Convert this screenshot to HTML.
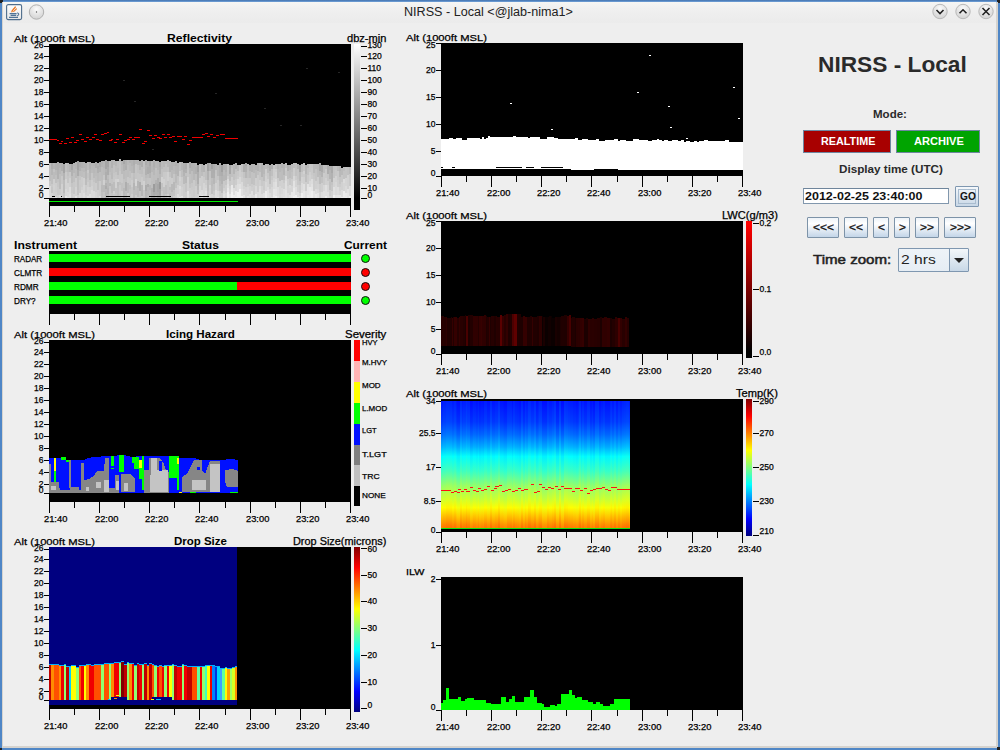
<!DOCTYPE html><html><head><meta charset="utf-8"><style>
html,body{margin:0;padding:0;width:1000px;height:750px;overflow:hidden;background:#eeeeee;}
.t{position:absolute;font-family:"Liberation Sans",sans-serif;white-space:nowrap;line-height:1;transform-origin:0 0;}
.r{position:absolute;}
svg{position:absolute;}
</style></head><body><div style="left:0px;top:0px;width:1000px;height:750px;background:#4f86c6;" class="r"></div>
<div style="left:2px;top:2px;width:996px;height:746px;background:#d5d3cf;" class="r"></div>
<div style="left:3px;top:2px;width:993px;height:744px;background:#eeeeee;" class="r"></div>
<div class="r" style="left:3px;top:0px;width:994px;height:3px;background:linear-gradient(#3f70ad,#6f9fd6 60%,#d8e6f4)"></div>
<div class="r" style="left:3px;top:2px;width:993px;height:21px;background:linear-gradient(#f6f6f4,#f0f0f0 30%,#ebebeb)"></div>
<div style="left:0px;top:0px;width:3px;height:2px;background:#222;" class="r"></div>
<div style="left:0px;top:0px;width:2px;height:3px;background:#222;" class="r"></div>
<div style="left:997px;top:0px;width:3px;height:2px;background:#222;" class="r"></div>
<div style="left:998px;top:0px;width:2px;height:3px;background:#222;" class="r"></div>
<div style="left:0px;top:748px;width:2px;height:2px;background:#222;" class="r"></div>
<div style="left:997px;top:747px;width:3px;height:3px;background:#222;" class="r"></div>
<div class="t" style="top:5.84px;font-size:12px;font-weight:normal;color:#222;left:403.50px;transform:scaleX(1.050);">NIRSS - Local &lt;@jlab-nima1&gt;</div>
<svg style="left:6px;top:4px" width="17" height="17" viewBox="0 0 17 17">
<defs><linearGradient id="ji" x1="0" y1="0" x2="0" y2="1"><stop offset="0" stop-color="#ffffff"/><stop offset="1" stop-color="#e6e6e6"/></linearGradient></defs>
<rect x="0.6" y="0.6" width="15" height="15" rx="1.6" fill="url(#ji)" stroke="#4e6d8c" stroke-width="1.1"/>
<path d="M6 8.3 C5.2 6.8 7.6 5.6 9.6 2.6" stroke="#e8741e" stroke-width="1.3" fill="none"/>
<path d="M7.6 8 C7.4 6.8 9.8 6.2 10.6 4.6" stroke="#e8741e" stroke-width="1.1" fill="none"/>
<path d="M3.6 9.6 H10.6 M4.6 11.4 H10.2 M3 13.4 H12" stroke="#4f7396" stroke-width="1.1"/>
<path d="M11.2 8.8 Q14.4 10.3 11.2 12" stroke="#4f7396" stroke-width="1.1" fill="none"/>
</svg>
<svg style="left:28px;top:4px" width="17" height="17" viewBox="0 0 17 17">
<defs><radialGradient id="gb" cx="50%" cy="30%" r="70%"><stop offset="0" stop-color="#fbfbfb"/><stop offset="1" stop-color="#d2d2d2"/></radialGradient></defs>
<circle cx="8.5" cy="8.0" r="7.2" fill="url(#gb)" stroke="#b0b0b0" stroke-width="1"/>
<circle cx="8.5" cy="8.0" r="0.7" fill="#555"/>
</svg>
<svg style="left:930.5px;top:2px" width="18" height="19" viewBox="-9 -9.5 18 19">
<circle cx="0" cy="0" r="7.2" fill="url(#gb)" stroke="#b9b9b9" stroke-width="1"/>
<path d="M-3.5 -1.5 L0 2 L3.5 -1.5" stroke="#222" stroke-width="1.6" fill="none"/></svg>
<svg style="left:953.5px;top:2px" width="18" height="19" viewBox="-9 -9.5 18 19">
<circle cx="0" cy="0" r="7.2" fill="url(#gb)" stroke="#b9b9b9" stroke-width="1"/>
<path d="M-3.5 1.8 L0 -1.7 L3.5 1.8" stroke="#222" stroke-width="1.6" fill="none"/></svg>
<svg style="left:976.5px;top:2px" width="18" height="19" viewBox="-9 -9.5 18 19">
<circle cx="0" cy="0" r="7.2" fill="url(#gb)" stroke="#b9b9b9" stroke-width="1"/>
<path d="M-3.5 -3.5 L3.5 3.5 M3.5 -3.5 L-3.5 3.5" stroke="#222" stroke-width="1.6" fill="none"/></svg>
<div class="t" style="top:33.96px;font-size:9.5px;font-weight:normal;color:#000;left:13.55px;transform:scaleX(1.179);-webkit-text-stroke:0.25px #000;">Alt (1000ft MSL)</div>
<div class="t" style="top:33.53px;font-size:10px;font-weight:bold;color:#000;left:167.01px;transform:scaleX(1.218);">Reflectivity</div>
<div class="t" style="top:33.53px;font-size:10px;font-weight:normal;color:#000;left:347.06px;transform:scaleX(1.107);-webkit-text-stroke:0.25px #000;">dbz-min</div>
<div style="left:49px;top:44px;width:302px;height:162px;background:#000;" class="r"></div>
<div style="left:44px;top:46px;width:5px;height:1px;background:#000;" class="r"></div>
<div class="t" style="top:41.30px;font-size:8.5px;font-weight:normal;color:#000;right:956.46px;-webkit-text-stroke:0.25px #000;">26</div>
<div style="left:44px;top:56px;width:5px;height:1px;background:#000;" class="r"></div>
<div class="t" style="top:51.80px;font-size:8.5px;font-weight:normal;color:#000;right:956.46px;-webkit-text-stroke:0.25px #000;">24</div>
<div style="left:44px;top:68px;width:5px;height:1px;background:#000;" class="r"></div>
<div class="t" style="top:63.80px;font-size:8.5px;font-weight:normal;color:#000;right:956.46px;-webkit-text-stroke:0.25px #000;">22</div>
<div style="left:44px;top:80px;width:5px;height:1px;background:#000;" class="r"></div>
<div class="t" style="top:75.80px;font-size:8.5px;font-weight:normal;color:#000;right:956.46px;-webkit-text-stroke:0.25px #000;">20</div>
<div style="left:44px;top:92px;width:5px;height:1px;background:#000;" class="r"></div>
<div class="t" style="top:87.80px;font-size:8.5px;font-weight:normal;color:#000;right:956.46px;-webkit-text-stroke:0.25px #000;">18</div>
<div style="left:44px;top:104px;width:5px;height:1px;background:#000;" class="r"></div>
<div class="t" style="top:99.80px;font-size:8.5px;font-weight:normal;color:#000;right:956.46px;-webkit-text-stroke:0.25px #000;">16</div>
<div style="left:44px;top:116px;width:5px;height:1px;background:#000;" class="r"></div>
<div class="t" style="top:111.80px;font-size:8.5px;font-weight:normal;color:#000;right:956.46px;-webkit-text-stroke:0.25px #000;">14</div>
<div style="left:44px;top:128px;width:5px;height:1px;background:#000;" class="r"></div>
<div class="t" style="top:123.80px;font-size:8.5px;font-weight:normal;color:#000;right:956.46px;-webkit-text-stroke:0.25px #000;">12</div>
<div style="left:44px;top:140px;width:5px;height:1px;background:#000;" class="r"></div>
<div class="t" style="top:135.80px;font-size:8.5px;font-weight:normal;color:#000;right:956.46px;-webkit-text-stroke:0.25px #000;">10</div>
<div style="left:44px;top:152px;width:5px;height:1px;background:#000;" class="r"></div>
<div class="t" style="top:147.80px;font-size:8.5px;font-weight:normal;color:#000;right:956.46px;-webkit-text-stroke:0.25px #000;">8</div>
<div style="left:44px;top:164px;width:5px;height:1px;background:#000;" class="r"></div>
<div class="t" style="top:159.80px;font-size:8.5px;font-weight:normal;color:#000;right:956.46px;-webkit-text-stroke:0.25px #000;">6</div>
<div style="left:44px;top:176px;width:5px;height:1px;background:#000;" class="r"></div>
<div class="t" style="top:171.80px;font-size:8.5px;font-weight:normal;color:#000;right:956.46px;-webkit-text-stroke:0.25px #000;">4</div>
<div style="left:44px;top:188px;width:5px;height:1px;background:#000;" class="r"></div>
<div class="t" style="top:183.80px;font-size:8.5px;font-weight:normal;color:#000;right:956.46px;-webkit-text-stroke:0.25px #000;">2</div>
<div style="left:44px;top:198px;width:5px;height:1px;background:#000;" class="r"></div>
<div class="t" style="top:190.80px;font-size:8.5px;font-weight:normal;color:#000;right:956.46px;-webkit-text-stroke:0.25px #000;">0</div>
<svg style="left:49px;top:44px" width="302" height="162" shape-rendering="crispEdges"><rect x="0" y="119" width="2" height="9" fill="rgb(190,190,190)"/><rect x="0" y="128" width="2" height="9" fill="rgb(189,189,189)"/><rect x="0" y="137" width="2" height="5" fill="rgb(200,200,200)"/><rect x="0" y="142" width="2" height="6" fill="rgb(217,217,217)"/><rect x="0" y="148" width="2" height="6" fill="rgb(219,219,219)"/><rect x="2" y="119" width="2" height="3" fill="rgb(173,173,173)"/><rect x="2" y="122" width="2" height="3" fill="rgb(175,175,175)"/><rect x="2" y="125" width="2" height="6" fill="rgb(182,182,182)"/><rect x="2" y="131" width="2" height="9" fill="rgb(192,192,192)"/><rect x="2" y="140" width="2" height="3" fill="rgb(202,202,202)"/><rect x="2" y="143" width="2" height="6" fill="rgb(198,198,198)"/><rect x="2" y="149" width="2" height="5" fill="rgb(214,214,214)"/><rect x="4" y="119" width="2" height="3" fill="rgb(183,183,183)"/><rect x="4" y="122" width="2" height="3" fill="rgb(181,181,181)"/><rect x="4" y="125" width="2" height="3" fill="rgb(195,195,195)"/><rect x="4" y="128" width="2" height="7" fill="rgb(188,188,188)"/><rect x="4" y="135" width="2" height="6" fill="rgb(207,207,207)"/><rect x="4" y="141" width="2" height="4" fill="rgb(210,210,210)"/><rect x="4" y="145" width="2" height="8" fill="rgb(209,209,209)"/><rect x="4" y="153" width="2" height="1" fill="rgb(221,221,221)"/><rect x="6" y="119" width="2" height="7" fill="rgb(178,178,178)"/><rect x="6" y="126" width="2" height="5" fill="rgb(186,186,186)"/><rect x="6" y="131" width="2" height="8" fill="rgb(192,192,192)"/><rect x="6" y="139" width="2" height="9" fill="rgb(206,206,206)"/><rect x="6" y="148" width="2" height="5" fill="rgb(209,209,209)"/><rect x="6" y="153" width="2" height="1" fill="rgb(223,223,223)"/><rect x="8" y="118" width="2" height="8" fill="rgb(176,176,176)"/><rect x="8" y="126" width="2" height="9" fill="rgb(178,178,178)"/><rect x="8" y="135" width="2" height="3" fill="rgb(195,195,195)"/><rect x="8" y="138" width="2" height="5" fill="rgb(199,199,199)"/><rect x="8" y="143" width="2" height="8" fill="rgb(202,202,202)"/><rect x="8" y="151" width="2" height="3" fill="rgb(211,211,211)"/><rect x="10" y="119" width="2" height="5" fill="rgb(178,178,178)"/><rect x="10" y="124" width="2" height="6" fill="rgb(183,183,183)"/><rect x="10" y="130" width="2" height="6" fill="rgb(191,191,191)"/><rect x="10" y="136" width="2" height="9" fill="rgb(189,189,189)"/><rect x="10" y="145" width="2" height="6" fill="rgb(203,203,203)"/><rect x="10" y="151" width="2" height="3" fill="rgb(219,219,219)"/><rect x="12" y="119" width="2" height="8" fill="rgb(175,175,175)"/><rect x="12" y="127" width="2" height="5" fill="rgb(190,190,190)"/><rect x="12" y="132" width="2" height="8" fill="rgb(200,200,200)"/><rect x="12" y="140" width="2" height="8" fill="rgb(209,209,209)"/><rect x="12" y="148" width="2" height="5" fill="rgb(208,208,208)"/><rect x="12" y="153" width="2" height="1" fill="rgb(223,223,223)"/><rect x="14" y="120" width="2" height="9" fill="rgb(165,165,165)"/><rect x="14" y="129" width="2" height="7" fill="rgb(180,180,180)"/><rect x="14" y="136" width="2" height="5" fill="rgb(189,189,189)"/><rect x="14" y="141" width="2" height="8" fill="rgb(188,188,188)"/><rect x="14" y="149" width="2" height="5" fill="rgb(198,198,198)"/><rect x="16" y="119" width="2" height="9" fill="rgb(191,191,191)"/><rect x="16" y="128" width="2" height="7" fill="rgb(201,201,201)"/><rect x="16" y="135" width="2" height="6" fill="rgb(211,211,211)"/><rect x="16" y="141" width="2" height="4" fill="rgb(210,210,210)"/><rect x="16" y="145" width="2" height="7" fill="rgb(216,216,216)"/><rect x="16" y="152" width="2" height="2" fill="rgb(233,233,233)"/><rect x="18" y="119" width="2" height="9" fill="rgb(185,185,185)"/><rect x="18" y="128" width="2" height="4" fill="rgb(193,193,193)"/><rect x="18" y="132" width="2" height="7" fill="rgb(197,197,197)"/><rect x="18" y="139" width="2" height="9" fill="rgb(210,210,210)"/><rect x="18" y="148" width="2" height="5" fill="rgb(218,218,218)"/><rect x="18" y="153" width="2" height="1" fill="rgb(227,227,227)"/><rect x="20" y="120" width="2" height="8" fill="rgb(179,179,179)"/><rect x="20" y="128" width="2" height="6" fill="rgb(200,200,200)"/><rect x="20" y="134" width="2" height="9" fill="rgb(207,207,207)"/><rect x="20" y="143" width="2" height="7" fill="rgb(219,219,219)"/><rect x="20" y="150" width="2" height="4" fill="rgb(224,224,224)"/><rect x="22" y="120" width="2" height="6" fill="rgb(166,166,166)"/><rect x="22" y="126" width="2" height="6" fill="rgb(178,178,178)"/><rect x="22" y="132" width="2" height="7" fill="rgb(188,188,188)"/><rect x="22" y="139" width="2" height="4" fill="rgb(197,197,197)"/><rect x="22" y="143" width="2" height="6" fill="rgb(201,201,201)"/><rect x="22" y="149" width="2" height="5" fill="rgb(206,206,206)"/><rect x="24" y="119" width="2" height="3" fill="rgb(179,179,179)"/><rect x="24" y="122" width="2" height="7" fill="rgb(183,183,183)"/><rect x="24" y="129" width="2" height="9" fill="rgb(192,192,192)"/><rect x="24" y="138" width="2" height="5" fill="rgb(200,200,200)"/><rect x="24" y="143" width="2" height="7" fill="rgb(199,199,199)"/><rect x="24" y="150" width="2" height="4" fill="rgb(211,211,211)"/><rect x="26" y="118" width="2" height="7" fill="rgb(179,179,179)"/><rect x="26" y="125" width="2" height="9" fill="rgb(186,186,186)"/><rect x="26" y="134" width="2" height="9" fill="rgb(203,203,203)"/><rect x="26" y="143" width="2" height="9" fill="rgb(210,210,210)"/><rect x="26" y="152" width="2" height="2" fill="rgb(226,226,226)"/><rect x="28" y="117" width="2" height="9" fill="rgb(162,162,162)"/><rect x="28" y="126" width="2" height="6" fill="rgb(172,172,172)"/><rect x="28" y="132" width="2" height="9" fill="rgb(191,191,191)"/><rect x="28" y="141" width="2" height="5" fill="rgb(192,192,192)"/><rect x="28" y="146" width="2" height="5" fill="rgb(195,195,195)"/><rect x="28" y="151" width="2" height="3" fill="rgb(209,209,209)"/><rect x="30" y="118" width="2" height="5" fill="rgb(172,172,172)"/><rect x="30" y="123" width="2" height="4" fill="rgb(178,178,178)"/><rect x="30" y="127" width="2" height="5" fill="rgb(189,189,189)"/><rect x="30" y="132" width="2" height="4" fill="rgb(197,197,197)"/><rect x="30" y="136" width="2" height="5" fill="rgb(202,202,202)"/><rect x="30" y="141" width="2" height="8" fill="rgb(201,201,201)"/><rect x="30" y="149" width="2" height="5" fill="rgb(218,218,218)"/><rect x="32" y="118" width="2" height="6" fill="rgb(176,176,176)"/><rect x="32" y="124" width="2" height="3" fill="rgb(186,186,186)"/><rect x="32" y="127" width="2" height="6" fill="rgb(190,190,190)"/><rect x="32" y="133" width="2" height="6" fill="rgb(204,204,204)"/><rect x="32" y="139" width="2" height="4" fill="rgb(203,203,203)"/><rect x="32" y="143" width="2" height="3" fill="rgb(208,208,208)"/><rect x="32" y="146" width="2" height="8" fill="rgb(215,215,215)"/><rect x="34" y="118" width="2" height="6" fill="rgb(179,179,179)"/><rect x="34" y="124" width="2" height="4" fill="rgb(186,186,186)"/><rect x="34" y="128" width="2" height="6" fill="rgb(192,192,192)"/><rect x="34" y="134" width="2" height="3" fill="rgb(208,208,208)"/><rect x="34" y="137" width="2" height="4" fill="rgb(208,208,208)"/><rect x="34" y="141" width="2" height="8" fill="rgb(213,213,213)"/><rect x="34" y="149" width="2" height="5" fill="rgb(221,221,221)"/><rect x="36" y="119" width="2" height="8" fill="rgb(179,179,179)"/><rect x="36" y="127" width="2" height="8" fill="rgb(184,184,184)"/><rect x="36" y="135" width="2" height="6" fill="rgb(189,189,189)"/><rect x="36" y="141" width="2" height="7" fill="rgb(203,203,203)"/><rect x="36" y="148" width="2" height="3" fill="rgb(207,207,207)"/><rect x="36" y="151" width="2" height="3" fill="rgb(214,214,214)"/><rect x="38" y="118" width="2" height="8" fill="rgb(187,187,187)"/><rect x="38" y="126" width="2" height="3" fill="rgb(201,201,201)"/><rect x="38" y="129" width="2" height="5" fill="rgb(195,195,195)"/><rect x="38" y="134" width="2" height="4" fill="rgb(199,199,199)"/><rect x="38" y="138" width="2" height="5" fill="rgb(205,205,205)"/><rect x="38" y="143" width="2" height="9" fill="rgb(211,211,211)"/><rect x="38" y="152" width="2" height="2" fill="rgb(224,224,224)"/><rect x="40" y="118" width="2" height="7" fill="rgb(177,177,177)"/><rect x="40" y="125" width="2" height="4" fill="rgb(181,181,181)"/><rect x="40" y="129" width="2" height="7" fill="rgb(185,185,185)"/><rect x="40" y="136" width="2" height="7" fill="rgb(197,197,197)"/><rect x="40" y="143" width="2" height="7" fill="rgb(209,209,209)"/><rect x="40" y="150" width="2" height="4" fill="rgb(222,222,222)"/><rect x="42" y="119" width="2" height="3" fill="rgb(182,182,182)"/><rect x="42" y="122" width="2" height="4" fill="rgb(184,184,184)"/><rect x="42" y="126" width="2" height="3" fill="rgb(187,187,187)"/><rect x="42" y="129" width="2" height="7" fill="rgb(198,198,198)"/><rect x="42" y="136" width="2" height="6" fill="rgb(205,205,205)"/><rect x="42" y="142" width="2" height="4" fill="rgb(210,210,210)"/><rect x="42" y="146" width="2" height="3" fill="rgb(218,218,218)"/><rect x="42" y="149" width="2" height="5" fill="rgb(216,216,216)"/><rect x="44" y="119" width="2" height="3" fill="rgb(180,180,180)"/><rect x="44" y="122" width="2" height="7" fill="rgb(184,184,184)"/><rect x="44" y="129" width="2" height="5" fill="rgb(187,187,187)"/><rect x="44" y="134" width="2" height="4" fill="rgb(196,196,196)"/><rect x="44" y="138" width="2" height="9" fill="rgb(202,202,202)"/><rect x="44" y="147" width="2" height="7" fill="rgb(217,217,217)"/><rect x="46" y="118" width="2" height="6" fill="rgb(173,173,173)"/><rect x="46" y="124" width="2" height="5" fill="rgb(187,187,187)"/><rect x="46" y="129" width="2" height="3" fill="rgb(188,188,188)"/><rect x="46" y="132" width="2" height="7" fill="rgb(191,191,191)"/><rect x="46" y="139" width="2" height="9" fill="rgb(204,204,204)"/><rect x="46" y="148" width="2" height="6" fill="rgb(212,212,212)"/><rect x="48" y="119" width="2" height="3" fill="rgb(178,178,178)"/><rect x="48" y="122" width="2" height="3" fill="rgb(171,171,171)"/><rect x="48" y="125" width="2" height="4" fill="rgb(176,176,176)"/><rect x="48" y="129" width="2" height="4" fill="rgb(187,187,187)"/><rect x="48" y="133" width="2" height="4" fill="rgb(187,187,187)"/><rect x="48" y="137" width="2" height="9" fill="rgb(193,193,193)"/><rect x="48" y="146" width="2" height="7" fill="rgb(207,207,207)"/><rect x="48" y="153" width="2" height="1" fill="rgb(211,211,211)"/><rect x="50" y="118" width="2" height="5" fill="rgb(171,171,171)"/><rect x="50" y="123" width="2" height="5" fill="rgb(178,178,178)"/><rect x="50" y="128" width="2" height="9" fill="rgb(190,190,190)"/><rect x="50" y="137" width="2" height="9" fill="rgb(203,203,203)"/><rect x="50" y="146" width="2" height="6" fill="rgb(204,204,204)"/><rect x="50" y="152" width="2" height="2" fill="rgb(217,217,217)"/><rect x="52" y="117" width="2" height="3" fill="rgb(176,176,176)"/><rect x="52" y="120" width="2" height="3" fill="rgb(179,179,179)"/><rect x="52" y="123" width="2" height="9" fill="rgb(188,188,188)"/><rect x="52" y="132" width="2" height="4" fill="rgb(189,189,189)"/><rect x="52" y="136" width="2" height="5" fill="rgb(192,192,192)"/><rect x="52" y="141" width="2" height="7" fill="rgb(186,186,186)"/><rect x="52" y="148" width="2" height="6" fill="rgb(191,191,191)"/><rect x="54" y="117" width="2" height="7" fill="rgb(181,181,181)"/><rect x="54" y="124" width="2" height="7" fill="rgb(186,186,186)"/><rect x="54" y="131" width="2" height="5" fill="rgb(198,198,198)"/><rect x="54" y="136" width="2" height="5" fill="rgb(208,208,208)"/><rect x="54" y="141" width="2" height="7" fill="rgb(186,186,186)"/><rect x="54" y="148" width="2" height="6" fill="rgb(197,197,197)"/><rect x="56" y="116" width="2" height="9" fill="rgb(165,165,165)"/><rect x="56" y="125" width="2" height="3" fill="rgb(179,179,179)"/><rect x="56" y="128" width="2" height="8" fill="rgb(174,174,174)"/><rect x="56" y="136" width="2" height="3" fill="rgb(189,189,189)"/><rect x="56" y="139" width="2" height="3" fill="rgb(178,178,178)"/><rect x="56" y="142" width="2" height="3" fill="rgb(172,172,172)"/><rect x="56" y="145" width="2" height="4" fill="rgb(185,185,185)"/><rect x="56" y="149" width="2" height="5" fill="rgb(183,183,183)"/><rect x="58" y="117" width="2" height="6" fill="rgb(165,165,165)"/><rect x="58" y="123" width="2" height="8" fill="rgb(172,172,172)"/><rect x="58" y="131" width="2" height="4" fill="rgb(189,189,189)"/><rect x="58" y="135" width="2" height="9" fill="rgb(184,184,184)"/><rect x="58" y="144" width="2" height="6" fill="rgb(179,179,179)"/><rect x="58" y="150" width="2" height="4" fill="rgb(188,188,188)"/><rect x="60" y="117" width="2" height="5" fill="rgb(188,188,188)"/><rect x="60" y="122" width="2" height="6" fill="rgb(187,187,187)"/><rect x="60" y="128" width="2" height="3" fill="rgb(192,192,192)"/><rect x="60" y="131" width="2" height="8" fill="rgb(197,197,197)"/><rect x="60" y="139" width="2" height="3" fill="rgb(181,181,181)"/><rect x="60" y="142" width="2" height="3" fill="rgb(197,197,197)"/><rect x="60" y="145" width="2" height="5" fill="rgb(199,199,199)"/><rect x="60" y="150" width="2" height="4" fill="rgb(199,199,199)"/><rect x="62" y="116" width="2" height="5" fill="rgb(178,178,178)"/><rect x="62" y="121" width="2" height="3" fill="rgb(178,178,178)"/><rect x="62" y="124" width="2" height="5" fill="rgb(189,189,189)"/><rect x="62" y="129" width="2" height="6" fill="rgb(187,187,187)"/><rect x="62" y="135" width="2" height="5" fill="rgb(196,196,196)"/><rect x="62" y="140" width="2" height="9" fill="rgb(187,187,187)"/><rect x="62" y="149" width="2" height="5" fill="rgb(196,196,196)"/><rect x="64" y="116" width="2" height="5" fill="rgb(185,185,185)"/><rect x="64" y="121" width="2" height="4" fill="rgb(194,194,194)"/><rect x="64" y="125" width="2" height="4" fill="rgb(194,194,194)"/><rect x="64" y="129" width="2" height="4" fill="rgb(198,198,198)"/><rect x="64" y="133" width="2" height="5" fill="rgb(200,200,200)"/><rect x="64" y="138" width="2" height="9" fill="rgb(189,189,189)"/><rect x="64" y="147" width="2" height="3" fill="rgb(207,207,207)"/><rect x="64" y="150" width="2" height="4" fill="rgb(199,199,199)"/><rect x="66" y="117" width="2" height="5" fill="rgb(183,183,183)"/><rect x="66" y="122" width="2" height="6" fill="rgb(189,189,189)"/><rect x="66" y="128" width="2" height="3" fill="rgb(197,197,197)"/><rect x="66" y="131" width="2" height="4" fill="rgb(200,200,200)"/><rect x="66" y="135" width="2" height="9" fill="rgb(209,209,209)"/><rect x="66" y="144" width="2" height="5" fill="rgb(193,193,193)"/><rect x="66" y="149" width="2" height="5" fill="rgb(197,197,197)"/><rect x="68" y="117" width="2" height="7" fill="rgb(191,191,191)"/><rect x="68" y="124" width="2" height="7" fill="rgb(187,187,187)"/><rect x="68" y="131" width="2" height="4" fill="rgb(197,197,197)"/><rect x="68" y="135" width="2" height="3" fill="rgb(211,211,211)"/><rect x="68" y="138" width="2" height="4" fill="rgb(188,188,188)"/><rect x="68" y="142" width="2" height="3" fill="rgb(191,191,191)"/><rect x="68" y="145" width="2" height="7" fill="rgb(191,191,191)"/><rect x="68" y="152" width="2" height="2" fill="rgb(199,199,199)"/><rect x="70" y="115" width="2" height="3" fill="rgb(184,184,184)"/><rect x="70" y="118" width="2" height="9" fill="rgb(195,195,195)"/><rect x="70" y="127" width="2" height="5" fill="rgb(199,199,199)"/><rect x="70" y="132" width="2" height="6" fill="rgb(200,200,200)"/><rect x="70" y="138" width="2" height="3" fill="rgb(192,192,192)"/><rect x="70" y="141" width="2" height="9" fill="rgb(200,200,200)"/><rect x="70" y="150" width="2" height="4" fill="rgb(198,198,198)"/><rect x="72" y="117" width="2" height="4" fill="rgb(183,183,183)"/><rect x="72" y="121" width="2" height="9" fill="rgb(187,187,187)"/><rect x="72" y="130" width="2" height="4" fill="rgb(200,200,200)"/><rect x="72" y="134" width="2" height="5" fill="rgb(201,201,201)"/><rect x="72" y="139" width="2" height="8" fill="rgb(193,193,193)"/><rect x="72" y="147" width="2" height="7" fill="rgb(204,204,204)"/><rect x="74" y="116" width="2" height="4" fill="rgb(166,166,166)"/><rect x="74" y="120" width="2" height="7" fill="rgb(179,179,179)"/><rect x="74" y="127" width="2" height="3" fill="rgb(188,188,188)"/><rect x="74" y="130" width="2" height="5" fill="rgb(188,188,188)"/><rect x="74" y="135" width="2" height="9" fill="rgb(195,195,195)"/><rect x="74" y="144" width="2" height="7" fill="rgb(185,185,185)"/><rect x="74" y="151" width="2" height="3" fill="rgb(185,185,185)"/><rect x="76" y="116" width="2" height="6" fill="rgb(177,177,177)"/><rect x="76" y="122" width="2" height="4" fill="rgb(175,175,175)"/><rect x="76" y="126" width="2" height="8" fill="rgb(190,190,190)"/><rect x="76" y="134" width="2" height="4" fill="rgb(192,192,192)"/><rect x="76" y="138" width="2" height="9" fill="rgb(174,174,174)"/><rect x="76" y="147" width="2" height="7" fill="rgb(190,190,190)"/><rect x="78" y="116" width="2" height="5" fill="rgb(185,185,185)"/><rect x="78" y="121" width="2" height="6" fill="rgb(190,190,190)"/><rect x="78" y="127" width="2" height="6" fill="rgb(189,189,189)"/><rect x="78" y="133" width="2" height="6" fill="rgb(200,200,200)"/><rect x="78" y="139" width="2" height="4" fill="rgb(186,186,186)"/><rect x="78" y="143" width="2" height="6" fill="rgb(186,186,186)"/><rect x="78" y="149" width="2" height="5" fill="rgb(203,203,203)"/><rect x="80" y="116" width="2" height="3" fill="rgb(178,178,178)"/><rect x="80" y="119" width="2" height="8" fill="rgb(186,186,186)"/><rect x="80" y="127" width="2" height="7" fill="rgb(192,192,192)"/><rect x="80" y="134" width="2" height="7" fill="rgb(199,199,199)"/><rect x="80" y="141" width="2" height="4" fill="rgb(189,189,189)"/><rect x="80" y="145" width="2" height="9" fill="rgb(194,194,194)"/><rect x="82" y="116" width="2" height="6" fill="rgb(180,180,180)"/><rect x="82" y="122" width="2" height="7" fill="rgb(185,185,185)"/><rect x="82" y="129" width="2" height="4" fill="rgb(199,199,199)"/><rect x="82" y="133" width="2" height="3" fill="rgb(198,198,198)"/><rect x="82" y="136" width="2" height="7" fill="rgb(205,205,205)"/><rect x="82" y="143" width="2" height="7" fill="rgb(197,197,197)"/><rect x="82" y="150" width="2" height="4" fill="rgb(205,205,205)"/><rect x="84" y="116" width="2" height="5" fill="rgb(174,174,174)"/><rect x="84" y="121" width="2" height="8" fill="rgb(179,179,179)"/><rect x="84" y="129" width="2" height="4" fill="rgb(192,192,192)"/><rect x="84" y="133" width="2" height="6" fill="rgb(190,190,190)"/><rect x="84" y="139" width="2" height="7" fill="rgb(181,181,181)"/><rect x="84" y="146" width="2" height="8" fill="rgb(190,190,190)"/><rect x="86" y="116" width="2" height="4" fill="rgb(180,180,180)"/><rect x="86" y="120" width="2" height="3" fill="rgb(196,196,196)"/><rect x="86" y="123" width="2" height="7" fill="rgb(197,197,197)"/><rect x="86" y="130" width="2" height="5" fill="rgb(197,197,197)"/><rect x="86" y="135" width="2" height="7" fill="rgb(213,213,213)"/><rect x="86" y="142" width="2" height="9" fill="rgb(191,191,191)"/><rect x="86" y="151" width="2" height="3" fill="rgb(202,202,202)"/><rect x="88" y="116" width="2" height="5" fill="rgb(179,179,179)"/><rect x="88" y="121" width="2" height="8" fill="rgb(193,193,193)"/><rect x="88" y="129" width="2" height="8" fill="rgb(198,198,198)"/><rect x="88" y="137" width="2" height="7" fill="rgb(181,181,181)"/><rect x="88" y="144" width="2" height="9" fill="rgb(188,188,188)"/><rect x="88" y="153" width="2" height="1" fill="rgb(205,205,205)"/><rect x="90" y="117" width="2" height="4" fill="rgb(174,174,174)"/><rect x="90" y="121" width="2" height="5" fill="rgb(182,182,182)"/><rect x="90" y="126" width="2" height="4" fill="rgb(191,191,191)"/><rect x="90" y="130" width="2" height="8" fill="rgb(198,198,198)"/><rect x="90" y="138" width="2" height="9" fill="rgb(175,175,175)"/><rect x="90" y="147" width="2" height="6" fill="rgb(196,196,196)"/><rect x="90" y="153" width="2" height="1" fill="rgb(203,203,203)"/><rect x="92" y="116" width="2" height="7" fill="rgb(174,174,174)"/><rect x="92" y="123" width="2" height="7" fill="rgb(190,190,190)"/><rect x="92" y="130" width="2" height="3" fill="rgb(195,195,195)"/><rect x="92" y="133" width="2" height="3" fill="rgb(202,202,202)"/><rect x="92" y="136" width="2" height="5" fill="rgb(204,204,204)"/><rect x="92" y="141" width="2" height="3" fill="rgb(183,183,183)"/><rect x="92" y="144" width="2" height="8" fill="rgb(183,183,183)"/><rect x="92" y="152" width="2" height="2" fill="rgb(203,203,203)"/><rect x="94" y="117" width="2" height="8" fill="rgb(192,192,192)"/><rect x="94" y="125" width="2" height="3" fill="rgb(197,197,197)"/><rect x="94" y="128" width="2" height="9" fill="rgb(196,196,196)"/><rect x="94" y="137" width="2" height="9" fill="rgb(209,209,209)"/><rect x="94" y="146" width="2" height="8" fill="rgb(199,199,199)"/><rect x="96" y="116" width="2" height="5" fill="rgb(172,172,172)"/><rect x="96" y="121" width="2" height="4" fill="rgb(179,179,179)"/><rect x="96" y="125" width="2" height="6" fill="rgb(177,177,177)"/><rect x="96" y="131" width="2" height="3" fill="rgb(187,187,187)"/><rect x="96" y="134" width="2" height="7" fill="rgb(192,192,192)"/><rect x="96" y="141" width="2" height="6" fill="rgb(173,173,173)"/><rect x="96" y="147" width="2" height="7" fill="rgb(183,183,183)"/><rect x="98" y="117" width="2" height="6" fill="rgb(178,178,178)"/><rect x="98" y="123" width="2" height="7" fill="rgb(173,173,173)"/><rect x="98" y="130" width="2" height="4" fill="rgb(189,189,189)"/><rect x="98" y="134" width="2" height="6" fill="rgb(195,195,195)"/><rect x="98" y="140" width="2" height="3" fill="rgb(173,173,173)"/><rect x="98" y="143" width="2" height="8" fill="rgb(185,185,185)"/><rect x="98" y="151" width="2" height="3" fill="rgb(189,189,189)"/><rect x="100" y="117" width="2" height="5" fill="rgb(167,167,167)"/><rect x="100" y="122" width="2" height="7" fill="rgb(173,173,173)"/><rect x="100" y="129" width="2" height="5" fill="rgb(182,182,182)"/><rect x="100" y="134" width="2" height="7" fill="rgb(196,196,196)"/><rect x="100" y="141" width="2" height="5" fill="rgb(182,182,182)"/><rect x="100" y="146" width="2" height="6" fill="rgb(189,189,189)"/><rect x="100" y="152" width="2" height="2" fill="rgb(196,196,196)"/><rect x="102" y="117" width="2" height="5" fill="rgb(184,184,184)"/><rect x="102" y="122" width="2" height="6" fill="rgb(183,183,183)"/><rect x="102" y="128" width="2" height="9" fill="rgb(192,192,192)"/><rect x="102" y="137" width="2" height="7" fill="rgb(190,190,190)"/><rect x="102" y="144" width="2" height="4" fill="rgb(176,176,176)"/><rect x="102" y="148" width="2" height="6" fill="rgb(178,178,178)"/><rect x="104" y="116" width="2" height="7" fill="rgb(174,174,174)"/><rect x="104" y="123" width="2" height="3" fill="rgb(178,178,178)"/><rect x="104" y="126" width="2" height="5" fill="rgb(184,184,184)"/><rect x="104" y="131" width="2" height="9" fill="rgb(190,190,190)"/><rect x="104" y="140" width="2" height="8" fill="rgb(156,156,156)"/><rect x="104" y="148" width="2" height="3" fill="rgb(171,171,171)"/><rect x="104" y="151" width="2" height="3" fill="rgb(175,175,175)"/><rect x="106" y="117" width="2" height="7" fill="rgb(183,183,183)"/><rect x="106" y="124" width="2" height="5" fill="rgb(192,192,192)"/><rect x="106" y="129" width="2" height="7" fill="rgb(191,191,191)"/><rect x="106" y="136" width="2" height="3" fill="rgb(180,180,180)"/><rect x="106" y="139" width="2" height="6" fill="rgb(173,173,173)"/><rect x="106" y="145" width="2" height="6" fill="rgb(174,174,174)"/><rect x="106" y="151" width="2" height="3" fill="rgb(184,184,184)"/><rect x="108" y="117" width="2" height="9" fill="rgb(181,181,181)"/><rect x="108" y="126" width="2" height="8" fill="rgb(189,189,189)"/><rect x="108" y="134" width="2" height="6" fill="rgb(175,175,175)"/><rect x="108" y="140" width="2" height="8" fill="rgb(167,167,167)"/><rect x="108" y="148" width="2" height="6" fill="rgb(173,173,173)"/><rect x="110" y="118" width="2" height="5" fill="rgb(170,170,170)"/><rect x="110" y="123" width="2" height="7" fill="rgb(176,176,176)"/><rect x="110" y="130" width="2" height="8" fill="rgb(185,185,185)"/><rect x="110" y="138" width="2" height="7" fill="rgb(151,151,151)"/><rect x="110" y="145" width="2" height="6" fill="rgb(165,165,165)"/><rect x="110" y="151" width="2" height="3" fill="rgb(171,171,171)"/><rect x="112" y="117" width="2" height="8" fill="rgb(187,187,187)"/><rect x="112" y="125" width="2" height="8" fill="rgb(194,194,194)"/><rect x="112" y="133" width="2" height="6" fill="rgb(210,210,210)"/><rect x="112" y="139" width="2" height="8" fill="rgb(195,195,195)"/><rect x="112" y="147" width="2" height="4" fill="rgb(202,202,202)"/><rect x="112" y="151" width="2" height="3" fill="rgb(201,201,201)"/><rect x="114" y="117" width="2" height="6" fill="rgb(184,184,184)"/><rect x="114" y="123" width="2" height="5" fill="rgb(193,193,193)"/><rect x="114" y="128" width="2" height="7" fill="rgb(201,201,201)"/><rect x="114" y="135" width="2" height="8" fill="rgb(209,209,209)"/><rect x="114" y="143" width="2" height="3" fill="rgb(194,194,194)"/><rect x="114" y="146" width="2" height="8" fill="rgb(193,193,193)"/><rect x="116" y="117" width="2" height="3" fill="rgb(186,186,186)"/><rect x="116" y="120" width="2" height="8" fill="rgb(193,193,193)"/><rect x="116" y="128" width="2" height="4" fill="rgb(202,202,202)"/><rect x="116" y="132" width="2" height="9" fill="rgb(203,203,203)"/><rect x="116" y="141" width="2" height="9" fill="rgb(191,191,191)"/><rect x="116" y="150" width="2" height="4" fill="rgb(199,199,199)"/><rect x="118" y="116" width="2" height="7" fill="rgb(184,184,184)"/><rect x="118" y="123" width="2" height="5" fill="rgb(195,195,195)"/><rect x="118" y="128" width="2" height="9" fill="rgb(208,208,208)"/><rect x="118" y="137" width="2" height="6" fill="rgb(197,197,197)"/><rect x="118" y="143" width="2" height="7" fill="rgb(197,197,197)"/><rect x="118" y="150" width="2" height="4" fill="rgb(208,208,208)"/><rect x="120" y="117" width="2" height="4" fill="rgb(182,182,182)"/><rect x="120" y="121" width="2" height="7" fill="rgb(179,179,179)"/><rect x="120" y="128" width="2" height="5" fill="rgb(195,195,195)"/><rect x="120" y="133" width="2" height="3" fill="rgb(204,204,204)"/><rect x="120" y="136" width="2" height="7" fill="rgb(202,202,202)"/><rect x="120" y="143" width="2" height="3" fill="rgb(189,189,189)"/><rect x="120" y="146" width="2" height="3" fill="rgb(197,197,197)"/><rect x="120" y="149" width="2" height="5" fill="rgb(191,191,191)"/><rect x="122" y="118" width="2" height="8" fill="rgb(178,178,178)"/><rect x="122" y="126" width="2" height="8" fill="rgb(186,186,186)"/><rect x="122" y="134" width="2" height="6" fill="rgb(204,204,204)"/><rect x="122" y="140" width="2" height="8" fill="rgb(185,185,185)"/><rect x="122" y="148" width="2" height="6" fill="rgb(195,195,195)"/><rect x="124" y="118" width="2" height="4" fill="rgb(179,179,179)"/><rect x="124" y="122" width="2" height="5" fill="rgb(184,184,184)"/><rect x="124" y="127" width="2" height="3" fill="rgb(187,187,187)"/><rect x="124" y="130" width="2" height="8" fill="rgb(198,198,198)"/><rect x="124" y="138" width="2" height="8" fill="rgb(184,184,184)"/><rect x="124" y="146" width="2" height="6" fill="rgb(196,196,196)"/><rect x="124" y="152" width="2" height="2" fill="rgb(206,206,206)"/><rect x="126" y="117" width="2" height="5" fill="rgb(175,175,175)"/><rect x="126" y="122" width="2" height="8" fill="rgb(181,181,181)"/><rect x="126" y="130" width="2" height="9" fill="rgb(187,187,187)"/><rect x="126" y="139" width="2" height="5" fill="rgb(194,194,194)"/><rect x="126" y="144" width="2" height="7" fill="rgb(206,206,206)"/><rect x="126" y="151" width="2" height="3" fill="rgb(209,209,209)"/><rect x="128" y="119" width="2" height="4" fill="rgb(179,179,179)"/><rect x="128" y="123" width="2" height="9" fill="rgb(180,180,180)"/><rect x="128" y="132" width="2" height="9" fill="rgb(196,196,196)"/><rect x="128" y="141" width="2" height="5" fill="rgb(209,209,209)"/><rect x="128" y="146" width="2" height="4" fill="rgb(208,208,208)"/><rect x="128" y="150" width="2" height="4" fill="rgb(220,220,220)"/><rect x="130" y="118" width="2" height="3" fill="rgb(190,190,190)"/><rect x="130" y="121" width="2" height="6" fill="rgb(189,189,189)"/><rect x="130" y="127" width="2" height="6" fill="rgb(203,203,203)"/><rect x="130" y="133" width="2" height="4" fill="rgb(210,210,210)"/><rect x="130" y="137" width="2" height="5" fill="rgb(206,206,206)"/><rect x="130" y="142" width="2" height="3" fill="rgb(219,219,219)"/><rect x="130" y="145" width="2" height="8" fill="rgb(214,214,214)"/><rect x="130" y="153" width="2" height="1" fill="rgb(230,230,230)"/><rect x="132" y="118" width="2" height="8" fill="rgb(180,180,180)"/><rect x="132" y="126" width="2" height="7" fill="rgb(191,191,191)"/><rect x="132" y="133" width="2" height="6" fill="rgb(203,203,203)"/><rect x="132" y="139" width="2" height="4" fill="rgb(204,204,204)"/><rect x="132" y="143" width="2" height="9" fill="rgb(209,209,209)"/><rect x="132" y="152" width="2" height="2" fill="rgb(224,224,224)"/><rect x="134" y="119" width="2" height="9" fill="rgb(175,175,175)"/><rect x="134" y="128" width="2" height="4" fill="rgb(180,180,180)"/><rect x="134" y="132" width="2" height="8" fill="rgb(187,187,187)"/><rect x="134" y="140" width="2" height="8" fill="rgb(204,204,204)"/><rect x="134" y="148" width="2" height="5" fill="rgb(204,204,204)"/><rect x="134" y="153" width="2" height="1" fill="rgb(212,212,212)"/><rect x="136" y="119" width="2" height="6" fill="rgb(171,171,171)"/><rect x="136" y="125" width="2" height="4" fill="rgb(177,177,177)"/><rect x="136" y="129" width="2" height="3" fill="rgb(194,194,194)"/><rect x="136" y="132" width="2" height="7" fill="rgb(185,185,185)"/><rect x="136" y="139" width="2" height="9" fill="rgb(197,197,197)"/><rect x="136" y="148" width="2" height="6" fill="rgb(204,204,204)"/><rect x="138" y="119" width="2" height="7" fill="rgb(193,193,193)"/><rect x="138" y="126" width="2" height="7" fill="rgb(197,197,197)"/><rect x="138" y="133" width="2" height="5" fill="rgb(208,208,208)"/><rect x="138" y="138" width="2" height="9" fill="rgb(208,208,208)"/><rect x="138" y="147" width="2" height="3" fill="rgb(224,224,224)"/><rect x="138" y="150" width="2" height="4" fill="rgb(221,221,221)"/><rect x="140" y="118" width="2" height="6" fill="rgb(170,170,170)"/><rect x="140" y="124" width="2" height="6" fill="rgb(181,181,181)"/><rect x="140" y="130" width="2" height="6" fill="rgb(193,193,193)"/><rect x="140" y="136" width="2" height="4" fill="rgb(191,191,191)"/><rect x="140" y="140" width="2" height="4" fill="rgb(196,196,196)"/><rect x="140" y="144" width="2" height="6" fill="rgb(205,205,205)"/><rect x="140" y="150" width="2" height="4" fill="rgb(210,210,210)"/><rect x="142" y="119" width="2" height="8" fill="rgb(178,178,178)"/><rect x="142" y="127" width="2" height="5" fill="rgb(190,190,190)"/><rect x="142" y="132" width="2" height="7" fill="rgb(190,190,190)"/><rect x="142" y="139" width="2" height="4" fill="rgb(199,199,199)"/><rect x="142" y="143" width="2" height="3" fill="rgb(202,202,202)"/><rect x="142" y="146" width="2" height="8" fill="rgb(206,206,206)"/><rect x="144" y="119" width="2" height="6" fill="rgb(179,179,179)"/><rect x="144" y="125" width="2" height="5" fill="rgb(180,180,180)"/><rect x="144" y="130" width="2" height="6" fill="rgb(185,185,185)"/><rect x="144" y="136" width="2" height="9" fill="rgb(202,202,202)"/><rect x="144" y="145" width="2" height="8" fill="rgb(203,203,203)"/><rect x="144" y="153" width="2" height="1" fill="rgb(210,210,210)"/><rect x="146" y="119" width="2" height="4" fill="rgb(182,182,182)"/><rect x="146" y="123" width="2" height="7" fill="rgb(176,176,176)"/><rect x="146" y="130" width="2" height="7" fill="rgb(191,191,191)"/><rect x="146" y="137" width="2" height="5" fill="rgb(195,195,195)"/><rect x="146" y="142" width="2" height="3" fill="rgb(206,206,206)"/><rect x="146" y="145" width="2" height="8" fill="rgb(207,207,207)"/><rect x="146" y="153" width="2" height="1" fill="rgb(212,212,212)"/><rect x="148" y="121" width="2" height="7" fill="rgb(163,163,163)"/><rect x="148" y="128" width="2" height="3" fill="rgb(173,173,173)"/><rect x="148" y="131" width="2" height="9" fill="rgb(174,174,174)"/><rect x="148" y="140" width="2" height="6" fill="rgb(186,186,186)"/><rect x="148" y="146" width="2" height="4" fill="rgb(192,192,192)"/><rect x="148" y="150" width="2" height="4" fill="rgb(207,207,207)"/><rect x="150" y="120" width="2" height="5" fill="rgb(193,193,193)"/><rect x="150" y="125" width="2" height="9" fill="rgb(192,192,192)"/><rect x="150" y="134" width="2" height="8" fill="rgb(207,207,207)"/><rect x="150" y="142" width="2" height="6" fill="rgb(215,215,215)"/><rect x="150" y="148" width="2" height="6" fill="rgb(221,221,221)"/><rect x="152" y="120" width="2" height="8" fill="rgb(183,183,183)"/><rect x="152" y="128" width="2" height="4" fill="rgb(189,189,189)"/><rect x="152" y="132" width="2" height="7" fill="rgb(206,206,206)"/><rect x="152" y="139" width="2" height="7" fill="rgb(205,205,205)"/><rect x="152" y="146" width="2" height="5" fill="rgb(218,218,218)"/><rect x="152" y="151" width="2" height="3" fill="rgb(229,229,229)"/><rect x="154" y="121" width="2" height="7" fill="rgb(180,180,180)"/><rect x="154" y="128" width="2" height="5" fill="rgb(196,196,196)"/><rect x="154" y="133" width="2" height="6" fill="rgb(203,203,203)"/><rect x="154" y="139" width="2" height="4" fill="rgb(213,213,213)"/><rect x="154" y="143" width="2" height="7" fill="rgb(214,214,214)"/><rect x="154" y="150" width="2" height="4" fill="rgb(217,217,217)"/><rect x="156" y="120" width="2" height="7" fill="rgb(194,194,194)"/><rect x="156" y="127" width="2" height="9" fill="rgb(192,192,192)"/><rect x="156" y="136" width="2" height="5" fill="rgb(204,204,204)"/><rect x="156" y="141" width="2" height="3" fill="rgb(210,210,210)"/><rect x="156" y="144" width="2" height="3" fill="rgb(215,215,215)"/><rect x="156" y="147" width="2" height="7" fill="rgb(222,222,222)"/><rect x="158" y="119" width="2" height="8" fill="rgb(162,162,162)"/><rect x="158" y="127" width="2" height="9" fill="rgb(178,178,178)"/><rect x="158" y="136" width="2" height="6" fill="rgb(189,189,189)"/><rect x="158" y="142" width="2" height="5" fill="rgb(189,189,189)"/><rect x="158" y="147" width="2" height="5" fill="rgb(194,194,194)"/><rect x="158" y="152" width="2" height="2" fill="rgb(208,208,208)"/><rect x="160" y="119" width="2" height="8" fill="rgb(176,176,176)"/><rect x="160" y="127" width="2" height="6" fill="rgb(195,195,195)"/><rect x="160" y="133" width="2" height="8" fill="rgb(197,197,197)"/><rect x="160" y="141" width="2" height="3" fill="rgb(211,211,211)"/><rect x="160" y="144" width="2" height="7" fill="rgb(208,208,208)"/><rect x="160" y="151" width="2" height="3" fill="rgb(216,216,216)"/><rect x="162" y="120" width="2" height="5" fill="rgb(162,162,162)"/><rect x="162" y="125" width="2" height="9" fill="rgb(174,174,174)"/><rect x="162" y="134" width="2" height="3" fill="rgb(190,190,190)"/><rect x="162" y="137" width="2" height="5" fill="rgb(188,188,188)"/><rect x="162" y="142" width="2" height="8" fill="rgb(191,191,191)"/><rect x="162" y="150" width="2" height="4" fill="rgb(211,211,211)"/><rect x="164" y="120" width="2" height="9" fill="rgb(173,173,173)"/><rect x="164" y="129" width="2" height="5" fill="rgb(175,175,175)"/><rect x="164" y="134" width="2" height="6" fill="rgb(183,183,183)"/><rect x="164" y="140" width="2" height="7" fill="rgb(195,195,195)"/><rect x="164" y="147" width="2" height="4" fill="rgb(201,201,201)"/><rect x="164" y="151" width="2" height="3" fill="rgb(209,209,209)"/><rect x="166" y="120" width="2" height="6" fill="rgb(179,179,179)"/><rect x="166" y="126" width="2" height="4" fill="rgb(195,195,195)"/><rect x="166" y="130" width="2" height="9" fill="rgb(197,197,197)"/><rect x="166" y="139" width="2" height="7" fill="rgb(209,209,209)"/><rect x="166" y="146" width="2" height="8" fill="rgb(219,219,219)"/><rect x="168" y="121" width="2" height="3" fill="rgb(181,181,181)"/><rect x="168" y="124" width="2" height="8" fill="rgb(182,182,182)"/><rect x="168" y="132" width="2" height="4" fill="rgb(196,196,196)"/><rect x="168" y="136" width="2" height="6" fill="rgb(204,204,204)"/><rect x="168" y="142" width="2" height="5" fill="rgb(204,204,204)"/><rect x="168" y="147" width="2" height="6" fill="rgb(215,215,215)"/><rect x="168" y="153" width="2" height="1" fill="rgb(226,226,226)"/><rect x="170" y="119" width="2" height="5" fill="rgb(173,173,173)"/><rect x="170" y="124" width="2" height="8" fill="rgb(175,175,175)"/><rect x="170" y="132" width="2" height="5" fill="rgb(182,182,182)"/><rect x="170" y="137" width="2" height="5" fill="rgb(187,187,187)"/><rect x="170" y="142" width="2" height="5" fill="rgb(192,192,192)"/><rect x="170" y="147" width="2" height="5" fill="rgb(205,205,205)"/><rect x="170" y="152" width="2" height="2" fill="rgb(208,208,208)"/><rect x="172" y="121" width="2" height="7" fill="rgb(161,161,161)"/><rect x="172" y="128" width="2" height="4" fill="rgb(173,173,173)"/><rect x="172" y="132" width="2" height="8" fill="rgb(179,179,179)"/><rect x="172" y="140" width="2" height="9" fill="rgb(189,189,189)"/><rect x="172" y="149" width="2" height="5" fill="rgb(206,206,206)"/><rect x="174" y="120" width="2" height="6" fill="rgb(175,175,175)"/><rect x="174" y="126" width="2" height="5" fill="rgb(186,186,186)"/><rect x="174" y="131" width="2" height="6" fill="rgb(182,182,182)"/><rect x="174" y="137" width="2" height="7" fill="rgb(201,201,201)"/><rect x="174" y="144" width="2" height="3" fill="rgb(209,209,209)"/><rect x="174" y="147" width="2" height="3" fill="rgb(219,219,219)"/><rect x="174" y="150" width="2" height="4" fill="rgb(224,224,224)"/><rect x="176" y="120" width="2" height="8" fill="rgb(176,176,176)"/><rect x="176" y="128" width="2" height="8" fill="rgb(181,181,181)"/><rect x="176" y="136" width="2" height="5" fill="rgb(198,198,198)"/><rect x="176" y="141" width="2" height="8" fill="rgb(207,207,207)"/><rect x="176" y="149" width="2" height="5" fill="rgb(216,216,216)"/><rect x="178" y="120" width="2" height="5" fill="rgb(193,193,193)"/><rect x="178" y="125" width="2" height="7" fill="rgb(194,194,194)"/><rect x="178" y="132" width="2" height="3" fill="rgb(204,204,204)"/><rect x="178" y="135" width="2" height="5" fill="rgb(217,217,217)"/><rect x="178" y="140" width="2" height="4" fill="rgb(223,223,223)"/><rect x="178" y="144" width="2" height="4" fill="rgb(231,231,231)"/><rect x="178" y="148" width="2" height="4" fill="rgb(240,240,240)"/><rect x="178" y="152" width="2" height="2" fill="rgb(240,240,240)"/><rect x="180" y="121" width="2" height="9" fill="rgb(168,168,168)"/><rect x="180" y="130" width="2" height="7" fill="rgb(190,190,190)"/><rect x="180" y="137" width="2" height="5" fill="rgb(202,202,202)"/><rect x="180" y="142" width="2" height="3" fill="rgb(211,211,211)"/><rect x="180" y="145" width="2" height="5" fill="rgb(214,214,214)"/><rect x="180" y="150" width="2" height="4" fill="rgb(229,229,229)"/><rect x="182" y="121" width="2" height="3" fill="rgb(187,187,187)"/><rect x="182" y="124" width="2" height="9" fill="rgb(193,193,193)"/><rect x="182" y="133" width="2" height="8" fill="rgb(206,206,206)"/><rect x="182" y="141" width="2" height="7" fill="rgb(232,232,232)"/><rect x="182" y="148" width="2" height="3" fill="rgb(240,240,240)"/><rect x="182" y="151" width="2" height="3" fill="rgb(240,240,240)"/><rect x="184" y="120" width="2" height="4" fill="rgb(182,182,182)"/><rect x="184" y="124" width="2" height="6" fill="rgb(181,181,181)"/><rect x="184" y="130" width="2" height="6" fill="rgb(194,194,194)"/><rect x="184" y="136" width="2" height="8" fill="rgb(201,201,201)"/><rect x="184" y="144" width="2" height="7" fill="rgb(221,221,221)"/><rect x="184" y="151" width="2" height="3" fill="rgb(235,235,235)"/><rect x="186" y="119" width="2" height="6" fill="rgb(177,177,177)"/><rect x="186" y="125" width="2" height="3" fill="rgb(193,193,193)"/><rect x="186" y="128" width="2" height="7" fill="rgb(198,198,198)"/><rect x="186" y="135" width="2" height="6" fill="rgb(204,204,204)"/><rect x="186" y="141" width="2" height="6" fill="rgb(216,216,216)"/><rect x="186" y="147" width="2" height="6" fill="rgb(233,233,233)"/><rect x="186" y="153" width="2" height="1" fill="rgb(240,240,240)"/><rect x="188" y="121" width="2" height="6" fill="rgb(184,184,184)"/><rect x="188" y="127" width="2" height="5" fill="rgb(200,200,200)"/><rect x="188" y="132" width="2" height="3" fill="rgb(203,203,203)"/><rect x="188" y="135" width="2" height="5" fill="rgb(216,216,216)"/><rect x="188" y="140" width="2" height="8" fill="rgb(222,222,222)"/><rect x="188" y="148" width="2" height="3" fill="rgb(240,240,240)"/><rect x="188" y="151" width="2" height="3" fill="rgb(240,240,240)"/><rect x="190" y="121" width="2" height="5" fill="rgb(201,201,201)"/><rect x="190" y="126" width="2" height="7" fill="rgb(206,206,206)"/><rect x="190" y="133" width="2" height="7" fill="rgb(215,215,215)"/><rect x="190" y="140" width="2" height="5" fill="rgb(225,225,225)"/><rect x="190" y="145" width="2" height="6" fill="rgb(240,240,240)"/><rect x="190" y="151" width="2" height="3" fill="rgb(240,240,240)"/><rect x="192" y="120" width="2" height="8" fill="rgb(194,194,194)"/><rect x="192" y="128" width="2" height="5" fill="rgb(203,203,203)"/><rect x="192" y="133" width="2" height="5" fill="rgb(206,206,206)"/><rect x="192" y="138" width="2" height="7" fill="rgb(218,218,218)"/><rect x="192" y="145" width="2" height="7" fill="rgb(223,223,223)"/><rect x="192" y="152" width="2" height="2" fill="rgb(240,240,240)"/><rect x="194" y="120" width="2" height="8" fill="rgb(174,174,174)"/><rect x="194" y="128" width="2" height="6" fill="rgb(196,196,196)"/><rect x="194" y="134" width="2" height="8" fill="rgb(203,203,203)"/><rect x="194" y="142" width="2" height="3" fill="rgb(211,211,211)"/><rect x="194" y="145" width="2" height="6" fill="rgb(216,216,216)"/><rect x="194" y="151" width="2" height="3" fill="rgb(229,229,229)"/><rect x="196" y="119" width="2" height="3" fill="rgb(168,168,168)"/><rect x="196" y="122" width="2" height="6" fill="rgb(176,176,176)"/><rect x="196" y="128" width="2" height="6" fill="rgb(184,184,184)"/><rect x="196" y="134" width="2" height="9" fill="rgb(201,201,201)"/><rect x="196" y="143" width="2" height="5" fill="rgb(212,212,212)"/><rect x="196" y="148" width="2" height="6" fill="rgb(216,216,216)"/><rect x="198" y="120" width="2" height="6" fill="rgb(190,190,190)"/><rect x="198" y="126" width="2" height="3" fill="rgb(193,193,193)"/><rect x="198" y="129" width="2" height="5" fill="rgb(193,193,193)"/><rect x="198" y="134" width="2" height="6" fill="rgb(200,200,200)"/><rect x="198" y="140" width="2" height="3" fill="rgb(209,209,209)"/><rect x="198" y="143" width="2" height="9" fill="rgb(215,215,215)"/><rect x="198" y="152" width="2" height="2" fill="rgb(227,227,227)"/><rect x="200" y="121" width="2" height="6" fill="rgb(179,179,179)"/><rect x="200" y="127" width="2" height="7" fill="rgb(188,188,188)"/><rect x="200" y="134" width="2" height="8" fill="rgb(200,200,200)"/><rect x="200" y="142" width="2" height="8" fill="rgb(210,210,210)"/><rect x="200" y="150" width="2" height="4" fill="rgb(223,223,223)"/><rect x="202" y="120" width="2" height="8" fill="rgb(179,179,179)"/><rect x="202" y="128" width="2" height="6" fill="rgb(194,194,194)"/><rect x="202" y="134" width="2" height="6" fill="rgb(193,193,193)"/><rect x="202" y="140" width="2" height="3" fill="rgb(203,203,203)"/><rect x="202" y="143" width="2" height="4" fill="rgb(207,207,207)"/><rect x="202" y="147" width="2" height="4" fill="rgb(222,222,222)"/><rect x="202" y="151" width="2" height="3" fill="rgb(218,218,218)"/><rect x="204" y="120" width="2" height="6" fill="rgb(182,182,182)"/><rect x="204" y="126" width="2" height="3" fill="rgb(184,184,184)"/><rect x="204" y="129" width="2" height="8" fill="rgb(194,194,194)"/><rect x="204" y="137" width="2" height="4" fill="rgb(195,195,195)"/><rect x="204" y="141" width="2" height="3" fill="rgb(206,206,206)"/><rect x="204" y="144" width="2" height="7" fill="rgb(205,205,205)"/><rect x="204" y="151" width="2" height="3" fill="rgb(218,218,218)"/><rect x="206" y="121" width="2" height="5" fill="rgb(179,179,179)"/><rect x="206" y="126" width="2" height="8" fill="rgb(187,187,187)"/><rect x="206" y="134" width="2" height="8" fill="rgb(206,206,206)"/><rect x="206" y="142" width="2" height="8" fill="rgb(216,216,216)"/><rect x="206" y="150" width="2" height="4" fill="rgb(232,232,232)"/><rect x="208" y="119" width="2" height="8" fill="rgb(178,178,178)"/><rect x="208" y="127" width="2" height="4" fill="rgb(192,192,192)"/><rect x="208" y="131" width="2" height="9" fill="rgb(203,203,203)"/><rect x="208" y="140" width="2" height="8" fill="rgb(204,204,204)"/><rect x="208" y="148" width="2" height="6" fill="rgb(218,218,218)"/><rect x="210" y="119" width="2" height="3" fill="rgb(188,188,188)"/><rect x="210" y="122" width="2" height="6" fill="rgb(186,186,186)"/><rect x="210" y="128" width="2" height="8" fill="rgb(198,198,198)"/><rect x="210" y="136" width="2" height="6" fill="rgb(208,208,208)"/><rect x="210" y="142" width="2" height="3" fill="rgb(219,219,219)"/><rect x="210" y="145" width="2" height="9" fill="rgb(222,222,222)"/><rect x="212" y="119" width="2" height="6" fill="rgb(179,179,179)"/><rect x="212" y="125" width="2" height="8" fill="rgb(181,181,181)"/><rect x="212" y="133" width="2" height="4" fill="rgb(198,198,198)"/><rect x="212" y="137" width="2" height="5" fill="rgb(201,201,201)"/><rect x="212" y="142" width="2" height="8" fill="rgb(210,210,210)"/><rect x="212" y="150" width="2" height="4" fill="rgb(221,221,221)"/><rect x="214" y="121" width="2" height="9" fill="rgb(184,184,184)"/><rect x="214" y="130" width="2" height="7" fill="rgb(190,190,190)"/><rect x="214" y="137" width="2" height="9" fill="rgb(203,203,203)"/><rect x="214" y="146" width="2" height="3" fill="rgb(209,209,209)"/><rect x="214" y="149" width="2" height="5" fill="rgb(225,225,225)"/><rect x="216" y="120" width="2" height="5" fill="rgb(188,188,188)"/><rect x="216" y="125" width="2" height="7" fill="rgb(205,205,205)"/><rect x="216" y="132" width="2" height="6" fill="rgb(209,209,209)"/><rect x="216" y="138" width="2" height="9" fill="rgb(215,215,215)"/><rect x="216" y="147" width="2" height="4" fill="rgb(235,235,235)"/><rect x="216" y="151" width="2" height="3" fill="rgb(237,237,237)"/><rect x="218" y="120" width="2" height="4" fill="rgb(181,181,181)"/><rect x="218" y="124" width="2" height="5" fill="rgb(187,187,187)"/><rect x="218" y="129" width="2" height="6" fill="rgb(200,200,200)"/><rect x="218" y="135" width="2" height="8" fill="rgb(210,210,210)"/><rect x="218" y="143" width="2" height="3" fill="rgb(220,220,220)"/><rect x="218" y="146" width="2" height="8" fill="rgb(226,226,226)"/><rect x="220" y="121" width="2" height="6" fill="rgb(174,174,174)"/><rect x="220" y="127" width="2" height="5" fill="rgb(186,186,186)"/><rect x="220" y="132" width="2" height="8" fill="rgb(190,190,190)"/><rect x="220" y="140" width="2" height="5" fill="rgb(205,205,205)"/><rect x="220" y="145" width="2" height="4" fill="rgb(213,213,213)"/><rect x="220" y="149" width="2" height="5" fill="rgb(221,221,221)"/><rect x="222" y="120" width="2" height="5" fill="rgb(175,175,175)"/><rect x="222" y="125" width="2" height="7" fill="rgb(192,192,192)"/><rect x="222" y="132" width="2" height="4" fill="rgb(201,201,201)"/><rect x="222" y="136" width="2" height="7" fill="rgb(207,207,207)"/><rect x="222" y="143" width="2" height="6" fill="rgb(214,214,214)"/><rect x="222" y="149" width="2" height="4" fill="rgb(215,215,215)"/><rect x="222" y="153" width="2" height="1" fill="rgb(226,226,226)"/><rect x="224" y="121" width="2" height="4" fill="rgb(198,198,198)"/><rect x="224" y="125" width="2" height="9" fill="rgb(206,206,206)"/><rect x="224" y="134" width="2" height="4" fill="rgb(212,212,212)"/><rect x="224" y="138" width="2" height="7" fill="rgb(220,220,220)"/><rect x="224" y="145" width="2" height="6" fill="rgb(229,229,229)"/><rect x="224" y="151" width="2" height="3" fill="rgb(235,235,235)"/><rect x="226" y="120" width="2" height="5" fill="rgb(191,191,191)"/><rect x="226" y="125" width="2" height="3" fill="rgb(205,205,205)"/><rect x="226" y="128" width="2" height="7" fill="rgb(210,210,210)"/><rect x="226" y="135" width="2" height="3" fill="rgb(219,219,219)"/><rect x="226" y="138" width="2" height="4" fill="rgb(224,224,224)"/><rect x="226" y="142" width="2" height="3" fill="rgb(223,223,223)"/><rect x="226" y="145" width="2" height="7" fill="rgb(227,227,227)"/><rect x="226" y="152" width="2" height="2" fill="rgb(240,240,240)"/><rect x="228" y="120" width="2" height="5" fill="rgb(179,179,179)"/><rect x="228" y="125" width="2" height="9" fill="rgb(186,186,186)"/><rect x="228" y="134" width="2" height="9" fill="rgb(203,203,203)"/><rect x="228" y="143" width="2" height="9" fill="rgb(221,221,221)"/><rect x="228" y="152" width="2" height="2" fill="rgb(227,227,227)"/><rect x="230" y="120" width="2" height="8" fill="rgb(184,184,184)"/><rect x="230" y="128" width="2" height="9" fill="rgb(190,190,190)"/><rect x="230" y="137" width="2" height="5" fill="rgb(208,208,208)"/><rect x="230" y="142" width="2" height="8" fill="rgb(214,214,214)"/><rect x="230" y="150" width="2" height="4" fill="rgb(218,218,218)"/><rect x="232" y="119" width="2" height="5" fill="rgb(178,178,178)"/><rect x="232" y="124" width="2" height="3" fill="rgb(187,187,187)"/><rect x="232" y="127" width="2" height="9" fill="rgb(189,189,189)"/><rect x="232" y="136" width="2" height="8" fill="rgb(209,209,209)"/><rect x="232" y="144" width="2" height="3" fill="rgb(216,216,216)"/><rect x="232" y="147" width="2" height="3" fill="rgb(217,217,217)"/><rect x="232" y="150" width="2" height="4" fill="rgb(221,221,221)"/><rect x="234" y="120" width="2" height="4" fill="rgb(180,180,180)"/><rect x="234" y="124" width="2" height="7" fill="rgb(181,181,181)"/><rect x="234" y="131" width="2" height="5" fill="rgb(192,192,192)"/><rect x="234" y="136" width="2" height="3" fill="rgb(201,201,201)"/><rect x="234" y="139" width="2" height="6" fill="rgb(208,208,208)"/><rect x="234" y="145" width="2" height="8" fill="rgb(222,222,222)"/><rect x="234" y="153" width="2" height="1" fill="rgb(227,227,227)"/><rect x="236" y="119" width="2" height="5" fill="rgb(191,191,191)"/><rect x="236" y="124" width="2" height="3" fill="rgb(202,202,202)"/><rect x="236" y="127" width="2" height="5" fill="rgb(199,199,199)"/><rect x="236" y="132" width="2" height="5" fill="rgb(217,217,217)"/><rect x="236" y="137" width="2" height="9" fill="rgb(222,222,222)"/><rect x="236" y="146" width="2" height="8" fill="rgb(227,227,227)"/><rect x="238" y="121" width="2" height="6" fill="rgb(175,175,175)"/><rect x="238" y="127" width="2" height="8" fill="rgb(192,192,192)"/><rect x="238" y="135" width="2" height="7" fill="rgb(206,206,206)"/><rect x="238" y="142" width="2" height="7" fill="rgb(212,212,212)"/><rect x="238" y="149" width="2" height="5" fill="rgb(222,222,222)"/><rect x="240" y="121" width="2" height="5" fill="rgb(181,181,181)"/><rect x="240" y="126" width="2" height="8" fill="rgb(189,189,189)"/><rect x="240" y="134" width="2" height="7" fill="rgb(199,199,199)"/><rect x="240" y="141" width="2" height="3" fill="rgb(217,217,217)"/><rect x="240" y="144" width="2" height="7" fill="rgb(213,213,213)"/><rect x="240" y="151" width="2" height="3" fill="rgb(226,226,226)"/><rect x="242" y="120" width="2" height="5" fill="rgb(187,187,187)"/><rect x="242" y="125" width="2" height="3" fill="rgb(190,190,190)"/><rect x="242" y="128" width="2" height="7" fill="rgb(194,194,194)"/><rect x="242" y="135" width="2" height="7" fill="rgb(205,205,205)"/><rect x="242" y="142" width="2" height="6" fill="rgb(213,213,213)"/><rect x="242" y="148" width="2" height="6" fill="rgb(231,231,231)"/><rect x="244" y="119" width="2" height="5" fill="rgb(190,190,190)"/><rect x="244" y="124" width="2" height="8" fill="rgb(204,204,204)"/><rect x="244" y="132" width="2" height="5" fill="rgb(215,215,215)"/><rect x="244" y="137" width="2" height="7" fill="rgb(226,226,226)"/><rect x="244" y="144" width="2" height="8" fill="rgb(232,232,232)"/><rect x="244" y="152" width="2" height="2" fill="rgb(240,240,240)"/><rect x="246" y="119" width="2" height="5" fill="rgb(192,192,192)"/><rect x="246" y="124" width="2" height="8" fill="rgb(194,194,194)"/><rect x="246" y="132" width="2" height="4" fill="rgb(204,204,204)"/><rect x="246" y="136" width="2" height="7" fill="rgb(211,211,211)"/><rect x="246" y="143" width="2" height="8" fill="rgb(222,222,222)"/><rect x="246" y="151" width="2" height="3" fill="rgb(240,240,240)"/><rect x="248" y="120" width="2" height="5" fill="rgb(179,179,179)"/><rect x="248" y="125" width="2" height="4" fill="rgb(196,196,196)"/><rect x="248" y="129" width="2" height="6" fill="rgb(197,197,197)"/><rect x="248" y="135" width="2" height="6" fill="rgb(200,200,200)"/><rect x="248" y="141" width="2" height="7" fill="rgb(209,209,209)"/><rect x="248" y="148" width="2" height="5" fill="rgb(222,222,222)"/><rect x="248" y="153" width="2" height="1" fill="rgb(235,235,235)"/><rect x="250" y="121" width="2" height="7" fill="rgb(166,166,166)"/><rect x="250" y="128" width="2" height="9" fill="rgb(186,186,186)"/><rect x="250" y="137" width="2" height="4" fill="rgb(196,196,196)"/><rect x="250" y="141" width="2" height="8" fill="rgb(204,204,204)"/><rect x="250" y="149" width="2" height="3" fill="rgb(215,215,215)"/><rect x="250" y="152" width="2" height="2" fill="rgb(224,224,224)"/><rect x="252" y="120" width="2" height="8" fill="rgb(191,191,191)"/><rect x="252" y="128" width="2" height="5" fill="rgb(201,201,201)"/><rect x="252" y="133" width="2" height="6" fill="rgb(210,210,210)"/><rect x="252" y="139" width="2" height="7" fill="rgb(219,219,219)"/><rect x="252" y="146" width="2" height="3" fill="rgb(224,224,224)"/><rect x="252" y="149" width="2" height="5" fill="rgb(239,239,239)"/><rect x="254" y="119" width="2" height="8" fill="rgb(197,197,197)"/><rect x="254" y="127" width="2" height="3" fill="rgb(209,209,209)"/><rect x="254" y="130" width="2" height="3" fill="rgb(202,202,202)"/><rect x="254" y="133" width="2" height="7" fill="rgb(208,208,208)"/><rect x="254" y="140" width="2" height="7" fill="rgb(224,224,224)"/><rect x="254" y="147" width="2" height="7" fill="rgb(231,231,231)"/><rect x="256" y="121" width="2" height="9" fill="rgb(183,183,183)"/><rect x="256" y="130" width="2" height="8" fill="rgb(192,192,192)"/><rect x="256" y="138" width="2" height="9" fill="rgb(206,206,206)"/><rect x="256" y="147" width="2" height="7" fill="rgb(224,224,224)"/><rect x="258" y="120" width="2" height="4" fill="rgb(186,186,186)"/><rect x="258" y="124" width="2" height="7" fill="rgb(195,195,195)"/><rect x="258" y="131" width="2" height="9" fill="rgb(203,203,203)"/><rect x="258" y="140" width="2" height="3" fill="rgb(226,226,226)"/><rect x="258" y="143" width="2" height="3" fill="rgb(229,229,229)"/><rect x="258" y="146" width="2" height="5" fill="rgb(229,229,229)"/><rect x="258" y="151" width="2" height="3" fill="rgb(235,235,235)"/><rect x="260" y="120" width="2" height="8" fill="rgb(199,199,199)"/><rect x="260" y="128" width="2" height="3" fill="rgb(207,207,207)"/><rect x="260" y="131" width="2" height="6" fill="rgb(209,209,209)"/><rect x="260" y="137" width="2" height="6" fill="rgb(217,217,217)"/><rect x="260" y="143" width="2" height="5" fill="rgb(232,232,232)"/><rect x="260" y="148" width="2" height="6" fill="rgb(233,233,233)"/><rect x="262" y="120" width="2" height="4" fill="rgb(198,198,198)"/><rect x="262" y="124" width="2" height="7" fill="rgb(201,201,201)"/><rect x="262" y="131" width="2" height="4" fill="rgb(204,204,204)"/><rect x="262" y="135" width="2" height="5" fill="rgb(220,220,220)"/><rect x="262" y="140" width="2" height="3" fill="rgb(225,225,225)"/><rect x="262" y="143" width="2" height="4" fill="rgb(229,229,229)"/><rect x="262" y="147" width="2" height="7" fill="rgb(237,237,237)"/><rect x="264" y="120" width="2" height="9" fill="rgb(187,187,187)"/><rect x="264" y="129" width="2" height="3" fill="rgb(198,198,198)"/><rect x="264" y="132" width="2" height="3" fill="rgb(200,200,200)"/><rect x="264" y="135" width="2" height="4" fill="rgb(204,204,204)"/><rect x="264" y="139" width="2" height="8" fill="rgb(205,205,205)"/><rect x="264" y="147" width="2" height="6" fill="rgb(226,226,226)"/><rect x="264" y="153" width="2" height="1" fill="rgb(225,225,225)"/><rect x="266" y="120" width="2" height="5" fill="rgb(186,186,186)"/><rect x="266" y="125" width="2" height="4" fill="rgb(195,195,195)"/><rect x="266" y="129" width="2" height="8" fill="rgb(196,196,196)"/><rect x="266" y="137" width="2" height="8" fill="rgb(208,208,208)"/><rect x="266" y="145" width="2" height="5" fill="rgb(219,219,219)"/><rect x="266" y="150" width="2" height="4" fill="rgb(232,232,232)"/><rect x="268" y="120" width="2" height="6" fill="rgb(185,185,185)"/><rect x="268" y="126" width="2" height="7" fill="rgb(188,188,188)"/><rect x="268" y="133" width="2" height="7" fill="rgb(205,205,205)"/><rect x="268" y="140" width="2" height="5" fill="rgb(210,210,210)"/><rect x="268" y="145" width="2" height="4" fill="rgb(215,215,215)"/><rect x="268" y="149" width="2" height="5" fill="rgb(227,227,227)"/><rect x="270" y="119" width="2" height="8" fill="rgb(167,167,167)"/><rect x="270" y="127" width="2" height="4" fill="rgb(184,184,184)"/><rect x="270" y="131" width="2" height="9" fill="rgb(189,189,189)"/><rect x="270" y="140" width="2" height="8" fill="rgb(204,204,204)"/><rect x="270" y="148" width="2" height="6" fill="rgb(211,211,211)"/><rect x="272" y="121" width="2" height="7" fill="rgb(171,171,171)"/><rect x="272" y="128" width="2" height="5" fill="rgb(180,180,180)"/><rect x="272" y="133" width="2" height="6" fill="rgb(194,194,194)"/><rect x="272" y="139" width="2" height="9" fill="rgb(207,207,207)"/><rect x="272" y="148" width="2" height="6" fill="rgb(221,221,221)"/><rect x="274" y="121" width="2" height="8" fill="rgb(189,189,189)"/><rect x="274" y="129" width="2" height="3" fill="rgb(203,203,203)"/><rect x="274" y="132" width="2" height="9" fill="rgb(202,202,202)"/><rect x="274" y="141" width="2" height="6" fill="rgb(215,215,215)"/><rect x="274" y="147" width="2" height="7" fill="rgb(224,224,224)"/><rect x="276" y="121" width="2" height="4" fill="rgb(188,188,188)"/><rect x="276" y="125" width="2" height="9" fill="rgb(201,201,201)"/><rect x="276" y="134" width="2" height="7" fill="rgb(208,208,208)"/><rect x="276" y="141" width="2" height="4" fill="rgb(223,223,223)"/><rect x="276" y="145" width="2" height="7" fill="rgb(223,223,223)"/><rect x="276" y="152" width="2" height="2" fill="rgb(236,236,236)"/><rect x="278" y="121" width="2" height="9" fill="rgb(173,173,173)"/><rect x="278" y="130" width="2" height="7" fill="rgb(197,197,197)"/><rect x="278" y="137" width="2" height="4" fill="rgb(208,208,208)"/><rect x="278" y="141" width="2" height="7" fill="rgb(214,214,214)"/><rect x="278" y="148" width="2" height="6" fill="rgb(223,223,223)"/><rect x="280" y="122" width="2" height="4" fill="rgb(174,174,174)"/><rect x="280" y="126" width="2" height="9" fill="rgb(181,181,181)"/><rect x="280" y="135" width="2" height="3" fill="rgb(197,197,197)"/><rect x="280" y="138" width="2" height="8" fill="rgb(193,193,193)"/><rect x="280" y="146" width="2" height="6" fill="rgb(206,206,206)"/><rect x="280" y="152" width="2" height="2" fill="rgb(215,215,215)"/><rect x="282" y="122" width="2" height="7" fill="rgb(170,170,170)"/><rect x="282" y="129" width="2" height="9" fill="rgb(177,177,177)"/><rect x="282" y="138" width="2" height="3" fill="rgb(196,196,196)"/><rect x="282" y="141" width="2" height="6" fill="rgb(200,200,200)"/><rect x="282" y="147" width="2" height="7" fill="rgb(212,212,212)"/><rect x="284" y="122" width="2" height="4" fill="rgb(193,193,193)"/><rect x="284" y="126" width="2" height="8" fill="rgb(196,196,196)"/><rect x="284" y="134" width="2" height="9" fill="rgb(211,211,211)"/><rect x="284" y="143" width="2" height="8" fill="rgb(224,224,224)"/><rect x="284" y="151" width="2" height="3" fill="rgb(240,240,240)"/><rect x="286" y="122" width="2" height="4" fill="rgb(194,194,194)"/><rect x="286" y="126" width="2" height="6" fill="rgb(200,200,200)"/><rect x="286" y="132" width="2" height="6" fill="rgb(210,210,210)"/><rect x="286" y="138" width="2" height="4" fill="rgb(215,215,215)"/><rect x="286" y="142" width="2" height="9" fill="rgb(218,218,218)"/><rect x="286" y="151" width="2" height="3" fill="rgb(230,230,230)"/><rect x="288" y="122" width="2" height="5" fill="rgb(186,186,186)"/><rect x="288" y="127" width="2" height="9" fill="rgb(202,202,202)"/><rect x="288" y="136" width="2" height="7" fill="rgb(206,206,206)"/><rect x="288" y="143" width="2" height="8" fill="rgb(221,221,221)"/><rect x="288" y="151" width="2" height="3" fill="rgb(231,231,231)"/><rect x="290" y="122" width="2" height="5" fill="rgb(179,179,179)"/><rect x="290" y="127" width="2" height="6" fill="rgb(185,185,185)"/><rect x="290" y="133" width="2" height="7" fill="rgb(198,198,198)"/><rect x="290" y="140" width="2" height="3" fill="rgb(204,204,204)"/><rect x="290" y="143" width="2" height="4" fill="rgb(210,210,210)"/><rect x="290" y="147" width="2" height="4" fill="rgb(216,216,216)"/><rect x="290" y="151" width="2" height="3" fill="rgb(231,231,231)"/><rect x="292" y="124" width="2" height="7" fill="rgb(186,186,186)"/><rect x="292" y="131" width="2" height="7" fill="rgb(200,200,200)"/><rect x="292" y="138" width="2" height="8" fill="rgb(209,209,209)"/><rect x="292" y="146" width="2" height="7" fill="rgb(221,221,221)"/><rect x="292" y="153" width="2" height="1" fill="rgb(238,238,238)"/><rect x="294" y="123" width="2" height="4" fill="rgb(189,189,189)"/><rect x="294" y="127" width="2" height="8" fill="rgb(195,195,195)"/><rect x="294" y="135" width="2" height="4" fill="rgb(219,219,219)"/><rect x="294" y="139" width="2" height="8" fill="rgb(213,213,213)"/><rect x="294" y="147" width="2" height="3" fill="rgb(237,237,237)"/><rect x="294" y="150" width="2" height="4" fill="rgb(237,237,237)"/><rect x="296" y="123" width="2" height="4" fill="rgb(196,196,196)"/><rect x="296" y="127" width="2" height="7" fill="rgb(195,195,195)"/><rect x="296" y="134" width="2" height="8" fill="rgb(212,212,212)"/><rect x="296" y="142" width="2" height="7" fill="rgb(218,218,218)"/><rect x="296" y="149" width="2" height="4" fill="rgb(234,234,234)"/><rect x="296" y="153" width="2" height="1" fill="rgb(239,239,239)"/><rect x="298" y="123" width="2" height="8" fill="rgb(193,193,193)"/><rect x="298" y="131" width="2" height="5" fill="rgb(210,210,210)"/><rect x="298" y="136" width="2" height="9" fill="rgb(209,209,209)"/><rect x="298" y="145" width="2" height="4" fill="rgb(226,226,226)"/><rect x="298" y="149" width="2" height="5" fill="rgb(230,230,230)"/><rect x="300" y="123" width="2" height="7" fill="rgb(185,185,185)"/><rect x="300" y="130" width="2" height="3" fill="rgb(200,200,200)"/><rect x="300" y="133" width="2" height="9" fill="rgb(201,201,201)"/><rect x="300" y="142" width="2" height="4" fill="rgb(222,222,222)"/><rect x="300" y="146" width="2" height="6" fill="rgb(218,218,218)"/><rect x="300" y="152" width="2" height="2" fill="rgb(239,239,239)"/><rect x="3" y="152" width="3" height="1" fill="#000"/><rect x="12" y="152" width="1" height="1" fill="#000"/><rect x="57" y="152" width="24" height="1" fill="#000"/><rect x="100" y="152" width="22" height="1" fill="#000"/><rect x="150" y="152" width="10" height="1" fill="#000"/><rect x="0" y="95" width="8" height="1" fill="#f00000"/><rect x="8" y="96" width="2" height="1" fill="#f00000"/><rect x="10" y="99" width="3" height="1" fill="#f00000"/><rect x="12" y="97" width="2" height="1" fill="#f00000"/><rect x="15" y="99" width="3" height="1" fill="#f00000"/><rect x="17" y="94" width="3" height="1" fill="#f00000"/><rect x="20" y="98" width="3" height="1" fill="#f00000"/><rect x="22" y="93" width="3" height="1" fill="#f00000"/><rect x="25" y="98" width="3" height="1" fill="#f00000"/><rect x="27" y="96" width="3" height="1" fill="#f00000"/><rect x="30" y="90" width="3" height="1" fill="#f00000"/><rect x="32" y="95" width="3" height="1" fill="#f00000"/><rect x="35" y="97" width="3" height="1" fill="#f00000"/><rect x="37" y="93" width="3" height="1" fill="#f00000"/><rect x="40" y="95" width="3" height="1" fill="#f00000"/><rect x="43" y="93" width="3" height="1" fill="#f00000"/><rect x="45" y="90" width="3" height="1" fill="#f00000"/><rect x="47" y="95" width="3" height="1" fill="#f00000"/><rect x="50" y="96" width="3" height="1" fill="#f00000"/><rect x="52" y="90" width="3" height="1" fill="#f00000"/><rect x="55" y="89" width="3" height="1" fill="#f00000"/><rect x="58" y="88" width="2" height="1" fill="#f00000"/><rect x="60" y="96" width="3" height="1" fill="#f00000"/><rect x="62" y="95" width="2" height="1" fill="#f00000"/><rect x="65" y="98" width="3" height="1" fill="#f00000"/><rect x="67" y="95" width="3" height="1" fill="#f00000"/><rect x="70" y="90" width="3" height="1" fill="#f00000"/><rect x="73" y="98" width="3" height="1" fill="#f00000"/><rect x="75" y="96" width="3" height="1" fill="#f00000"/><rect x="78" y="95" width="3" height="1" fill="#f00000"/><rect x="80" y="93" width="3" height="1" fill="#f00000"/><rect x="83" y="95" width="3" height="1" fill="#f00000"/><rect x="85" y="93" width="6" height="1" fill="#f00000"/><rect x="90" y="85" width="3" height="1" fill="#f00000"/><rect x="93" y="99" width="3" height="1" fill="#f00000"/><rect x="95" y="97" width="3" height="1" fill="#f00000"/><rect x="98" y="86" width="3" height="1" fill="#f00000"/><rect x="100" y="91" width="3" height="1" fill="#f00000"/><rect x="103" y="94" width="3" height="1" fill="#f00000"/><rect x="105" y="91" width="3" height="1" fill="#f00000"/><rect x="108" y="93" width="3" height="1" fill="#f00000"/><rect x="110" y="94" width="3" height="1" fill="#f00000"/><rect x="113" y="90" width="3" height="1" fill="#f00000"/><rect x="115" y="93" width="3" height="1" fill="#f00000"/><rect x="118" y="90" width="3" height="1" fill="#f00000"/><rect x="120" y="93" width="3" height="1" fill="#f00000"/><rect x="123" y="92" width="3" height="1" fill="#f00000"/><rect x="125" y="97" width="3" height="1" fill="#f00000"/><rect x="128" y="92" width="5" height="1" fill="#f00000"/><rect x="133" y="95" width="3" height="1" fill="#f00000"/><rect x="135" y="92" width="3" height="1" fill="#f00000"/><rect x="138" y="100" width="3" height="1" fill="#f00000"/><rect x="140" y="96" width="3" height="1" fill="#f00000"/><rect x="143" y="93" width="7" height="1" fill="#f00000"/><rect x="150" y="93" width="4" height="1" fill="#f00000"/><rect x="153" y="90" width="3" height="1" fill="#f00000"/><rect x="156" y="89" width="3" height="1" fill="#f00000"/><rect x="158" y="92" width="3" height="1" fill="#f00000"/><rect x="161" y="90" width="3" height="1" fill="#f00000"/><rect x="164" y="93" width="3" height="1" fill="#f00000"/><rect x="167" y="91" width="3" height="1" fill="#f00000"/><rect x="171" y="90" width="5" height="1" fill="#f00000"/><rect x="176" y="94" width="13" height="1" fill="#f00000"/><rect x="0" y="157" width="189" height="1" fill="#00f000"/><rect x="74" y="36" width="2" height="1" fill="#262626"/><rect x="257" y="24" width="2" height="1" fill="#262626"/><rect x="289" y="28" width="2" height="1" fill="#262626"/><rect x="215" y="64" width="2" height="1" fill="#262626"/><rect x="166" y="49" width="2" height="1" fill="#262626"/><rect x="85" y="57" width="2" height="1" fill="#262626"/><rect x="103" y="105" width="2" height="1" fill="#262626"/><rect x="251" y="81" width="2" height="1" fill="#262626"/><rect x="231" y="81" width="2" height="1" fill="#262626"/></svg>
<div class="r" style="left:354px;top:44px;width:6px;height:166px;background:linear-gradient(#ffffff 0%,#000000 93%,#000 100%)"></div>
<div style="left:361px;top:46px;width:6px;height:1px;background:#000;" class="r"></div>
<div class="t" style="top:41.30px;font-size:8.5px;font-weight:normal;color:#000;left:367.50px;-webkit-text-stroke:0.25px #000;">130</div>
<div style="left:361px;top:56px;width:6px;height:1px;background:#000;" class="r"></div>
<div class="t" style="top:51.80px;font-size:8.5px;font-weight:normal;color:#000;left:367.50px;-webkit-text-stroke:0.25px #000;">120</div>
<div style="left:361px;top:68px;width:6px;height:1px;background:#000;" class="r"></div>
<div class="t" style="top:63.80px;font-size:8.5px;font-weight:normal;color:#000;left:367.50px;-webkit-text-stroke:0.25px #000;">110</div>
<div style="left:361px;top:80px;width:6px;height:1px;background:#000;" class="r"></div>
<div class="t" style="top:75.80px;font-size:8.5px;font-weight:normal;color:#000;left:367.50px;-webkit-text-stroke:0.25px #000;">100</div>
<div style="left:361px;top:92px;width:6px;height:1px;background:#000;" class="r"></div>
<div class="t" style="top:87.80px;font-size:8.5px;font-weight:normal;color:#000;left:367.50px;-webkit-text-stroke:0.25px #000;">90</div>
<div style="left:361px;top:104px;width:6px;height:1px;background:#000;" class="r"></div>
<div class="t" style="top:99.80px;font-size:8.5px;font-weight:normal;color:#000;left:367.50px;-webkit-text-stroke:0.25px #000;">80</div>
<div style="left:361px;top:116px;width:6px;height:1px;background:#000;" class="r"></div>
<div class="t" style="top:111.80px;font-size:8.5px;font-weight:normal;color:#000;left:367.50px;-webkit-text-stroke:0.25px #000;">70</div>
<div style="left:361px;top:128px;width:6px;height:1px;background:#000;" class="r"></div>
<div class="t" style="top:123.80px;font-size:8.5px;font-weight:normal;color:#000;left:367.50px;-webkit-text-stroke:0.25px #000;">60</div>
<div style="left:361px;top:140px;width:6px;height:1px;background:#000;" class="r"></div>
<div class="t" style="top:135.80px;font-size:8.5px;font-weight:normal;color:#000;left:367.50px;-webkit-text-stroke:0.25px #000;">50</div>
<div style="left:361px;top:152px;width:6px;height:1px;background:#000;" class="r"></div>
<div class="t" style="top:147.80px;font-size:8.5px;font-weight:normal;color:#000;left:367.50px;-webkit-text-stroke:0.25px #000;">40</div>
<div style="left:361px;top:164px;width:6px;height:1px;background:#000;" class="r"></div>
<div class="t" style="top:159.80px;font-size:8.5px;font-weight:normal;color:#000;left:367.50px;-webkit-text-stroke:0.25px #000;">30</div>
<div style="left:361px;top:176px;width:6px;height:1px;background:#000;" class="r"></div>
<div class="t" style="top:171.80px;font-size:8.5px;font-weight:normal;color:#000;left:367.50px;-webkit-text-stroke:0.25px #000;">20</div>
<div style="left:361px;top:188px;width:6px;height:1px;background:#000;" class="r"></div>
<div class="t" style="top:183.80px;font-size:8.5px;font-weight:normal;color:#000;left:367.50px;-webkit-text-stroke:0.25px #000;">10</div>
<div style="left:361px;top:198px;width:6px;height:1px;background:#000;" class="r"></div>
<div class="t" style="top:190.80px;font-size:8.5px;font-weight:normal;color:#000;left:367.50px;-webkit-text-stroke:0.25px #000;">0</div>
<div style="left:49px;top:206px;width:1px;height:11px;background:#000;" class="r"></div>
<div style="left:74px;top:206px;width:1px;height:6px;background:#000;" class="r"></div>
<div style="left:99px;top:206px;width:1px;height:11px;background:#000;" class="r"></div>
<div style="left:124px;top:206px;width:1px;height:6px;background:#000;" class="r"></div>
<div style="left:149px;top:206px;width:1px;height:11px;background:#000;" class="r"></div>
<div style="left:174px;top:206px;width:1px;height:6px;background:#000;" class="r"></div>
<div style="left:199px;top:206px;width:1px;height:11px;background:#000;" class="r"></div>
<div style="left:225px;top:206px;width:1px;height:6px;background:#000;" class="r"></div>
<div style="left:250px;top:206px;width:1px;height:11px;background:#000;" class="r"></div>
<div style="left:275px;top:206px;width:1px;height:6px;background:#000;" class="r"></div>
<div style="left:300px;top:206px;width:1px;height:11px;background:#000;" class="r"></div>
<div style="left:325px;top:206px;width:1px;height:6px;background:#000;" class="r"></div>
<div style="left:350px;top:206px;width:1px;height:11px;background:#000;" class="r"></div>
<div class="t" style="top:219.30px;font-size:8.5px;font-weight:normal;color:#000;left:44.33px;transform:scaleX(1.097);-webkit-text-stroke:0.25px #000;">21:40</div>
<div class="t" style="top:219.30px;font-size:8.5px;font-weight:normal;color:#000;left:94.63px;transform:scaleX(1.097);-webkit-text-stroke:0.25px #000;">22:00</div>
<div class="t" style="top:219.30px;font-size:8.5px;font-weight:normal;color:#000;left:144.93px;transform:scaleX(1.097);-webkit-text-stroke:0.25px #000;">22:20</div>
<div class="t" style="top:219.30px;font-size:8.5px;font-weight:normal;color:#000;left:195.23px;transform:scaleX(1.097);-webkit-text-stroke:0.25px #000;">22:40</div>
<div class="t" style="top:219.30px;font-size:8.5px;font-weight:normal;color:#000;left:245.53px;transform:scaleX(1.097);-webkit-text-stroke:0.25px #000;">23:00</div>
<div class="t" style="top:219.30px;font-size:8.5px;font-weight:normal;color:#000;left:295.83px;transform:scaleX(1.097);-webkit-text-stroke:0.25px #000;">23:20</div>
<div class="t" style="top:219.30px;font-size:8.5px;font-weight:normal;color:#000;left:346.13px;transform:scaleX(1.097);-webkit-text-stroke:0.25px #000;">23:40</div>
<div class="t" style="top:241.33px;font-size:10px;font-weight:bold;color:#000;left:13.91px;transform:scaleX(1.219);">Instrument</div>
<div class="t" style="top:241.33px;font-size:10px;font-weight:bold;color:#000;left:181.52px;transform:scaleX(1.210);">Status</div>
<div class="t" style="top:241.33px;font-size:10px;font-weight:bold;color:#000;left:343.52px;transform:scaleX(1.189);">Current</div>
<div style="left:49px;top:251px;width:302px;height:63px;background:#000;" class="r"></div>
<div style="left:49px;top:254px;width:302px;height:8px;background:#00ff00;" class="r"></div>
<div class="t" style="top:254.80px;font-size:8.5px;font-weight:normal;color:#000;left:14.18px;transform:scaleX(0.945);-webkit-text-stroke:0.25px #000;">RADAR</div>
<div class="r" style="left:361px;top:254px;width:7px;height:7px;border-radius:50%;background:#00ff00;border:1px solid #111;"></div>
<div style="left:49px;top:268px;width:302px;height:8px;background:#ff0000;" class="r"></div>
<div class="t" style="top:268.80px;font-size:8.5px;font-weight:normal;color:#000;left:14.17px;transform:scaleX(0.961);-webkit-text-stroke:0.25px #000;">CLMTR</div>
<div class="r" style="left:361px;top:268px;width:7px;height:7px;border-radius:50%;background:#ff0000;border:1px solid #111;"></div>
<div style="left:49px;top:282px;width:188px;height:8px;background:#00ff00;" class="r"></div>
<div style="left:237px;top:282px;width:114px;height:8px;background:#ff0000;" class="r"></div>
<div class="t" style="top:282.80px;font-size:8.5px;font-weight:normal;color:#000;left:14.17px;transform:scaleX(0.967);-webkit-text-stroke:0.25px #000;">RDMR</div>
<div class="r" style="left:361px;top:282px;width:7px;height:7px;border-radius:50%;background:#ff0000;border:1px solid #111;"></div>
<div style="left:49px;top:296px;width:302px;height:8px;background:#00ff00;" class="r"></div>
<div class="t" style="top:296.80px;font-size:8.5px;font-weight:normal;color:#000;left:14.17px;transform:scaleX(0.961);-webkit-text-stroke:0.25px #000;">DRY?</div>
<div class="r" style="left:361px;top:296px;width:7px;height:7px;border-radius:50%;background:#00ff00;border:1px solid #111;"></div>
<div style="left:49px;top:314px;width:1px;height:11px;background:#000;" class="r"></div>
<div style="left:74px;top:314px;width:1px;height:6px;background:#000;" class="r"></div>
<div style="left:99px;top:314px;width:1px;height:11px;background:#000;" class="r"></div>
<div style="left:124px;top:314px;width:1px;height:6px;background:#000;" class="r"></div>
<div style="left:149px;top:314px;width:1px;height:11px;background:#000;" class="r"></div>
<div style="left:174px;top:314px;width:1px;height:6px;background:#000;" class="r"></div>
<div style="left:199px;top:314px;width:1px;height:11px;background:#000;" class="r"></div>
<div style="left:225px;top:314px;width:1px;height:6px;background:#000;" class="r"></div>
<div style="left:250px;top:314px;width:1px;height:11px;background:#000;" class="r"></div>
<div style="left:275px;top:314px;width:1px;height:6px;background:#000;" class="r"></div>
<div style="left:300px;top:314px;width:1px;height:11px;background:#000;" class="r"></div>
<div style="left:325px;top:314px;width:1px;height:6px;background:#000;" class="r"></div>
<div style="left:350px;top:314px;width:1px;height:11px;background:#000;" class="r"></div>
<div class="t" style="top:329.96px;font-size:9.5px;font-weight:normal;color:#000;left:13.55px;transform:scaleX(1.179);-webkit-text-stroke:0.25px #000;">Alt (1000ft MSL)</div>
<div class="t" style="top:329.53px;font-size:10px;font-weight:bold;color:#000;left:165.54px;transform:scaleX(1.159);">Icing Hazard</div>
<div class="t" style="top:329.53px;font-size:10px;font-weight:normal;color:#000;left:345.14px;transform:scaleX(1.144);-webkit-text-stroke:0.25px #000;">Severity</div>
<div style="left:49px;top:340px;width:302px;height:162px;background:#000;" class="r"></div>
<div style="left:44px;top:342px;width:5px;height:1px;background:#000;" class="r"></div>
<div class="t" style="top:337.30px;font-size:8.5px;font-weight:normal;color:#000;right:956.46px;-webkit-text-stroke:0.25px #000;">26</div>
<div style="left:44px;top:352px;width:5px;height:1px;background:#000;" class="r"></div>
<div class="t" style="top:347.80px;font-size:8.5px;font-weight:normal;color:#000;right:956.46px;-webkit-text-stroke:0.25px #000;">24</div>
<div style="left:44px;top:364px;width:5px;height:1px;background:#000;" class="r"></div>
<div class="t" style="top:359.80px;font-size:8.5px;font-weight:normal;color:#000;right:956.46px;-webkit-text-stroke:0.25px #000;">22</div>
<div style="left:44px;top:376px;width:5px;height:1px;background:#000;" class="r"></div>
<div class="t" style="top:371.80px;font-size:8.5px;font-weight:normal;color:#000;right:956.46px;-webkit-text-stroke:0.25px #000;">20</div>
<div style="left:44px;top:388px;width:5px;height:1px;background:#000;" class="r"></div>
<div class="t" style="top:383.80px;font-size:8.5px;font-weight:normal;color:#000;right:956.46px;-webkit-text-stroke:0.25px #000;">18</div>
<div style="left:44px;top:400px;width:5px;height:1px;background:#000;" class="r"></div>
<div class="t" style="top:395.80px;font-size:8.5px;font-weight:normal;color:#000;right:956.46px;-webkit-text-stroke:0.25px #000;">16</div>
<div style="left:44px;top:412px;width:5px;height:1px;background:#000;" class="r"></div>
<div class="t" style="top:407.80px;font-size:8.5px;font-weight:normal;color:#000;right:956.46px;-webkit-text-stroke:0.25px #000;">14</div>
<div style="left:44px;top:424px;width:5px;height:1px;background:#000;" class="r"></div>
<div class="t" style="top:419.80px;font-size:8.5px;font-weight:normal;color:#000;right:956.46px;-webkit-text-stroke:0.25px #000;">12</div>
<div style="left:44px;top:436px;width:5px;height:1px;background:#000;" class="r"></div>
<div class="t" style="top:431.80px;font-size:8.5px;font-weight:normal;color:#000;right:956.46px;-webkit-text-stroke:0.25px #000;">10</div>
<div style="left:44px;top:448px;width:5px;height:1px;background:#000;" class="r"></div>
<div class="t" style="top:443.80px;font-size:8.5px;font-weight:normal;color:#000;right:956.46px;-webkit-text-stroke:0.25px #000;">8</div>
<div style="left:44px;top:460px;width:5px;height:1px;background:#000;" class="r"></div>
<div class="t" style="top:455.80px;font-size:8.5px;font-weight:normal;color:#000;right:956.46px;-webkit-text-stroke:0.25px #000;">6</div>
<div style="left:44px;top:472px;width:5px;height:1px;background:#000;" class="r"></div>
<div class="t" style="top:467.80px;font-size:8.5px;font-weight:normal;color:#000;right:956.46px;-webkit-text-stroke:0.25px #000;">4</div>
<div style="left:44px;top:484px;width:5px;height:1px;background:#000;" class="r"></div>
<div class="t" style="top:479.80px;font-size:8.5px;font-weight:normal;color:#000;right:956.46px;-webkit-text-stroke:0.25px #000;">2</div>
<div style="left:44px;top:493px;width:5px;height:1px;background:#000;" class="r"></div>
<div class="t" style="top:485.80px;font-size:8.5px;font-weight:normal;color:#000;right:956.46px;-webkit-text-stroke:0.25px #000;">0</div>
<svg style="left:49px;top:340px" width="302" height="161" shape-rendering="crispEdges"><polygon points="0,118 11,118 12,117 17,117 17,120 22,120 35,120 39,118 44,117 60,116 66,116 70,115 75,115 83,117 91,116 100,116 120,116 130,118 145,118 151,120 171,120 183,119 189,120 189,153 0,153" fill="#0010ff"/><rect x="12" y="117" width="5" height="3" fill="#00ff00"/><rect x="17" y="120" width="4" height="2" fill="#00ff00"/><rect x="5" y="118" width="2" height="13" fill="#ffff00"/><rect x="5" y="131" width="2" height="14" fill="#00ff00"/><rect x="62" y="116" width="3" height="10" fill="#00ff00"/><rect x="62" y="128" width="3" height="1" fill="#00ff00"/><rect x="70" y="115" width="5" height="17" fill="#00ff00"/><rect x="83" y="117" width="7" height="6" fill="#00ff00"/><rect x="85" y="123" width="5" height="6" fill="#00ff00"/><rect x="90" y="120" width="3" height="8" fill="#ffff00"/><rect x="90" y="128" width="3" height="11" fill="#00ff00"/><rect x="93" y="116" width="2" height="34" fill="#00ff00"/><rect x="120" y="116" width="10" height="22" fill="#00ff00"/><rect x="128" y="138" width="2" height="12" fill="#00ff00"/><rect x="128" y="118" width="2" height="6" fill="#ffff00"/><rect x="0" y="124" width="2" height="29" fill="#868686"/><rect x="0" y="150" width="35" height="3" fill="#868686"/><rect x="7" y="150" width="4" height="3" fill="#c4c4c4"/><rect x="25" y="150" width="5" height="2" fill="#c4c4c4"/><polygon points="0,142 10,142 11,153 0,153" fill="#868686"/><rect x="2" y="146" width="5" height="4" fill="#c4c4c4"/><rect x="20" y="120" width="2" height="28" fill="#868686"/><rect x="21" y="147" width="9" height="6" fill="#868686"/><rect x="32" y="123" width="3" height="30" fill="#868686"/><polygon points="35,140 40,139 45,136 47,132 49,131 55,131 56,118 60,118 60,153 35,153" fill="#868686"/><rect x="37" y="147" width="3" height="4" fill="#c4c4c4"/><rect x="47" y="142" width="5" height="6" fill="#c4c4c4"/><rect x="55" y="140" width="5" height="12" fill="#c4c4c4"/><rect x="60" y="148" width="6" height="5" fill="#868686"/><rect x="66" y="135" width="4" height="18" fill="#868686"/><rect x="67" y="141" width="3" height="9" fill="#c4c4c4"/><polygon points="72,134 81,134 86,138 86,152 72,152" fill="#868686"/><rect x="75" y="143" width="4" height="8" fill="#c4c4c4"/><polygon points="95,130 100,130 100,153 95,153" fill="#868686"/><polygon points="100,118 110,118 113,121 115,124 117,130 120,132 120,153 100,153" fill="#868686"/><polygon points="102,118 108,118 108,130 119,130 119,152 101,152" fill="#c4c4c4"/><rect x="110" y="121" width="3" height="10" fill="#0010ff"/><polygon points="133,137 136,135 139,132 141,128 145,120 153,120 153,130 156,134 161,121 171,121 171,152 133,152" fill="#868686"/><rect x="148" y="127" width="3" height="3" fill="#0010ff"/><polygon points="143,140 157,140 157,150 143,150" fill="#c4c4c4"/><polygon points="161,124 171,124 171,152 161,152" fill="#c4c4c4"/><polygon points="176,130 183,129 189,131 189,147 178,147 176,142" fill="#868686"/><rect x="130" y="152" width="3" height="1" fill="#ffff00"/><rect x="141" y="152" width="6" height="1" fill="#00ff00"/><rect x="181" y="152" width="8" height="1" fill="#00ff00"/></svg>
<div style="left:354px;top:340px;width:6px;height:21px;background:#ff0000;" class="r"></div>
<div class="t" style="top:339.23px;font-size:8px;font-weight:normal;color:#000;left:361.70px;transform:scaleX(0.949);-webkit-text-stroke:0.25px #000;">HVY</div>
<div style="left:354px;top:361px;width:6px;height:21px;background:#ffb4b4;" class="r"></div>
<div class="t" style="top:359.23px;font-size:8px;font-weight:normal;color:#000;left:361.68px;transform:scaleX(0.992);-webkit-text-stroke:0.25px #000;">M.HVY</div>
<div style="left:354px;top:382px;width:6px;height:21px;background:#ffff00;" class="r"></div>
<div class="t" style="top:382.23px;font-size:8px;font-weight:normal;color:#000;left:361.68px;transform:scaleX(0.998);-webkit-text-stroke:0.25px #000;">MOD</div>
<div style="left:354px;top:403px;width:6px;height:21px;background:#00ff00;" class="r"></div>
<div class="t" style="top:405.23px;font-size:8px;font-weight:normal;color:#000;left:361.68px;transform:scaleX(0.992);-webkit-text-stroke:0.25px #000;">L.MOD</div>
<div style="left:354px;top:424px;width:6px;height:21px;background:#0010ff;" class="r"></div>
<div class="t" style="top:427.23px;font-size:8px;font-weight:normal;color:#000;left:361.70px;transform:scaleX(0.938);-webkit-text-stroke:0.25px #000;">LGT</div>
<div style="left:354px;top:445px;width:6px;height:20px;background:#808080;" class="r"></div>
<div class="t" style="top:451.23px;font-size:8px;font-weight:normal;color:#000;left:361.64px;transform:scaleX(1.135);-webkit-text-stroke:0.25px #000;">T.LGT</div>
<div style="left:354px;top:465px;width:6px;height:21px;background:#c0c0c0;" class="r"></div>
<div class="t" style="top:473.23px;font-size:8px;font-weight:normal;color:#000;left:361.66px;transform:scaleX(1.075);-webkit-text-stroke:0.25px #000;">TRC</div>
<div style="left:354px;top:486px;width:6px;height:20px;background:#000000;" class="r"></div>
<div class="t" style="top:492.23px;font-size:8px;font-weight:normal;color:#000;left:361.67px;transform:scaleX(1.023);-webkit-text-stroke:0.25px #000;">NONE</div>
<div style="left:49px;top:502px;width:1px;height:11px;background:#000;" class="r"></div>
<div style="left:74px;top:502px;width:1px;height:6px;background:#000;" class="r"></div>
<div style="left:99px;top:502px;width:1px;height:11px;background:#000;" class="r"></div>
<div style="left:124px;top:502px;width:1px;height:6px;background:#000;" class="r"></div>
<div style="left:149px;top:502px;width:1px;height:11px;background:#000;" class="r"></div>
<div style="left:174px;top:502px;width:1px;height:6px;background:#000;" class="r"></div>
<div style="left:199px;top:502px;width:1px;height:11px;background:#000;" class="r"></div>
<div style="left:225px;top:502px;width:1px;height:6px;background:#000;" class="r"></div>
<div style="left:250px;top:502px;width:1px;height:11px;background:#000;" class="r"></div>
<div style="left:275px;top:502px;width:1px;height:6px;background:#000;" class="r"></div>
<div style="left:300px;top:502px;width:1px;height:11px;background:#000;" class="r"></div>
<div style="left:325px;top:502px;width:1px;height:6px;background:#000;" class="r"></div>
<div style="left:350px;top:502px;width:1px;height:11px;background:#000;" class="r"></div>
<div class="t" style="top:515.30px;font-size:8.5px;font-weight:normal;color:#000;left:44.33px;transform:scaleX(1.097);-webkit-text-stroke:0.25px #000;">21:40</div>
<div class="t" style="top:515.30px;font-size:8.5px;font-weight:normal;color:#000;left:94.63px;transform:scaleX(1.097);-webkit-text-stroke:0.25px #000;">22:00</div>
<div class="t" style="top:515.30px;font-size:8.5px;font-weight:normal;color:#000;left:144.93px;transform:scaleX(1.097);-webkit-text-stroke:0.25px #000;">22:20</div>
<div class="t" style="top:515.30px;font-size:8.5px;font-weight:normal;color:#000;left:195.23px;transform:scaleX(1.097);-webkit-text-stroke:0.25px #000;">22:40</div>
<div class="t" style="top:515.30px;font-size:8.5px;font-weight:normal;color:#000;left:245.53px;transform:scaleX(1.097);-webkit-text-stroke:0.25px #000;">23:00</div>
<div class="t" style="top:515.30px;font-size:8.5px;font-weight:normal;color:#000;left:295.83px;transform:scaleX(1.097);-webkit-text-stroke:0.25px #000;">23:20</div>
<div class="t" style="top:515.30px;font-size:8.5px;font-weight:normal;color:#000;left:346.13px;transform:scaleX(1.097);-webkit-text-stroke:0.25px #000;">23:40</div>
<div class="t" style="top:536.96px;font-size:9.5px;font-weight:normal;color:#000;left:13.55px;transform:scaleX(1.179);-webkit-text-stroke:0.25px #000;">Alt (1000ft MSL)</div>
<div class="t" style="top:536.53px;font-size:10px;font-weight:bold;color:#000;left:173.54px;transform:scaleX(1.147);">Drop Size</div>
<div class="t" style="top:536.53px;font-size:10px;font-weight:normal;color:#000;left:293.16px;transform:scaleX(1.090);-webkit-text-stroke:0.25px #000;">Drop Size(microns)</div>
<div style="left:49px;top:547px;width:302px;height:162px;background:#000;" class="r"></div>
<div style="left:44px;top:549px;width:5px;height:1px;background:#000;" class="r"></div>
<div class="t" style="top:544.30px;font-size:8.5px;font-weight:normal;color:#000;right:956.46px;-webkit-text-stroke:0.25px #000;">26</div>
<div style="left:44px;top:559px;width:5px;height:1px;background:#000;" class="r"></div>
<div class="t" style="top:554.80px;font-size:8.5px;font-weight:normal;color:#000;right:956.46px;-webkit-text-stroke:0.25px #000;">24</div>
<div style="left:44px;top:571px;width:5px;height:1px;background:#000;" class="r"></div>
<div class="t" style="top:566.80px;font-size:8.5px;font-weight:normal;color:#000;right:956.46px;-webkit-text-stroke:0.25px #000;">22</div>
<div style="left:44px;top:583px;width:5px;height:1px;background:#000;" class="r"></div>
<div class="t" style="top:578.80px;font-size:8.5px;font-weight:normal;color:#000;right:956.46px;-webkit-text-stroke:0.25px #000;">20</div>
<div style="left:44px;top:595px;width:5px;height:1px;background:#000;" class="r"></div>
<div class="t" style="top:590.80px;font-size:8.5px;font-weight:normal;color:#000;right:956.46px;-webkit-text-stroke:0.25px #000;">18</div>
<div style="left:44px;top:607px;width:5px;height:1px;background:#000;" class="r"></div>
<div class="t" style="top:602.80px;font-size:8.5px;font-weight:normal;color:#000;right:956.46px;-webkit-text-stroke:0.25px #000;">16</div>
<div style="left:44px;top:619px;width:5px;height:1px;background:#000;" class="r"></div>
<div class="t" style="top:614.80px;font-size:8.5px;font-weight:normal;color:#000;right:956.46px;-webkit-text-stroke:0.25px #000;">14</div>
<div style="left:44px;top:631px;width:5px;height:1px;background:#000;" class="r"></div>
<div class="t" style="top:626.80px;font-size:8.5px;font-weight:normal;color:#000;right:956.46px;-webkit-text-stroke:0.25px #000;">12</div>
<div style="left:44px;top:643px;width:5px;height:1px;background:#000;" class="r"></div>
<div class="t" style="top:638.80px;font-size:8.5px;font-weight:normal;color:#000;right:956.46px;-webkit-text-stroke:0.25px #000;">10</div>
<div style="left:44px;top:655px;width:5px;height:1px;background:#000;" class="r"></div>
<div class="t" style="top:650.80px;font-size:8.5px;font-weight:normal;color:#000;right:956.46px;-webkit-text-stroke:0.25px #000;">8</div>
<div style="left:44px;top:667px;width:5px;height:1px;background:#000;" class="r"></div>
<div class="t" style="top:662.80px;font-size:8.5px;font-weight:normal;color:#000;right:956.46px;-webkit-text-stroke:0.25px #000;">6</div>
<div style="left:44px;top:679px;width:5px;height:1px;background:#000;" class="r"></div>
<div class="t" style="top:674.80px;font-size:8.5px;font-weight:normal;color:#000;right:956.46px;-webkit-text-stroke:0.25px #000;">4</div>
<div style="left:44px;top:691px;width:5px;height:1px;background:#000;" class="r"></div>
<div class="t" style="top:686.80px;font-size:8.5px;font-weight:normal;color:#000;right:956.46px;-webkit-text-stroke:0.25px #000;">2</div>
<div style="left:44px;top:700px;width:5px;height:1px;background:#000;" class="r"></div>
<div class="t" style="top:692.80px;font-size:8.5px;font-weight:normal;color:#000;right:956.46px;-webkit-text-stroke:0.25px #000;">0</div>
<svg style="left:49px;top:547px" width="302" height="161" shape-rendering="crispEdges"><rect x="0" y="0" width="188" height="158" fill="#000080"/><rect x="0" y="118" width="2" height="35" fill="#c00000"/><rect x="0" y="117" width="2" height="1" fill="#00b0ff"/><rect x="2" y="118" width="3" height="35" fill="#ff8c00"/><rect x="2" y="117" width="3" height="1" fill="#00b0ff"/><rect x="5" y="118" width="5" height="35" fill="#ff5000"/><rect x="5" y="117" width="5" height="1" fill="#00b0ff"/><rect x="10" y="119" width="2" height="34" fill="#ff8c00"/><rect x="10" y="118" width="2" height="1" fill="#00b0ff"/><rect x="12" y="119" width="3" height="34" fill="#f00000"/><rect x="12" y="118" width="3" height="1" fill="#00b0ff"/><rect x="15" y="118" width="2" height="35" fill="#90ff70"/><rect x="15" y="117" width="2" height="1" fill="#00b0ff"/><rect x="17" y="120" width="3" height="33" fill="#c00000"/><rect x="17" y="119" width="3" height="1" fill="#00b0ff"/><rect x="20" y="120" width="2" height="33" fill="#00d0ff"/><rect x="20" y="119" width="2" height="1" fill="#00b0ff"/><rect x="22" y="119" width="5" height="34" fill="#ffff00"/><rect x="22" y="118" width="5" height="1" fill="#00b0ff"/><rect x="27" y="121" width="3" height="32" fill="#90ff70"/><rect x="27" y="120" width="3" height="1" fill="#00b0ff"/><rect x="30" y="119" width="2" height="34" fill="#ff5000"/><rect x="30" y="118" width="2" height="1" fill="#00b0ff"/><rect x="32" y="119" width="3" height="34" fill="#f00000"/><rect x="32" y="118" width="3" height="1" fill="#00b0ff"/><rect x="35" y="119" width="2" height="34" fill="#ffff00"/><rect x="35" y="118" width="2" height="1" fill="#00b0ff"/><rect x="37" y="118" width="3" height="35" fill="#ff8c00"/><rect x="37" y="117" width="3" height="1" fill="#00b0ff"/><rect x="40" y="118" width="2" height="35" fill="#f00000"/><rect x="40" y="117" width="2" height="1" fill="#00b0ff"/><rect x="42" y="119" width="3" height="34" fill="#f00000"/><rect x="42" y="118" width="3" height="1" fill="#00b0ff"/><rect x="45" y="118" width="7" height="35" fill="#ff5000"/><rect x="45" y="117" width="7" height="1" fill="#00b0ff"/><rect x="52" y="118" width="3" height="35" fill="#90ff70"/><rect x="52" y="117" width="3" height="1" fill="#00b0ff"/><rect x="55" y="117" width="5" height="36" fill="#ff5000"/><rect x="55" y="116" width="5" height="1" fill="#00b0ff"/><rect x="60" y="117" width="2" height="36" fill="#90ff70"/><rect x="60" y="116" width="2" height="1" fill="#00b0ff"/><rect x="62" y="117" width="3" height="33" fill="#ff8c00"/><rect x="62" y="116" width="3" height="1" fill="#00b0ff"/><rect x="65" y="116" width="5" height="34" fill="#f00000"/><rect x="65" y="115" width="5" height="1" fill="#00b0ff"/><rect x="70" y="116" width="2" height="34" fill="#90ff70"/><rect x="70" y="115" width="2" height="1" fill="#00b0ff"/><rect x="72" y="115" width="3" height="35" fill="#800000"/><rect x="72" y="114" width="3" height="1" fill="#00b0ff"/><rect x="75" y="118" width="3" height="32" fill="#c00000"/><rect x="75" y="117" width="3" height="1" fill="#00b0ff"/><rect x="78" y="116" width="2" height="37" fill="#90ff70"/><rect x="78" y="115" width="2" height="1" fill="#00b0ff"/><rect x="80" y="117" width="3" height="36" fill="#ff8c00"/><rect x="80" y="116" width="3" height="1" fill="#00b0ff"/><rect x="83" y="117" width="2" height="36" fill="#f00000"/><rect x="83" y="116" width="2" height="1" fill="#00b0ff"/><rect x="85" y="119" width="3" height="34" fill="#90ff70"/><rect x="85" y="118" width="3" height="1" fill="#00b0ff"/><rect x="88" y="117" width="2" height="36" fill="#c00000"/><rect x="88" y="116" width="2" height="1" fill="#00b0ff"/><rect x="90" y="118" width="3" height="35" fill="#f00000"/><rect x="90" y="117" width="3" height="1" fill="#00b0ff"/><rect x="93" y="118" width="2" height="35" fill="#90ff70"/><rect x="93" y="117" width="2" height="1" fill="#00b0ff"/><rect x="95" y="117" width="3" height="36" fill="#c00000"/><rect x="95" y="116" width="3" height="1" fill="#00b0ff"/><rect x="98" y="119" width="2" height="34" fill="#ff8c00"/><rect x="98" y="118" width="2" height="1" fill="#00b0ff"/><rect x="100" y="117" width="3" height="36" fill="#c00000"/><rect x="100" y="116" width="3" height="1" fill="#00b0ff"/><rect x="103" y="118" width="2" height="32" fill="#ff5000"/><rect x="103" y="117" width="2" height="1" fill="#00b0ff"/><rect x="105" y="119" width="3" height="31" fill="#90ff70"/><rect x="105" y="118" width="3" height="1" fill="#00b0ff"/><rect x="108" y="120" width="2" height="30" fill="#f00000"/><rect x="108" y="119" width="2" height="1" fill="#00b0ff"/><rect x="110" y="119" width="3" height="31" fill="#ff5000"/><rect x="110" y="118" width="3" height="1" fill="#00b0ff"/><rect x="113" y="120" width="2" height="30" fill="#f00000"/><rect x="113" y="119" width="2" height="1" fill="#00b0ff"/><rect x="115" y="119" width="3" height="31" fill="#90ff70"/><rect x="115" y="118" width="3" height="1" fill="#00b0ff"/><rect x="118" y="119" width="2" height="31" fill="#f00000"/><rect x="118" y="118" width="2" height="1" fill="#00b0ff"/><rect x="120" y="119" width="3" height="31" fill="#ffff00"/><rect x="120" y="118" width="3" height="1" fill="#00b0ff"/><rect x="123" y="118" width="2" height="35" fill="#90ff70"/><rect x="123" y="117" width="2" height="1" fill="#00b0ff"/><rect x="125" y="119" width="3" height="34" fill="#c00000"/><rect x="125" y="118" width="3" height="1" fill="#00b0ff"/><rect x="128" y="120" width="5" height="33" fill="#f00000"/><rect x="128" y="119" width="5" height="1" fill="#00b0ff"/><rect x="133" y="118" width="2" height="35" fill="#90ff70"/><rect x="133" y="117" width="2" height="1" fill="#00b0ff"/><rect x="135" y="119" width="3" height="34" fill="#f00000"/><rect x="135" y="118" width="3" height="1" fill="#00b0ff"/><rect x="138" y="120" width="5" height="33" fill="#c00000"/><rect x="138" y="119" width="5" height="1" fill="#00b0ff"/><rect x="143" y="120" width="5" height="33" fill="#ff5000"/><rect x="143" y="119" width="5" height="1" fill="#00b0ff"/><rect x="148" y="120" width="3" height="33" fill="#60ffa0"/><rect x="148" y="119" width="3" height="1" fill="#00b0ff"/><rect x="151" y="120" width="2" height="33" fill="#f00000"/><rect x="151" y="119" width="2" height="1" fill="#00b0ff"/><rect x="153" y="120" width="3" height="33" fill="#90ff70"/><rect x="153" y="119" width="3" height="1" fill="#00b0ff"/><rect x="156" y="119" width="2" height="34" fill="#40ffc0"/><rect x="156" y="118" width="2" height="1" fill="#00b0ff"/><rect x="158" y="119" width="3" height="34" fill="#ffff00"/><rect x="158" y="118" width="3" height="1" fill="#00b0ff"/><rect x="161" y="119" width="2" height="34" fill="#f00000"/><rect x="161" y="118" width="2" height="1" fill="#00b0ff"/><rect x="163" y="119" width="3" height="34" fill="#0080ff"/><rect x="163" y="118" width="3" height="1" fill="#00b0ff"/><rect x="166" y="120" width="2" height="33" fill="#0030e0"/><rect x="166" y="119" width="2" height="1" fill="#00b0ff"/><rect x="168" y="120" width="3" height="33" fill="#00d0ff"/><rect x="168" y="119" width="3" height="1" fill="#00b0ff"/><rect x="171" y="122" width="2" height="31" fill="#40a0ff"/><rect x="171" y="121" width="2" height="1" fill="#00b0ff"/><rect x="173" y="122" width="3" height="31" fill="#60ffa0"/><rect x="173" y="121" width="3" height="1" fill="#00b0ff"/><rect x="176" y="121" width="2" height="32" fill="#ffff00"/><rect x="176" y="120" width="2" height="1" fill="#00b0ff"/><rect x="178" y="122" width="3" height="31" fill="#ffa000"/><rect x="178" y="121" width="3" height="1" fill="#00b0ff"/><rect x="181" y="122" width="2" height="31" fill="#a0ff60"/><rect x="181" y="121" width="2" height="1" fill="#00b0ff"/><rect x="183" y="121" width="3" height="32" fill="#d8ff20"/><rect x="183" y="120" width="3" height="1" fill="#00b0ff"/><rect x="186" y="120" width="2" height="33" fill="#ff8c00"/><rect x="186" y="119" width="2" height="1" fill="#00b0ff"/><rect x="67" y="148" width="3" height="1" fill="#ffff00"/><rect x="65" y="151" width="3" height="1" fill="#ff8000"/><rect x="107" y="152" width="5" height="1" fill="#00c0ff"/><rect x="102" y="152" width="3" height="1" fill="#ffff00"/><rect x="59" y="152" width="2" height="1" fill="#00c0ff"/></svg>
<div class="r" style="left:354px;top:547px;width:6px;height:165px;background:linear-gradient(#800000 0%,#ff0000 12.5%,#ffff00 37.5%,#00ffff 62.5%,#0000ff 87.5%,#000080 100%)"></div>
<div style="left:361px;top:548px;width:6px;height:1px;background:#000;" class="r"></div>
<div class="t" style="top:544.80px;font-size:8.5px;font-weight:normal;color:#000;left:367.50px;-webkit-text-stroke:0.25px #000;">60</div>
<div style="left:361px;top:575px;width:6px;height:1px;background:#000;" class="r"></div>
<div class="t" style="top:570.80px;font-size:8.5px;font-weight:normal;color:#000;left:367.50px;-webkit-text-stroke:0.25px #000;">50</div>
<div style="left:361px;top:601px;width:6px;height:1px;background:#000;" class="r"></div>
<div class="t" style="top:596.80px;font-size:8.5px;font-weight:normal;color:#000;left:367.50px;-webkit-text-stroke:0.25px #000;">40</div>
<div style="left:361px;top:628px;width:6px;height:1px;background:#000;" class="r"></div>
<div class="t" style="top:623.80px;font-size:8.5px;font-weight:normal;color:#000;left:367.50px;-webkit-text-stroke:0.25px #000;">30</div>
<div style="left:361px;top:655px;width:6px;height:1px;background:#000;" class="r"></div>
<div class="t" style="top:650.80px;font-size:8.5px;font-weight:normal;color:#000;left:367.50px;-webkit-text-stroke:0.25px #000;">20</div>
<div style="left:361px;top:682px;width:6px;height:1px;background:#000;" class="r"></div>
<div class="t" style="top:677.80px;font-size:8.5px;font-weight:normal;color:#000;left:367.50px;-webkit-text-stroke:0.25px #000;">10</div>
<div style="left:361px;top:708px;width:6px;height:1px;background:#000;" class="r"></div>
<div class="t" style="top:700.80px;font-size:8.5px;font-weight:normal;color:#000;left:367.50px;-webkit-text-stroke:0.25px #000;">0</div>
<div style="left:49px;top:709px;width:1px;height:11px;background:#000;" class="r"></div>
<div style="left:74px;top:709px;width:1px;height:6px;background:#000;" class="r"></div>
<div style="left:99px;top:709px;width:1px;height:11px;background:#000;" class="r"></div>
<div style="left:124px;top:709px;width:1px;height:6px;background:#000;" class="r"></div>
<div style="left:149px;top:709px;width:1px;height:11px;background:#000;" class="r"></div>
<div style="left:174px;top:709px;width:1px;height:6px;background:#000;" class="r"></div>
<div style="left:199px;top:709px;width:1px;height:11px;background:#000;" class="r"></div>
<div style="left:225px;top:709px;width:1px;height:6px;background:#000;" class="r"></div>
<div style="left:250px;top:709px;width:1px;height:11px;background:#000;" class="r"></div>
<div style="left:275px;top:709px;width:1px;height:6px;background:#000;" class="r"></div>
<div style="left:300px;top:709px;width:1px;height:11px;background:#000;" class="r"></div>
<div style="left:325px;top:709px;width:1px;height:6px;background:#000;" class="r"></div>
<div style="left:350px;top:709px;width:1px;height:11px;background:#000;" class="r"></div>
<div class="t" style="top:722.30px;font-size:8.5px;font-weight:normal;color:#000;left:44.33px;transform:scaleX(1.097);-webkit-text-stroke:0.25px #000;">21:40</div>
<div class="t" style="top:722.30px;font-size:8.5px;font-weight:normal;color:#000;left:94.63px;transform:scaleX(1.097);-webkit-text-stroke:0.25px #000;">22:00</div>
<div class="t" style="top:722.30px;font-size:8.5px;font-weight:normal;color:#000;left:144.93px;transform:scaleX(1.097);-webkit-text-stroke:0.25px #000;">22:20</div>
<div class="t" style="top:722.30px;font-size:8.5px;font-weight:normal;color:#000;left:195.23px;transform:scaleX(1.097);-webkit-text-stroke:0.25px #000;">22:40</div>
<div class="t" style="top:722.30px;font-size:8.5px;font-weight:normal;color:#000;left:245.53px;transform:scaleX(1.097);-webkit-text-stroke:0.25px #000;">23:00</div>
<div class="t" style="top:722.30px;font-size:8.5px;font-weight:normal;color:#000;left:295.83px;transform:scaleX(1.097);-webkit-text-stroke:0.25px #000;">23:20</div>
<div class="t" style="top:722.30px;font-size:8.5px;font-weight:normal;color:#000;left:346.13px;transform:scaleX(1.097);-webkit-text-stroke:0.25px #000;">23:40</div>
<div class="t" style="top:32.96px;font-size:9.5px;font-weight:normal;color:#000;left:405.75px;transform:scaleX(1.179);-webkit-text-stroke:0.25px #000;">Alt (1000ft MSL)</div>
<div style="left:441px;top:43px;width:302px;height:133px;background:#000;" class="r"></div>
<div style="left:436px;top:43px;width:5px;height:1px;background:#000;" class="r"></div>
<div class="t" style="top:40.80px;font-size:8.5px;font-weight:normal;color:#000;right:564.46px;-webkit-text-stroke:0.25px #000;">25</div>
<div style="left:436px;top:70px;width:5px;height:1px;background:#000;" class="r"></div>
<div class="t" style="top:66.20px;font-size:8.5px;font-weight:normal;color:#000;right:564.46px;-webkit-text-stroke:0.25px #000;">20</div>
<div style="left:436px;top:97px;width:5px;height:1px;background:#000;" class="r"></div>
<div class="t" style="top:93.20px;font-size:8.5px;font-weight:normal;color:#000;right:564.46px;-webkit-text-stroke:0.25px #000;">15</div>
<div style="left:436px;top:124px;width:5px;height:1px;background:#000;" class="r"></div>
<div class="t" style="top:120.20px;font-size:8.5px;font-weight:normal;color:#000;right:564.46px;-webkit-text-stroke:0.25px #000;">10</div>
<div style="left:436px;top:151px;width:5px;height:1px;background:#000;" class="r"></div>
<div class="t" style="top:146.80px;font-size:8.5px;font-weight:normal;color:#000;right:564.46px;-webkit-text-stroke:0.25px #000;">5</div>
<div style="left:436px;top:176px;width:5px;height:1px;background:#000;" class="r"></div>
<div class="t" style="top:168.80px;font-size:8.5px;font-weight:normal;color:#000;right:564.46px;-webkit-text-stroke:0.25px #000;">0</div>
<svg style="left:441px;top:43px" width="302" height="133" shape-rendering="crispEdges"><rect x="0" y="96" width="4" height="30" fill="#fff"/><rect x="4" y="96" width="4" height="30" fill="#fff"/><rect x="8" y="95" width="4" height="31" fill="#fff"/><rect x="12" y="96" width="3" height="30" fill="#fff"/><rect x="15" y="95" width="4" height="31" fill="#fff"/><rect x="19" y="95" width="2" height="31" fill="#fff"/><rect x="21" y="97" width="3" height="29" fill="#fff"/><rect x="24" y="97" width="2" height="29" fill="#fff"/><rect x="26" y="95" width="4" height="31" fill="#fff"/><rect x="30" y="95" width="4" height="31" fill="#fff"/><rect x="34" y="95" width="2" height="31" fill="#fff"/><rect x="36" y="95" width="3" height="31" fill="#fff"/><rect x="39" y="96" width="2" height="30" fill="#fff"/><rect x="41" y="94" width="2" height="32" fill="#fff"/><rect x="43" y="96" width="2" height="30" fill="#fff"/><rect x="45" y="95" width="2" height="31" fill="#fff"/><rect x="47" y="93" width="2" height="33" fill="#fff"/><rect x="49" y="94" width="2" height="32" fill="#fff"/><rect x="51" y="94" width="2" height="32" fill="#fff"/><rect x="53" y="94" width="3" height="32" fill="#fff"/><rect x="56" y="94" width="2" height="32" fill="#fff"/><rect x="58" y="94" width="2" height="32" fill="#fff"/><rect x="60" y="94" width="3" height="32" fill="#fff"/><rect x="63" y="94" width="2" height="32" fill="#fff"/><rect x="65" y="94" width="3" height="32" fill="#fff"/><rect x="68" y="94" width="2" height="32" fill="#fff"/><rect x="70" y="94" width="2" height="32" fill="#fff"/><rect x="72" y="93" width="3" height="33" fill="#fff"/><rect x="75" y="94" width="4" height="32" fill="#fff"/><rect x="79" y="94" width="2" height="32" fill="#fff"/><rect x="81" y="94" width="3" height="32" fill="#fff"/><rect x="84" y="94" width="3" height="32" fill="#fff"/><rect x="87" y="95" width="2" height="31" fill="#fff"/><rect x="89" y="94" width="3" height="32" fill="#fff"/><rect x="92" y="94" width="2" height="32" fill="#fff"/><rect x="94" y="94" width="2" height="32" fill="#fff"/><rect x="96" y="94" width="3" height="32" fill="#fff"/><rect x="99" y="96" width="4" height="30" fill="#fff"/><rect x="103" y="96" width="3" height="30" fill="#fff"/><rect x="106" y="94" width="4" height="32" fill="#fff"/><rect x="110" y="94" width="3" height="32" fill="#fff"/><rect x="113" y="95" width="4" height="31" fill="#fff"/><rect x="117" y="96" width="4" height="30" fill="#fff"/><rect x="121" y="96" width="2" height="30" fill="#fff"/><rect x="123" y="96" width="3" height="30" fill="#fff"/><rect x="126" y="96" width="4" height="30" fill="#fff"/><rect x="130" y="96" width="4" height="31" fill="#fff"/><rect x="134" y="95" width="3" height="32" fill="#fff"/><rect x="137" y="97" width="4" height="30" fill="#fff"/><rect x="141" y="96" width="3" height="31" fill="#fff"/><rect x="144" y="96" width="3" height="31" fill="#fff"/><rect x="147" y="97" width="2" height="30" fill="#fff"/><rect x="149" y="97" width="4" height="30" fill="#fff"/><rect x="153" y="97" width="2" height="29" fill="#fff"/><rect x="155" y="96" width="3" height="30" fill="#fff"/><rect x="158" y="98" width="3" height="28" fill="#fff"/><rect x="161" y="98" width="3" height="28" fill="#fff"/><rect x="164" y="97" width="2" height="29" fill="#fff"/><rect x="166" y="97" width="4" height="29" fill="#fff"/><rect x="170" y="97" width="3" height="29" fill="#fff"/><rect x="173" y="96" width="4" height="30" fill="#fff"/><rect x="177" y="98" width="2" height="29" fill="#fff"/><rect x="179" y="97" width="2" height="30" fill="#fff"/><rect x="181" y="97" width="4" height="30" fill="#fff"/><rect x="185" y="98" width="3" height="29" fill="#fff"/><rect x="188" y="98" width="4" height="29" fill="#fff"/><rect x="192" y="96" width="2" height="31" fill="#fff"/><rect x="194" y="96" width="4" height="31" fill="#fff"/><rect x="198" y="97" width="3" height="30" fill="#fff"/><rect x="201" y="97" width="2" height="30" fill="#fff"/><rect x="203" y="97" width="4" height="30" fill="#fff"/><rect x="207" y="98" width="4" height="29" fill="#fff"/><rect x="211" y="97" width="2" height="30" fill="#fff"/><rect x="213" y="97" width="3" height="30" fill="#fff"/><rect x="216" y="96" width="2" height="31" fill="#fff"/><rect x="218" y="97" width="3" height="30" fill="#fff"/><rect x="221" y="98" width="2" height="29" fill="#fff"/><rect x="223" y="97" width="4" height="30" fill="#fff"/><rect x="227" y="98" width="4" height="29" fill="#fff"/><rect x="231" y="97" width="3" height="30" fill="#fff"/><rect x="234" y="97" width="3" height="30" fill="#fff"/><rect x="237" y="98" width="3" height="29" fill="#fff"/><rect x="240" y="97" width="3" height="30" fill="#fff"/><rect x="243" y="99" width="2" height="28" fill="#fff"/><rect x="245" y="98" width="4" height="29" fill="#fff"/><rect x="249" y="99" width="4" height="28" fill="#fff"/><rect x="253" y="98" width="3" height="29" fill="#fff"/><rect x="256" y="99" width="2" height="28" fill="#fff"/><rect x="258" y="98" width="3" height="29" fill="#fff"/><rect x="261" y="98" width="2" height="29" fill="#fff"/><rect x="263" y="97" width="4" height="30" fill="#fff"/><rect x="267" y="98" width="3" height="29" fill="#fff"/><rect x="270" y="98" width="4" height="29" fill="#fff"/><rect x="274" y="98" width="3" height="29" fill="#fff"/><rect x="277" y="98" width="4" height="29" fill="#fff"/><rect x="281" y="98" width="3" height="29" fill="#fff"/><rect x="284" y="97" width="4" height="30" fill="#fff"/><rect x="288" y="99" width="3" height="28" fill="#fff"/><rect x="291" y="99" width="3" height="28" fill="#fff"/><rect x="294" y="99" width="3" height="28" fill="#fff"/><rect x="297" y="99" width="4" height="28" fill="#fff"/><rect x="301" y="99" width="3" height="28" fill="#fff"/><rect x="0" y="124" width="2" height="1" fill="#000"/><rect x="11" y="124" width="3" height="1" fill="#000"/><rect x="55" y="124" width="26" height="1" fill="#000"/><rect x="85" y="124" width="8" height="1" fill="#000"/><rect x="100" y="124" width="22" height="1" fill="#000"/><rect x="110" y="86" width="2" height="1" fill="#fff"/><rect x="208" y="12" width="2" height="1" fill="#fff"/><rect x="196" y="49" width="2" height="1" fill="#fff"/><rect x="227" y="63" width="2" height="1" fill="#fff"/><rect x="229" y="84" width="2" height="1" fill="#fff"/><rect x="292" y="44" width="2" height="1" fill="#fff"/><rect x="297" y="75" width="2" height="1" fill="#fff"/><rect x="69" y="60" width="2" height="1" fill="#fff"/><rect x="245" y="95" width="2" height="1" fill="#fff"/></svg>
<div style="left:441px;top:176px;width:1px;height:11px;background:#000;" class="r"></div>
<div style="left:466px;top:176px;width:1px;height:6px;background:#000;" class="r"></div>
<div style="left:491px;top:176px;width:1px;height:11px;background:#000;" class="r"></div>
<div style="left:516px;top:176px;width:1px;height:6px;background:#000;" class="r"></div>
<div style="left:541px;top:176px;width:1px;height:11px;background:#000;" class="r"></div>
<div style="left:566px;top:176px;width:1px;height:6px;background:#000;" class="r"></div>
<div style="left:591px;top:176px;width:1px;height:11px;background:#000;" class="r"></div>
<div style="left:617px;top:176px;width:1px;height:6px;background:#000;" class="r"></div>
<div style="left:642px;top:176px;width:1px;height:11px;background:#000;" class="r"></div>
<div style="left:667px;top:176px;width:1px;height:6px;background:#000;" class="r"></div>
<div style="left:692px;top:176px;width:1px;height:11px;background:#000;" class="r"></div>
<div style="left:717px;top:176px;width:1px;height:6px;background:#000;" class="r"></div>
<div style="left:742px;top:176px;width:1px;height:11px;background:#000;" class="r"></div>
<div class="t" style="top:188.80px;font-size:8.5px;font-weight:normal;color:#000;left:436.33px;transform:scaleX(1.097);-webkit-text-stroke:0.25px #000;">21:40</div>
<div class="t" style="top:188.80px;font-size:8.5px;font-weight:normal;color:#000;left:486.63px;transform:scaleX(1.097);-webkit-text-stroke:0.25px #000;">22:00</div>
<div class="t" style="top:188.80px;font-size:8.5px;font-weight:normal;color:#000;left:536.93px;transform:scaleX(1.097);-webkit-text-stroke:0.25px #000;">22:20</div>
<div class="t" style="top:188.80px;font-size:8.5px;font-weight:normal;color:#000;left:587.23px;transform:scaleX(1.097);-webkit-text-stroke:0.25px #000;">22:40</div>
<div class="t" style="top:188.80px;font-size:8.5px;font-weight:normal;color:#000;left:637.53px;transform:scaleX(1.097);-webkit-text-stroke:0.25px #000;">23:00</div>
<div class="t" style="top:188.80px;font-size:8.5px;font-weight:normal;color:#000;left:687.83px;transform:scaleX(1.097);-webkit-text-stroke:0.25px #000;">23:20</div>
<div class="t" style="top:188.80px;font-size:8.5px;font-weight:normal;color:#000;left:738.13px;transform:scaleX(1.097);-webkit-text-stroke:0.25px #000;">23:40</div>
<div class="t" style="top:210.96px;font-size:9.5px;font-weight:normal;color:#000;left:405.75px;transform:scaleX(1.179);-webkit-text-stroke:0.25px #000;">Alt (1000ft MSL)</div>
<div class="t" style="top:210.53px;font-size:10px;font-weight:normal;color:#000;left:722.06px;transform:scaleX(1.109);-webkit-text-stroke:0.25px #000;">LWC(g/m3)</div>
<div style="left:441px;top:221px;width:302px;height:133px;background:#000;" class="r"></div>
<div style="left:436px;top:221px;width:5px;height:1px;background:#000;" class="r"></div>
<div class="t" style="top:219.20px;font-size:8.5px;font-weight:normal;color:#000;right:564.46px;-webkit-text-stroke:0.25px #000;">25</div>
<div style="left:436px;top:248px;width:5px;height:1px;background:#000;" class="r"></div>
<div class="t" style="top:244.20px;font-size:8.5px;font-weight:normal;color:#000;right:564.46px;-webkit-text-stroke:0.25px #000;">20</div>
<div style="left:436px;top:275px;width:5px;height:1px;background:#000;" class="r"></div>
<div class="t" style="top:270.80px;font-size:8.5px;font-weight:normal;color:#000;right:564.46px;-webkit-text-stroke:0.25px #000;">15</div>
<div style="left:436px;top:302px;width:5px;height:1px;background:#000;" class="r"></div>
<div class="t" style="top:298.20px;font-size:8.5px;font-weight:normal;color:#000;right:564.46px;-webkit-text-stroke:0.25px #000;">10</div>
<div style="left:436px;top:329px;width:5px;height:1px;background:#000;" class="r"></div>
<div class="t" style="top:325.20px;font-size:8.5px;font-weight:normal;color:#000;right:564.46px;-webkit-text-stroke:0.25px #000;">5</div>
<div style="left:436px;top:354px;width:5px;height:1px;background:#000;" class="r"></div>
<div class="t" style="top:346.80px;font-size:8.5px;font-weight:normal;color:#000;right:564.46px;-webkit-text-stroke:0.25px #000;">0</div>
<svg style="left:441px;top:221px" width="302" height="133" shape-rendering="crispEdges"><rect x="0" y="95" width="3" height="30" fill="rgb(39,0,0)"/><rect x="3" y="96" width="2" height="29" fill="rgb(38,0,0)"/><rect x="5" y="96" width="1" height="29" fill="rgb(45,0,0)"/><rect x="6" y="97" width="1" height="28" fill="rgb(33,0,0)"/><rect x="7" y="97" width="3" height="28" fill="rgb(33,0,0)"/><rect x="10" y="96" width="1" height="29" fill="rgb(32,0,0)"/><rect x="11" y="97" width="1" height="28" fill="rgb(53,0,0)"/><rect x="12" y="96" width="1" height="29" fill="rgb(34,0,0)"/><rect x="13" y="96" width="3" height="29" fill="rgb(52,0,0)"/><rect x="16" y="97" width="2" height="28" fill="rgb(36,0,0)"/><rect x="18" y="96" width="1" height="29" fill="rgb(50,0,0)"/><rect x="19" y="95" width="3" height="30" fill="rgb(40,0,0)"/><rect x="22" y="95" width="2" height="30" fill="rgb(35,0,0)"/><rect x="24" y="94" width="1" height="31" fill="rgb(28,0,0)"/><rect x="25" y="95" width="2" height="30" fill="rgb(72,0,0)"/><rect x="27" y="94" width="2" height="31" fill="rgb(28,0,0)"/><rect x="29" y="94" width="3" height="31" fill="rgb(34,0,0)"/><rect x="32" y="95" width="3" height="30" fill="rgb(48,0,0)"/><rect x="35" y="95" width="2" height="30" fill="rgb(47,0,0)"/><rect x="37" y="95" width="1" height="30" fill="rgb(36,0,0)"/><rect x="38" y="95" width="2" height="30" fill="rgb(51,0,0)"/><rect x="40" y="95" width="1" height="30" fill="rgb(55,0,0)"/><rect x="41" y="95" width="2" height="30" fill="rgb(47,0,0)"/><rect x="43" y="94" width="2" height="31" fill="rgb(46,0,0)"/><rect x="45" y="95" width="1" height="30" fill="rgb(31,0,0)"/><rect x="46" y="96" width="2" height="29" fill="rgb(34,0,0)"/><rect x="48" y="96" width="1" height="29" fill="rgb(53,0,0)"/><rect x="49" y="96" width="1" height="29" fill="rgb(31,0,0)"/><rect x="50" y="95" width="3" height="30" fill="rgb(38,0,0)"/><rect x="53" y="95" width="2" height="30" fill="rgb(31,0,0)"/><rect x="55" y="95" width="1" height="30" fill="rgb(40,0,0)"/><rect x="56" y="96" width="3" height="29" fill="rgb(39,0,0)"/><rect x="59" y="94" width="2" height="31" fill="rgb(90,0,0)"/><rect x="61" y="95" width="2" height="30" fill="rgb(52,0,0)"/><rect x="63" y="94" width="2" height="31" fill="rgb(39,0,0)"/><rect x="65" y="93" width="2" height="32" fill="rgb(50,0,0)"/><rect x="67" y="93" width="2" height="32" fill="rgb(29,0,0)"/><rect x="69" y="93" width="2" height="32" fill="rgb(33,0,0)"/><rect x="71" y="93" width="2" height="32" fill="rgb(76,0,0)"/><rect x="73" y="93" width="3" height="32" fill="rgb(95,0,0)"/><rect x="76" y="93" width="2" height="32" fill="rgb(32,0,0)"/><rect x="78" y="93" width="2" height="32" fill="rgb(30,0,0)"/><rect x="80" y="96" width="2" height="29" fill="rgb(30,0,0)"/><rect x="82" y="95" width="2" height="30" fill="rgb(52,0,0)"/><rect x="84" y="96" width="2" height="29" fill="rgb(52,0,0)"/><rect x="86" y="96" width="3" height="29" fill="rgb(31,0,0)"/><rect x="89" y="95" width="2" height="30" fill="rgb(32,0,0)"/><rect x="91" y="96" width="1" height="29" fill="rgb(52,0,0)"/><rect x="92" y="96" width="1" height="29" fill="rgb(33,0,0)"/><rect x="93" y="96" width="3" height="29" fill="rgb(33,0,0)"/><rect x="96" y="95" width="2" height="30" fill="rgb(30,0,0)"/><rect x="98" y="95" width="1" height="30" fill="rgb(46,0,0)"/><rect x="99" y="95" width="2" height="30" fill="rgb(44,0,0)"/><rect x="101" y="95" width="1" height="30" fill="rgb(12,0,0)"/><rect x="102" y="96" width="2" height="29" fill="rgb(25,0,0)"/><rect x="104" y="96" width="3" height="29" fill="rgb(11,0,0)"/><rect x="107" y="96" width="1" height="29" fill="rgb(17,0,0)"/><rect x="108" y="95" width="2" height="30" fill="rgb(17,0,0)"/><rect x="110" y="95" width="1" height="30" fill="rgb(11,0,0)"/><rect x="111" y="97" width="3" height="28" fill="rgb(11,0,0)"/><rect x="114" y="96" width="2" height="29" fill="rgb(25,0,0)"/><rect x="116" y="96" width="3" height="29" fill="rgb(20,0,0)"/><rect x="119" y="96" width="1" height="29" fill="rgb(28,0,0)"/><rect x="120" y="95" width="3" height="30" fill="rgb(32,0,0)"/><rect x="123" y="94" width="3" height="31" fill="rgb(31,0,0)"/><rect x="126" y="95" width="2" height="30" fill="rgb(52,0,0)"/><rect x="128" y="94" width="2" height="31" fill="rgb(72,0,0)"/><rect x="130" y="97" width="1" height="29" fill="rgb(31,0,0)"/><rect x="131" y="96" width="3" height="30" fill="rgb(34,0,0)"/><rect x="134" y="97" width="1" height="29" fill="rgb(28,0,0)"/><rect x="135" y="97" width="2" height="29" fill="rgb(42,0,0)"/><rect x="137" y="97" width="1" height="29" fill="rgb(44,0,0)"/><rect x="138" y="97" width="1" height="29" fill="rgb(43,0,0)"/><rect x="139" y="97" width="2" height="29" fill="rgb(49,0,0)"/><rect x="141" y="97" width="2" height="29" fill="rgb(53,0,0)"/><rect x="143" y="98" width="2" height="28" fill="rgb(28,0,0)"/><rect x="145" y="97" width="2" height="29" fill="rgb(28,0,0)"/><rect x="147" y="98" width="2" height="28" fill="rgb(47,0,0)"/><rect x="149" y="98" width="2" height="28" fill="rgb(41,0,0)"/><rect x="151" y="97" width="2" height="29" fill="rgb(42,0,0)"/><rect x="153" y="98" width="3" height="28" fill="rgb(40,0,0)"/><rect x="156" y="97" width="3" height="29" fill="rgb(38,0,0)"/><rect x="159" y="96" width="2" height="30" fill="rgb(28,0,0)"/><rect x="161" y="97" width="2" height="29" fill="rgb(48,0,0)"/><rect x="163" y="96" width="3" height="30" fill="rgb(47,0,0)"/><rect x="166" y="97" width="3" height="29" fill="rgb(50,0,0)"/><rect x="169" y="97" width="2" height="29" fill="rgb(28,0,0)"/><rect x="171" y="98" width="3" height="28" fill="rgb(35,0,0)"/><rect x="174" y="96" width="2" height="30" fill="rgb(44,0,0)"/><rect x="176" y="97" width="1" height="29" fill="rgb(45,0,0)"/><rect x="177" y="97" width="2" height="29" fill="rgb(74,0,0)"/><rect x="179" y="97" width="2" height="29" fill="rgb(50,0,0)"/><rect x="181" y="98" width="3" height="28" fill="rgb(40,0,0)"/><rect x="184" y="96" width="2" height="30" fill="rgb(50,0,0)"/><rect x="186" y="97" width="2" height="29" fill="rgb(38,0,0)"/></svg>
<div class="r" style="left:746px;top:221px;width:6px;height:137px;background:linear-gradient(#ff0000 2%,#000000 95%)"></div>
<div style="left:753px;top:223px;width:6px;height:1px;background:#000;" class="r"></div>
<div class="t" style="top:219.30px;font-size:8.5px;font-weight:normal;color:#000;left:759.50px;-webkit-text-stroke:0.25px #000;">0.2</div>
<div style="left:753px;top:289px;width:6px;height:1px;background:#000;" class="r"></div>
<div class="t" style="top:284.80px;font-size:8.5px;font-weight:normal;color:#000;left:759.50px;-webkit-text-stroke:0.25px #000;">0.1</div>
<div style="left:753px;top:356px;width:6px;height:1px;background:#000;" class="r"></div>
<div class="t" style="top:347.80px;font-size:8.5px;font-weight:normal;color:#000;left:759.50px;-webkit-text-stroke:0.25px #000;">0.0</div>
<div style="left:441px;top:354px;width:1px;height:11px;background:#000;" class="r"></div>
<div style="left:466px;top:354px;width:1px;height:6px;background:#000;" class="r"></div>
<div style="left:491px;top:354px;width:1px;height:11px;background:#000;" class="r"></div>
<div style="left:516px;top:354px;width:1px;height:6px;background:#000;" class="r"></div>
<div style="left:541px;top:354px;width:1px;height:11px;background:#000;" class="r"></div>
<div style="left:566px;top:354px;width:1px;height:6px;background:#000;" class="r"></div>
<div style="left:591px;top:354px;width:1px;height:11px;background:#000;" class="r"></div>
<div style="left:617px;top:354px;width:1px;height:6px;background:#000;" class="r"></div>
<div style="left:642px;top:354px;width:1px;height:11px;background:#000;" class="r"></div>
<div style="left:667px;top:354px;width:1px;height:6px;background:#000;" class="r"></div>
<div style="left:692px;top:354px;width:1px;height:11px;background:#000;" class="r"></div>
<div style="left:717px;top:354px;width:1px;height:6px;background:#000;" class="r"></div>
<div style="left:742px;top:354px;width:1px;height:11px;background:#000;" class="r"></div>
<div class="t" style="top:366.80px;font-size:8.5px;font-weight:normal;color:#000;left:436.33px;transform:scaleX(1.097);-webkit-text-stroke:0.25px #000;">21:40</div>
<div class="t" style="top:366.80px;font-size:8.5px;font-weight:normal;color:#000;left:486.63px;transform:scaleX(1.097);-webkit-text-stroke:0.25px #000;">22:00</div>
<div class="t" style="top:366.80px;font-size:8.5px;font-weight:normal;color:#000;left:536.93px;transform:scaleX(1.097);-webkit-text-stroke:0.25px #000;">22:20</div>
<div class="t" style="top:366.80px;font-size:8.5px;font-weight:normal;color:#000;left:587.23px;transform:scaleX(1.097);-webkit-text-stroke:0.25px #000;">22:40</div>
<div class="t" style="top:366.80px;font-size:8.5px;font-weight:normal;color:#000;left:637.53px;transform:scaleX(1.097);-webkit-text-stroke:0.25px #000;">23:00</div>
<div class="t" style="top:366.80px;font-size:8.5px;font-weight:normal;color:#000;left:687.83px;transform:scaleX(1.097);-webkit-text-stroke:0.25px #000;">23:20</div>
<div class="t" style="top:366.80px;font-size:8.5px;font-weight:normal;color:#000;left:738.13px;transform:scaleX(1.097);-webkit-text-stroke:0.25px #000;">23:40</div>
<div class="t" style="top:388.96px;font-size:9.5px;font-weight:normal;color:#000;left:405.75px;transform:scaleX(1.179);-webkit-text-stroke:0.25px #000;">Alt (1000ft MSL)</div>
<div class="t" style="top:388.53px;font-size:10px;font-weight:normal;color:#000;left:736.06px;transform:scaleX(1.108);-webkit-text-stroke:0.25px #000;">Temp(K)</div>
<div style="left:441px;top:399px;width:302px;height:133px;background:#000;" class="r"></div>
<div style="left:436px;top:401px;width:5px;height:1px;background:#000;" class="r"></div>
<div class="t" style="top:397.30px;font-size:8.5px;font-weight:normal;color:#000;right:564.46px;-webkit-text-stroke:0.25px #000;">34</div>
<div style="left:436px;top:433px;width:5px;height:1px;background:#000;" class="r"></div>
<div class="t" style="top:429.40px;font-size:8.5px;font-weight:normal;color:#000;right:564.46px;-webkit-text-stroke:0.25px #000;">25.5</div>
<div style="left:436px;top:467px;width:5px;height:1px;background:#000;" class="r"></div>
<div class="t" style="top:463.20px;font-size:8.5px;font-weight:normal;color:#000;right:564.46px;-webkit-text-stroke:0.25px #000;">17</div>
<div style="left:436px;top:501px;width:5px;height:1px;background:#000;" class="r"></div>
<div class="t" style="top:497.20px;font-size:8.5px;font-weight:normal;color:#000;right:564.46px;-webkit-text-stroke:0.25px #000;">8.5</div>
<div style="left:436px;top:532px;width:5px;height:1px;background:#000;" class="r"></div>
<div class="t" style="top:525.80px;font-size:8.5px;font-weight:normal;color:#000;right:564.46px;-webkit-text-stroke:0.25px #000;">0</div>
<div class="r" style="left:441px;top:401px;width:2px;height:127px;background:linear-gradient(rgb(0,23,255) 0.0%,rgb(0,57,255) 16.5%,rgb(0,107,255) 26.5%,rgb(0,177,255) 36.2%,rgb(0,252,255) 43.7%,rgb(57,255,197) 55.1%,rgb(147,255,107) 66.7%,rgb(207,255,47) 78.0%,rgb(252,255,2) 84.0%,rgb(255,192,0) 91.2%,rgb(255,132,0) 98.4%,rgb(255,127,0) 100.0%)"></div>
<div class="r" style="left:443px;top:401px;width:3px;height:127px;background:linear-gradient(rgb(0,29,255) 0.0%,rgb(0,64,255) 16.5%,rgb(0,114,255) 26.5%,rgb(0,183,255) 36.2%,rgb(3,255,251) 43.7%,rgb(64,255,190) 55.1%,rgb(153,255,101) 66.7%,rgb(213,255,41) 78.0%,rgb(255,251,0) 84.0%,rgb(255,185,0) 91.2%,rgb(255,126,0) 98.4%,rgb(255,121,0) 100.0%)"></div>
<div class="r" style="left:446px;top:401px;width:3px;height:127px;background:linear-gradient(rgb(0,35,255) 0.0%,rgb(0,69,255) 16.5%,rgb(0,119,255) 26.5%,rgb(0,189,255) 36.2%,rgb(9,255,245) 43.7%,rgb(69,255,185) 55.1%,rgb(159,255,95) 66.7%,rgb(219,255,35) 78.0%,rgb(255,245,0) 84.0%,rgb(255,179,0) 91.2%,rgb(255,120,0) 98.4%,rgb(255,115,0) 100.0%)"></div>
<div class="r" style="left:449px;top:401px;width:3px;height:127px;background:linear-gradient(rgb(0,34,255) 0.0%,rgb(0,68,255) 16.5%,rgb(0,118,255) 26.5%,rgb(0,188,255) 36.2%,rgb(8,255,246) 43.7%,rgb(68,255,186) 55.1%,rgb(158,255,96) 66.7%,rgb(218,255,36) 78.0%,rgb(255,246,0) 84.0%,rgb(255,180,0) 91.2%,rgb(255,121,0) 98.4%,rgb(255,116,0) 100.0%)"></div>
<div class="r" style="left:452px;top:401px;width:2px;height:127px;background:linear-gradient(rgb(0,25,255) 0.0%,rgb(0,60,255) 16.5%,rgb(0,110,255) 26.5%,rgb(0,179,255) 36.2%,rgb(0,255,254) 43.7%,rgb(60,255,194) 55.1%,rgb(150,255,104) 66.7%,rgb(210,255,44) 78.0%,rgb(255,254,0) 84.0%,rgb(255,189,0) 91.2%,rgb(255,130,0) 98.4%,rgb(255,125,0) 100.0%)"></div>
<div class="r" style="left:454px;top:401px;width:2px;height:127px;background:linear-gradient(rgb(0,33,255) 0.0%,rgb(0,68,255) 16.5%,rgb(0,118,255) 26.5%,rgb(0,187,255) 36.2%,rgb(8,255,246) 43.7%,rgb(68,255,186) 55.1%,rgb(158,255,96) 66.7%,rgb(218,255,36) 78.0%,rgb(255,246,0) 84.0%,rgb(255,181,0) 91.2%,rgb(255,122,0) 98.4%,rgb(255,117,0) 100.0%)"></div>
<div class="r" style="left:456px;top:401px;width:1px;height:127px;background:linear-gradient(rgb(0,21,255) 0.0%,rgb(0,56,255) 16.5%,rgb(0,106,255) 26.5%,rgb(0,175,255) 36.2%,rgb(0,251,255) 43.7%,rgb(56,255,198) 55.1%,rgb(146,255,108) 66.7%,rgb(206,255,48) 78.0%,rgb(251,255,3) 84.0%,rgb(255,193,0) 91.2%,rgb(255,134,0) 98.4%,rgb(255,129,0) 100.0%)"></div>
<div class="r" style="left:457px;top:401px;width:3px;height:127px;background:linear-gradient(rgb(0,13,255) 0.0%,rgb(0,47,255) 16.5%,rgb(0,97,255) 26.5%,rgb(0,167,255) 36.2%,rgb(0,242,255) 43.7%,rgb(47,255,207) 55.1%,rgb(137,255,117) 66.7%,rgb(197,255,57) 78.0%,rgb(242,255,12) 84.0%,rgb(255,202,0) 91.2%,rgb(255,142,0) 98.4%,rgb(255,137,0) 100.0%)"></div>
<div class="r" style="left:460px;top:401px;width:2px;height:127px;background:linear-gradient(rgb(0,37,255) 0.0%,rgb(0,72,255) 16.5%,rgb(0,122,255) 26.5%,rgb(0,191,255) 36.2%,rgb(12,255,242) 43.7%,rgb(72,255,182) 55.1%,rgb(161,255,93) 66.7%,rgb(222,255,32) 78.0%,rgb(255,242,0) 84.0%,rgb(255,177,0) 91.2%,rgb(255,118,0) 98.4%,rgb(255,113,0) 100.0%)"></div>
<div class="r" style="left:462px;top:401px;width:1px;height:127px;background:linear-gradient(rgb(0,23,255) 0.0%,rgb(0,58,255) 16.5%,rgb(0,108,255) 26.5%,rgb(0,177,255) 36.2%,rgb(0,253,255) 43.7%,rgb(58,255,196) 55.1%,rgb(148,255,106) 66.7%,rgb(208,255,46) 78.0%,rgb(253,255,1) 84.0%,rgb(255,191,0) 91.2%,rgb(255,132,0) 98.4%,rgb(255,127,0) 100.0%)"></div>
<div class="r" style="left:463px;top:401px;width:3px;height:127px;background:linear-gradient(rgb(0,28,255) 0.0%,rgb(0,63,255) 16.5%,rgb(0,113,255) 26.5%,rgb(0,182,255) 36.2%,rgb(3,255,251) 43.7%,rgb(63,255,191) 55.1%,rgb(153,255,101) 66.7%,rgb(213,255,41) 78.0%,rgb(255,251,0) 84.0%,rgb(255,186,0) 91.2%,rgb(255,127,0) 98.4%,rgb(255,122,0) 100.0%)"></div>
<div class="r" style="left:466px;top:401px;width:1px;height:127px;background:linear-gradient(rgb(0,38,255) 0.0%,rgb(0,73,255) 16.5%,rgb(0,123,255) 26.5%,rgb(0,192,255) 36.2%,rgb(13,255,241) 43.7%,rgb(73,255,181) 55.1%,rgb(162,255,92) 66.7%,rgb(223,255,31) 78.0%,rgb(255,241,0) 84.0%,rgb(255,176,0) 91.2%,rgb(255,117,0) 98.4%,rgb(255,112,0) 100.0%)"></div>
<div class="r" style="left:467px;top:401px;width:3px;height:127px;background:linear-gradient(rgb(0,31,255) 0.0%,rgb(0,65,255) 16.5%,rgb(0,115,255) 26.5%,rgb(0,185,255) 36.2%,rgb(5,255,249) 43.7%,rgb(65,255,189) 55.1%,rgb(155,255,99) 66.7%,rgb(215,255,39) 78.0%,rgb(255,249,0) 84.0%,rgb(255,184,0) 91.2%,rgb(255,125,0) 98.4%,rgb(255,119,0) 100.0%)"></div>
<div class="r" style="left:470px;top:401px;width:2px;height:127px;background:linear-gradient(rgb(0,11,255) 0.0%,rgb(0,46,255) 16.5%,rgb(0,96,255) 26.5%,rgb(0,165,255) 36.2%,rgb(0,241,255) 43.7%,rgb(46,255,208) 55.1%,rgb(136,255,118) 66.7%,rgb(196,255,58) 78.0%,rgb(241,255,13) 84.0%,rgb(255,203,0) 91.2%,rgb(255,144,0) 98.4%,rgb(255,139,0) 100.0%)"></div>
<div class="r" style="left:472px;top:401px;width:1px;height:127px;background:linear-gradient(rgb(0,14,255) 0.0%,rgb(0,49,255) 16.5%,rgb(0,99,255) 26.5%,rgb(0,168,255) 36.2%,rgb(0,244,255) 43.7%,rgb(49,255,205) 55.1%,rgb(139,255,115) 66.7%,rgb(199,255,55) 78.0%,rgb(244,255,10) 84.0%,rgb(255,200,0) 91.2%,rgb(255,141,0) 98.4%,rgb(255,136,0) 100.0%)"></div>
<div class="r" style="left:473px;top:401px;width:1px;height:127px;background:linear-gradient(rgb(0,24,255) 0.0%,rgb(0,58,255) 16.5%,rgb(0,108,255) 26.5%,rgb(0,178,255) 36.2%,rgb(0,253,255) 43.7%,rgb(58,255,196) 55.1%,rgb(148,255,106) 66.7%,rgb(208,255,46) 78.0%,rgb(253,255,1) 84.0%,rgb(255,191,0) 91.2%,rgb(255,131,0) 98.4%,rgb(255,126,0) 100.0%)"></div>
<div class="r" style="left:474px;top:401px;width:2px;height:127px;background:linear-gradient(rgb(0,22,255) 0.0%,rgb(0,57,255) 16.5%,rgb(0,107,255) 26.5%,rgb(0,176,255) 36.2%,rgb(0,252,255) 43.7%,rgb(57,255,197) 55.1%,rgb(147,255,107) 66.7%,rgb(207,255,47) 78.0%,rgb(252,255,2) 84.0%,rgb(255,192,0) 91.2%,rgb(255,133,0) 98.4%,rgb(255,128,0) 100.0%)"></div>
<div class="r" style="left:476px;top:401px;width:2px;height:127px;background:linear-gradient(rgb(0,16,255) 0.0%,rgb(0,51,255) 16.5%,rgb(0,101,255) 26.5%,rgb(0,170,255) 36.2%,rgb(0,246,255) 43.7%,rgb(51,255,203) 55.1%,rgb(140,255,114) 66.7%,rgb(201,255,53) 78.0%,rgb(246,255,8) 84.0%,rgb(255,198,0) 91.2%,rgb(255,139,0) 98.4%,rgb(255,134,0) 100.0%)"></div>
<div class="r" style="left:478px;top:401px;width:1px;height:127px;background:linear-gradient(rgb(0,24,255) 0.0%,rgb(0,59,255) 16.5%,rgb(0,109,255) 26.5%,rgb(0,178,255) 36.2%,rgb(0,254,255) 43.7%,rgb(59,255,195) 55.1%,rgb(149,255,105) 66.7%,rgb(209,255,45) 78.0%,rgb(254,255,0) 84.0%,rgb(255,190,0) 91.2%,rgb(255,131,0) 98.4%,rgb(255,126,0) 100.0%)"></div>
<div class="r" style="left:479px;top:401px;width:2px;height:127px;background:linear-gradient(rgb(0,13,255) 0.0%,rgb(0,48,255) 16.5%,rgb(0,98,255) 26.5%,rgb(0,167,255) 36.2%,rgb(0,242,255) 43.7%,rgb(48,255,206) 55.1%,rgb(137,255,117) 66.7%,rgb(197,255,57) 78.0%,rgb(242,255,12) 84.0%,rgb(255,201,0) 91.2%,rgb(255,142,0) 98.4%,rgb(255,137,0) 100.0%)"></div>
<div class="r" style="left:481px;top:401px;width:2px;height:127px;background:linear-gradient(rgb(0,17,255) 0.0%,rgb(0,51,255) 16.5%,rgb(0,101,255) 26.5%,rgb(0,171,255) 36.2%,rgb(0,246,255) 43.7%,rgb(51,255,203) 55.1%,rgb(141,255,113) 66.7%,rgb(201,255,53) 78.0%,rgb(246,255,8) 84.0%,rgb(255,198,0) 91.2%,rgb(255,138,0) 98.4%,rgb(255,133,0) 100.0%)"></div>
<div class="r" style="left:483px;top:401px;width:1px;height:127px;background:linear-gradient(rgb(0,14,255) 0.0%,rgb(0,49,255) 16.5%,rgb(0,99,255) 26.5%,rgb(0,168,255) 36.2%,rgb(0,244,255) 43.7%,rgb(49,255,205) 55.1%,rgb(139,255,115) 66.7%,rgb(199,255,55) 78.0%,rgb(244,255,10) 84.0%,rgb(255,200,0) 91.2%,rgb(255,141,0) 98.4%,rgb(255,136,0) 100.0%)"></div>
<div class="r" style="left:484px;top:401px;width:3px;height:127px;background:linear-gradient(rgb(0,27,255) 0.0%,rgb(0,61,255) 16.5%,rgb(0,111,255) 26.5%,rgb(0,181,255) 36.2%,rgb(1,255,253) 43.7%,rgb(61,255,193) 55.1%,rgb(151,255,103) 66.7%,rgb(211,255,43) 78.0%,rgb(255,253,0) 84.0%,rgb(255,188,0) 91.2%,rgb(255,128,0) 98.4%,rgb(255,123,0) 100.0%)"></div>
<div class="r" style="left:487px;top:401px;width:3px;height:127px;background:linear-gradient(rgb(0,16,255) 0.0%,rgb(0,51,255) 16.5%,rgb(0,101,255) 26.5%,rgb(0,170,255) 36.2%,rgb(0,246,255) 43.7%,rgb(51,255,203) 55.1%,rgb(141,255,113) 66.7%,rgb(201,255,53) 78.0%,rgb(246,255,8) 84.0%,rgb(255,198,0) 91.2%,rgb(255,139,0) 98.4%,rgb(255,133,0) 100.0%)"></div>
<div class="r" style="left:490px;top:401px;width:2px;height:127px;background:linear-gradient(rgb(0,36,255) 0.0%,rgb(0,71,255) 16.5%,rgb(0,121,255) 26.5%,rgb(0,190,255) 36.2%,rgb(11,255,243) 43.7%,rgb(71,255,183) 55.1%,rgb(161,255,93) 66.7%,rgb(221,255,33) 78.0%,rgb(255,243,0) 84.0%,rgb(255,178,0) 91.2%,rgb(255,119,0) 98.4%,rgb(255,114,0) 100.0%)"></div>
<div class="r" style="left:492px;top:401px;width:3px;height:127px;background:linear-gradient(rgb(0,19,255) 0.0%,rgb(0,54,255) 16.5%,rgb(0,104,255) 26.5%,rgb(0,173,255) 36.2%,rgb(0,249,255) 43.7%,rgb(54,255,200) 55.1%,rgb(143,255,111) 66.7%,rgb(204,255,50) 78.0%,rgb(249,255,5) 84.0%,rgb(255,195,0) 91.2%,rgb(255,136,0) 98.4%,rgb(255,131,0) 100.0%)"></div>
<div class="r" style="left:495px;top:401px;width:3px;height:127px;background:linear-gradient(rgb(0,25,255) 0.0%,rgb(0,60,255) 16.5%,rgb(0,110,255) 26.5%,rgb(0,179,255) 36.2%,rgb(0,255,254) 43.7%,rgb(60,255,194) 55.1%,rgb(149,255,105) 66.7%,rgb(210,255,44) 78.0%,rgb(255,254,0) 84.0%,rgb(255,189,0) 91.2%,rgb(255,130,0) 98.4%,rgb(255,125,0) 100.0%)"></div>
<div class="r" style="left:498px;top:401px;width:2px;height:127px;background:linear-gradient(rgb(0,39,255) 0.0%,rgb(0,74,255) 16.5%,rgb(0,124,255) 26.5%,rgb(0,193,255) 36.2%,rgb(14,255,240) 43.7%,rgb(74,255,180) 55.1%,rgb(164,255,90) 66.7%,rgb(224,255,30) 78.0%,rgb(255,240,0) 84.0%,rgb(255,175,0) 91.2%,rgb(255,116,0) 98.4%,rgb(255,111,0) 100.0%)"></div>
<div class="r" style="left:500px;top:401px;width:3px;height:127px;background:linear-gradient(rgb(0,18,255) 0.0%,rgb(0,53,255) 16.5%,rgb(0,103,255) 26.5%,rgb(0,172,255) 36.2%,rgb(0,248,255) 43.7%,rgb(53,255,201) 55.1%,rgb(143,255,111) 66.7%,rgb(203,255,51) 78.0%,rgb(248,255,6) 84.0%,rgb(255,196,0) 91.2%,rgb(255,137,0) 98.4%,rgb(255,132,0) 100.0%)"></div>
<div class="r" style="left:503px;top:401px;width:1px;height:127px;background:linear-gradient(rgb(0,15,255) 0.0%,rgb(0,50,255) 16.5%,rgb(0,100,255) 26.5%,rgb(0,169,255) 36.2%,rgb(0,245,255) 43.7%,rgb(50,255,204) 55.1%,rgb(140,255,114) 66.7%,rgb(200,255,54) 78.0%,rgb(245,255,9) 84.0%,rgb(255,199,0) 91.2%,rgb(255,140,0) 98.4%,rgb(255,135,0) 100.0%)"></div>
<div class="r" style="left:504px;top:401px;width:3px;height:127px;background:linear-gradient(rgb(0,11,255) 0.0%,rgb(0,45,255) 16.5%,rgb(0,95,255) 26.5%,rgb(0,165,255) 36.2%,rgb(0,240,255) 43.7%,rgb(45,255,209) 55.1%,rgb(135,255,119) 66.7%,rgb(195,255,59) 78.0%,rgb(240,255,14) 84.0%,rgb(255,203,0) 91.2%,rgb(255,144,0) 98.4%,rgb(255,139,0) 100.0%)"></div>
<div class="r" style="left:507px;top:401px;width:1px;height:127px;background:linear-gradient(rgb(0,26,255) 0.0%,rgb(0,61,255) 16.5%,rgb(0,111,255) 26.5%,rgb(0,180,255) 36.2%,rgb(1,255,253) 43.7%,rgb(61,255,193) 55.1%,rgb(151,255,103) 66.7%,rgb(211,255,43) 78.0%,rgb(255,253,0) 84.0%,rgb(255,188,0) 91.2%,rgb(255,129,0) 98.4%,rgb(255,124,0) 100.0%)"></div>
<div class="r" style="left:508px;top:401px;width:2px;height:127px;background:linear-gradient(rgb(0,27,255) 0.0%,rgb(0,62,255) 16.5%,rgb(0,112,255) 26.5%,rgb(0,181,255) 36.2%,rgb(2,255,252) 43.7%,rgb(62,255,192) 55.1%,rgb(151,255,103) 66.7%,rgb(212,255,42) 78.0%,rgb(255,252,0) 84.0%,rgb(255,187,0) 91.2%,rgb(255,128,0) 98.4%,rgb(255,123,0) 100.0%)"></div>
<div class="r" style="left:510px;top:401px;width:2px;height:127px;background:linear-gradient(rgb(0,27,255) 0.0%,rgb(0,61,255) 16.5%,rgb(0,111,255) 26.5%,rgb(0,181,255) 36.2%,rgb(1,255,253) 43.7%,rgb(61,255,193) 55.1%,rgb(151,255,103) 66.7%,rgb(211,255,43) 78.0%,rgb(255,253,0) 84.0%,rgb(255,188,0) 91.2%,rgb(255,128,0) 98.4%,rgb(255,123,0) 100.0%)"></div>
<div class="r" style="left:512px;top:401px;width:1px;height:127px;background:linear-gradient(rgb(0,16,255) 0.0%,rgb(0,51,255) 16.5%,rgb(0,101,255) 26.5%,rgb(0,170,255) 36.2%,rgb(0,245,255) 43.7%,rgb(51,255,203) 55.1%,rgb(140,255,114) 66.7%,rgb(201,255,53) 78.0%,rgb(245,255,9) 84.0%,rgb(255,198,0) 91.2%,rgb(255,139,0) 98.4%,rgb(255,134,0) 100.0%)"></div>
<div class="r" style="left:513px;top:401px;width:2px;height:127px;background:linear-gradient(rgb(0,29,255) 0.0%,rgb(0,63,255) 16.5%,rgb(0,113,255) 26.5%,rgb(0,183,255) 36.2%,rgb(3,255,251) 43.7%,rgb(63,255,191) 55.1%,rgb(153,255,101) 66.7%,rgb(213,255,41) 78.0%,rgb(255,251,0) 84.0%,rgb(255,186,0) 91.2%,rgb(255,126,0) 98.4%,rgb(255,121,0) 100.0%)"></div>
<div class="r" style="left:515px;top:401px;width:2px;height:127px;background:linear-gradient(rgb(0,21,255) 0.0%,rgb(0,55,255) 16.5%,rgb(0,105,255) 26.5%,rgb(0,175,255) 36.2%,rgb(0,250,255) 43.7%,rgb(55,255,199) 55.1%,rgb(145,255,109) 66.7%,rgb(205,255,49) 78.0%,rgb(250,255,4) 84.0%,rgb(255,194,0) 91.2%,rgb(255,134,0) 98.4%,rgb(255,129,0) 100.0%)"></div>
<div class="r" style="left:517px;top:401px;width:2px;height:127px;background:linear-gradient(rgb(0,18,255) 0.0%,rgb(0,52,255) 16.5%,rgb(0,102,255) 26.5%,rgb(0,172,255) 36.2%,rgb(0,247,255) 43.7%,rgb(52,255,202) 55.1%,rgb(142,255,112) 66.7%,rgb(202,255,52) 78.0%,rgb(247,255,7) 84.0%,rgb(255,196,0) 91.2%,rgb(255,137,0) 98.4%,rgb(255,132,0) 100.0%)"></div>
<div class="r" style="left:519px;top:401px;width:2px;height:127px;background:linear-gradient(rgb(0,13,255) 0.0%,rgb(0,47,255) 16.5%,rgb(0,97,255) 26.5%,rgb(0,167,255) 36.2%,rgb(0,242,255) 43.7%,rgb(47,255,207) 55.1%,rgb(137,255,117) 66.7%,rgb(197,255,57) 78.0%,rgb(242,255,12) 84.0%,rgb(255,202,0) 91.2%,rgb(255,142,0) 98.4%,rgb(255,137,0) 100.0%)"></div>
<div class="r" style="left:521px;top:401px;width:2px;height:127px;background:linear-gradient(rgb(0,33,255) 0.0%,rgb(0,68,255) 16.5%,rgb(0,118,255) 26.5%,rgb(0,187,255) 36.2%,rgb(7,255,247) 43.7%,rgb(68,255,186) 55.1%,rgb(157,255,97) 66.7%,rgb(218,255,36) 78.0%,rgb(255,247,0) 84.0%,rgb(255,181,0) 91.2%,rgb(255,122,0) 98.4%,rgb(255,117,0) 100.0%)"></div>
<div class="r" style="left:523px;top:401px;width:2px;height:127px;background:linear-gradient(rgb(0,15,255) 0.0%,rgb(0,50,255) 16.5%,rgb(0,100,255) 26.5%,rgb(0,169,255) 36.2%,rgb(0,245,255) 43.7%,rgb(50,255,204) 55.1%,rgb(140,255,114) 66.7%,rgb(200,255,54) 78.0%,rgb(245,255,9) 84.0%,rgb(255,199,0) 91.2%,rgb(255,140,0) 98.4%,rgb(255,135,0) 100.0%)"></div>
<div class="r" style="left:525px;top:401px;width:1px;height:127px;background:linear-gradient(rgb(0,30,255) 0.0%,rgb(0,65,255) 16.5%,rgb(0,115,255) 26.5%,rgb(0,184,255) 36.2%,rgb(5,255,249) 43.7%,rgb(65,255,189) 55.1%,rgb(154,255,100) 66.7%,rgb(215,255,39) 78.0%,rgb(255,249,0) 84.0%,rgb(255,184,0) 91.2%,rgb(255,125,0) 98.4%,rgb(255,120,0) 100.0%)"></div>
<div class="r" style="left:526px;top:401px;width:2px;height:127px;background:linear-gradient(rgb(0,22,255) 0.0%,rgb(0,57,255) 16.5%,rgb(0,107,255) 26.5%,rgb(0,176,255) 36.2%,rgb(0,252,255) 43.7%,rgb(57,255,197) 55.1%,rgb(147,255,107) 66.7%,rgb(207,255,47) 78.0%,rgb(252,255,2) 84.0%,rgb(255,192,0) 91.2%,rgb(255,133,0) 98.4%,rgb(255,128,0) 100.0%)"></div>
<div class="r" style="left:528px;top:401px;width:2px;height:127px;background:linear-gradient(rgb(0,38,255) 0.0%,rgb(0,73,255) 16.5%,rgb(0,123,255) 26.5%,rgb(0,192,255) 36.2%,rgb(13,255,241) 43.7%,rgb(73,255,181) 55.1%,rgb(163,255,91) 66.7%,rgb(223,255,31) 78.0%,rgb(255,241,0) 84.0%,rgb(255,176,0) 91.2%,rgb(255,117,0) 98.4%,rgb(255,112,0) 100.0%)"></div>
<div class="r" style="left:530px;top:401px;width:1px;height:127px;background:linear-gradient(rgb(0,36,255) 0.0%,rgb(0,71,255) 16.5%,rgb(0,121,255) 26.5%,rgb(0,190,255) 36.2%,rgb(10,255,244) 43.7%,rgb(71,255,183) 55.1%,rgb(160,255,94) 66.7%,rgb(221,255,33) 78.0%,rgb(255,244,0) 84.0%,rgb(255,178,0) 91.2%,rgb(255,119,0) 98.4%,rgb(255,114,0) 100.0%)"></div>
<div class="r" style="left:531px;top:401px;width:3px;height:127px;background:linear-gradient(rgb(0,25,255) 0.0%,rgb(0,60,255) 16.5%,rgb(0,110,255) 26.5%,rgb(0,179,255) 36.2%,rgb(0,255,254) 43.7%,rgb(60,255,194) 55.1%,rgb(150,255,104) 66.7%,rgb(210,255,44) 78.0%,rgb(255,254,0) 84.0%,rgb(255,189,0) 91.2%,rgb(255,130,0) 98.4%,rgb(255,125,0) 100.0%)"></div>
<div class="r" style="left:534px;top:401px;width:2px;height:127px;background:linear-gradient(rgb(0,37,255) 0.0%,rgb(0,72,255) 16.5%,rgb(0,122,255) 26.5%,rgb(0,191,255) 36.2%,rgb(12,255,242) 43.7%,rgb(72,255,182) 55.1%,rgb(162,255,92) 66.7%,rgb(222,255,32) 78.0%,rgb(255,242,0) 84.0%,rgb(255,177,0) 91.2%,rgb(255,118,0) 98.4%,rgb(255,112,0) 100.0%)"></div>
<div class="r" style="left:536px;top:401px;width:2px;height:127px;background:linear-gradient(rgb(0,15,255) 0.0%,rgb(0,50,255) 16.5%,rgb(0,100,255) 26.5%,rgb(0,169,255) 36.2%,rgb(0,245,255) 43.7%,rgb(50,255,204) 55.1%,rgb(140,255,114) 66.7%,rgb(200,255,54) 78.0%,rgb(245,255,9) 84.0%,rgb(255,199,0) 91.2%,rgb(255,140,0) 98.4%,rgb(255,135,0) 100.0%)"></div>
<div class="r" style="left:538px;top:401px;width:1px;height:127px;background:linear-gradient(rgb(0,23,255) 0.0%,rgb(0,58,255) 16.5%,rgb(0,108,255) 26.5%,rgb(0,177,255) 36.2%,rgb(0,253,255) 43.7%,rgb(58,255,196) 55.1%,rgb(148,255,106) 66.7%,rgb(208,255,46) 78.0%,rgb(253,255,1) 84.0%,rgb(255,191,0) 91.2%,rgb(255,132,0) 98.4%,rgb(255,127,0) 100.0%)"></div>
<div class="r" style="left:539px;top:401px;width:3px;height:127px;background:linear-gradient(rgb(0,33,255) 0.0%,rgb(0,68,255) 16.5%,rgb(0,117,255) 26.5%,rgb(0,187,255) 36.2%,rgb(7,255,247) 43.7%,rgb(68,255,186) 55.1%,rgb(157,255,97) 66.7%,rgb(217,255,37) 78.0%,rgb(255,247,0) 84.0%,rgb(255,181,0) 91.2%,rgb(255,122,0) 98.4%,rgb(255,117,0) 100.0%)"></div>
<div class="r" style="left:542px;top:401px;width:3px;height:127px;background:linear-gradient(rgb(0,12,255) 0.0%,rgb(0,47,255) 16.5%,rgb(0,97,255) 26.5%,rgb(0,166,255) 36.2%,rgb(0,242,255) 43.7%,rgb(47,255,207) 55.1%,rgb(137,255,117) 66.7%,rgb(197,255,57) 78.0%,rgb(242,255,12) 84.0%,rgb(255,202,0) 91.2%,rgb(255,143,0) 98.4%,rgb(255,138,0) 100.0%)"></div>
<div class="r" style="left:545px;top:401px;width:2px;height:127px;background:linear-gradient(rgb(0,12,255) 0.0%,rgb(0,47,255) 16.5%,rgb(0,97,255) 26.5%,rgb(0,166,255) 36.2%,rgb(0,242,255) 43.7%,rgb(47,255,207) 55.1%,rgb(137,255,117) 66.7%,rgb(197,255,57) 78.0%,rgb(242,255,12) 84.0%,rgb(255,202,0) 91.2%,rgb(255,143,0) 98.4%,rgb(255,138,0) 100.0%)"></div>
<div class="r" style="left:547px;top:401px;width:2px;height:127px;background:linear-gradient(rgb(0,30,255) 0.0%,rgb(0,64,255) 16.5%,rgb(0,114,255) 26.5%,rgb(0,184,255) 36.2%,rgb(4,255,250) 43.7%,rgb(64,255,190) 55.1%,rgb(154,255,100) 66.7%,rgb(214,255,40) 78.0%,rgb(255,250,0) 84.0%,rgb(255,185,0) 91.2%,rgb(255,126,0) 98.4%,rgb(255,120,0) 100.0%)"></div>
<div class="r" style="left:549px;top:401px;width:1px;height:127px;background:linear-gradient(rgb(0,23,255) 0.0%,rgb(0,57,255) 16.5%,rgb(0,107,255) 26.5%,rgb(0,177,255) 36.2%,rgb(0,252,255) 43.7%,rgb(57,255,197) 55.1%,rgb(147,255,107) 66.7%,rgb(207,255,47) 78.0%,rgb(252,255,2) 84.0%,rgb(255,192,0) 91.2%,rgb(255,132,0) 98.4%,rgb(255,127,0) 100.0%)"></div>
<div class="r" style="left:550px;top:401px;width:2px;height:127px;background:linear-gradient(rgb(0,22,255) 0.0%,rgb(0,57,255) 16.5%,rgb(0,107,255) 26.5%,rgb(0,176,255) 36.2%,rgb(0,251,255) 43.7%,rgb(57,255,197) 55.1%,rgb(146,255,108) 66.7%,rgb(207,255,47) 78.0%,rgb(251,255,3) 84.0%,rgb(255,192,0) 91.2%,rgb(255,133,0) 98.4%,rgb(255,128,0) 100.0%)"></div>
<div class="r" style="left:552px;top:401px;width:2px;height:127px;background:linear-gradient(rgb(0,29,255) 0.0%,rgb(0,64,255) 16.5%,rgb(0,114,255) 26.5%,rgb(0,183,255) 36.2%,rgb(4,255,250) 43.7%,rgb(64,255,190) 55.1%,rgb(154,255,100) 66.7%,rgb(214,255,40) 78.0%,rgb(255,250,0) 84.0%,rgb(255,185,0) 91.2%,rgb(255,126,0) 98.4%,rgb(255,121,0) 100.0%)"></div>
<div class="r" style="left:554px;top:401px;width:2px;height:127px;background:linear-gradient(rgb(0,39,255) 0.0%,rgb(0,73,255) 16.5%,rgb(0,123,255) 26.5%,rgb(0,193,255) 36.2%,rgb(13,255,241) 43.7%,rgb(73,255,181) 55.1%,rgb(163,255,91) 66.7%,rgb(223,255,31) 78.0%,rgb(255,241,0) 84.0%,rgb(255,175,0) 91.2%,rgb(255,116,0) 98.4%,rgb(255,111,0) 100.0%)"></div>
<div class="r" style="left:556px;top:401px;width:3px;height:127px;background:linear-gradient(rgb(0,12,255) 0.0%,rgb(0,47,255) 16.5%,rgb(0,97,255) 26.5%,rgb(0,166,255) 36.2%,rgb(0,242,255) 43.7%,rgb(47,255,207) 55.1%,rgb(137,255,117) 66.7%,rgb(197,255,57) 78.0%,rgb(242,255,12) 84.0%,rgb(255,202,0) 91.2%,rgb(255,143,0) 98.4%,rgb(255,138,0) 100.0%)"></div>
<div class="r" style="left:559px;top:401px;width:2px;height:127px;background:linear-gradient(rgb(0,38,255) 0.0%,rgb(0,73,255) 16.5%,rgb(0,123,255) 26.5%,rgb(0,192,255) 36.2%,rgb(13,255,241) 43.7%,rgb(73,255,181) 55.1%,rgb(163,255,91) 66.7%,rgb(223,255,31) 78.0%,rgb(255,241,0) 84.0%,rgb(255,176,0) 91.2%,rgb(255,117,0) 98.4%,rgb(255,112,0) 100.0%)"></div>
<div class="r" style="left:561px;top:401px;width:3px;height:127px;background:linear-gradient(rgb(0,12,255) 0.0%,rgb(0,46,255) 16.5%,rgb(0,96,255) 26.5%,rgb(0,166,255) 36.2%,rgb(0,241,255) 43.7%,rgb(46,255,208) 55.1%,rgb(136,255,118) 66.7%,rgb(196,255,58) 78.0%,rgb(241,255,13) 84.0%,rgb(255,203,0) 91.2%,rgb(255,144,0) 98.4%,rgb(255,138,0) 100.0%)"></div>
<div class="r" style="left:564px;top:401px;width:2px;height:127px;background:linear-gradient(rgb(0,36,255) 0.0%,rgb(0,71,255) 16.5%,rgb(0,121,255) 26.5%,rgb(0,190,255) 36.2%,rgb(11,255,243) 43.7%,rgb(71,255,183) 55.1%,rgb(161,255,93) 66.7%,rgb(221,255,33) 78.0%,rgb(255,243,0) 84.0%,rgb(255,178,0) 91.2%,rgb(255,119,0) 98.4%,rgb(255,114,0) 100.0%)"></div>
<div class="r" style="left:566px;top:401px;width:2px;height:127px;background:linear-gradient(rgb(0,33,255) 0.0%,rgb(0,68,255) 16.5%,rgb(0,118,255) 26.5%,rgb(0,187,255) 36.2%,rgb(8,255,246) 43.7%,rgb(68,255,186) 55.1%,rgb(158,255,96) 66.7%,rgb(218,255,36) 78.0%,rgb(255,246,0) 84.0%,rgb(255,181,0) 91.2%,rgb(255,122,0) 98.4%,rgb(255,117,0) 100.0%)"></div>
<div class="r" style="left:568px;top:401px;width:2px;height:127px;background:linear-gradient(rgb(0,28,255) 0.0%,rgb(0,63,255) 16.5%,rgb(0,113,255) 26.5%,rgb(0,182,255) 36.2%,rgb(2,255,252) 43.7%,rgb(63,255,191) 55.1%,rgb(152,255,102) 66.7%,rgb(213,255,41) 78.0%,rgb(255,252,0) 84.0%,rgb(255,186,0) 91.2%,rgb(255,127,0) 98.4%,rgb(255,122,0) 100.0%)"></div>
<div class="r" style="left:570px;top:401px;width:3px;height:127px;background:linear-gradient(rgb(0,25,255) 0.0%,rgb(0,59,255) 16.5%,rgb(0,109,255) 26.5%,rgb(0,179,255) 36.2%,rgb(0,254,255) 43.7%,rgb(59,255,195) 55.1%,rgb(149,255,105) 66.7%,rgb(209,255,45) 78.0%,rgb(254,255,0) 84.0%,rgb(255,190,0) 91.2%,rgb(255,131,0) 98.4%,rgb(255,125,0) 100.0%)"></div>
<div class="r" style="left:573px;top:401px;width:3px;height:127px;background:linear-gradient(rgb(0,20,255) 0.0%,rgb(0,54,255) 16.5%,rgb(0,104,255) 26.5%,rgb(0,174,255) 36.2%,rgb(0,249,255) 43.7%,rgb(54,255,200) 55.1%,rgb(144,255,110) 66.7%,rgb(204,255,50) 78.0%,rgb(249,255,5) 84.0%,rgb(255,195,0) 91.2%,rgb(255,136,0) 98.4%,rgb(255,130,0) 100.0%)"></div>
<div class="r" style="left:576px;top:401px;width:2px;height:127px;background:linear-gradient(rgb(0,15,255) 0.0%,rgb(0,49,255) 16.5%,rgb(0,99,255) 26.5%,rgb(0,169,255) 36.2%,rgb(0,244,255) 43.7%,rgb(49,255,205) 55.1%,rgb(139,255,115) 66.7%,rgb(199,255,55) 78.0%,rgb(244,255,10) 84.0%,rgb(255,200,0) 91.2%,rgb(255,140,0) 98.4%,rgb(255,135,0) 100.0%)"></div>
<div class="r" style="left:578px;top:401px;width:1px;height:127px;background:linear-gradient(rgb(0,22,255) 0.0%,rgb(0,56,255) 16.5%,rgb(0,106,255) 26.5%,rgb(0,176,255) 36.2%,rgb(0,251,255) 43.7%,rgb(56,255,198) 55.1%,rgb(146,255,108) 66.7%,rgb(206,255,48) 78.0%,rgb(251,255,3) 84.0%,rgb(255,193,0) 91.2%,rgb(255,133,0) 98.4%,rgb(255,128,0) 100.0%)"></div>
<div class="r" style="left:579px;top:401px;width:2px;height:127px;background:linear-gradient(rgb(0,38,255) 0.0%,rgb(0,73,255) 16.5%,rgb(0,123,255) 26.5%,rgb(0,192,255) 36.2%,rgb(12,255,242) 43.7%,rgb(73,255,181) 55.1%,rgb(162,255,92) 66.7%,rgb(223,255,31) 78.0%,rgb(255,242,0) 84.0%,rgb(255,176,0) 91.2%,rgb(255,117,0) 98.4%,rgb(255,112,0) 100.0%)"></div>
<div class="r" style="left:581px;top:401px;width:1px;height:127px;background:linear-gradient(rgb(0,18,255) 0.0%,rgb(0,53,255) 16.5%,rgb(0,103,255) 26.5%,rgb(0,172,255) 36.2%,rgb(0,248,255) 43.7%,rgb(53,255,201) 55.1%,rgb(143,255,111) 66.7%,rgb(203,255,51) 78.0%,rgb(248,255,6) 84.0%,rgb(255,196,0) 91.2%,rgb(255,137,0) 98.4%,rgb(255,132,0) 100.0%)"></div>
<div class="r" style="left:582px;top:401px;width:2px;height:127px;background:linear-gradient(rgb(0,29,255) 0.0%,rgb(0,64,255) 16.5%,rgb(0,114,255) 26.5%,rgb(0,183,255) 36.2%,rgb(4,255,250) 43.7%,rgb(64,255,190) 55.1%,rgb(154,255,100) 66.7%,rgb(214,255,40) 78.0%,rgb(255,250,0) 84.0%,rgb(255,185,0) 91.2%,rgb(255,126,0) 98.4%,rgb(255,121,0) 100.0%)"></div>
<div class="r" style="left:584px;top:401px;width:3px;height:127px;background:linear-gradient(rgb(0,18,255) 0.0%,rgb(0,53,255) 16.5%,rgb(0,103,255) 26.5%,rgb(0,172,255) 36.2%,rgb(0,248,255) 43.7%,rgb(53,255,201) 55.1%,rgb(143,255,111) 66.7%,rgb(203,255,51) 78.0%,rgb(248,255,6) 84.0%,rgb(255,196,0) 91.2%,rgb(255,137,0) 98.4%,rgb(255,132,0) 100.0%)"></div>
<div class="r" style="left:587px;top:401px;width:3px;height:127px;background:linear-gradient(rgb(0,32,255) 0.0%,rgb(0,67,255) 16.5%,rgb(0,117,255) 26.5%,rgb(0,186,255) 36.2%,rgb(7,255,247) 43.7%,rgb(67,255,187) 55.1%,rgb(157,255,97) 66.7%,rgb(217,255,37) 78.0%,rgb(255,247,0) 84.0%,rgb(255,182,0) 91.2%,rgb(255,123,0) 98.4%,rgb(255,118,0) 100.0%)"></div>
<div class="r" style="left:590px;top:401px;width:2px;height:127px;background:linear-gradient(rgb(0,15,255) 0.0%,rgb(0,49,255) 16.5%,rgb(0,99,255) 26.5%,rgb(0,169,255) 36.2%,rgb(0,244,255) 43.7%,rgb(49,255,205) 55.1%,rgb(139,255,115) 66.7%,rgb(199,255,55) 78.0%,rgb(244,255,10) 84.0%,rgb(255,200,0) 91.2%,rgb(255,141,0) 98.4%,rgb(255,135,0) 100.0%)"></div>
<div class="r" style="left:592px;top:401px;width:1px;height:127px;background:linear-gradient(rgb(0,22,255) 0.0%,rgb(0,57,255) 16.5%,rgb(0,107,255) 26.5%,rgb(0,176,255) 36.2%,rgb(0,252,255) 43.7%,rgb(57,255,197) 55.1%,rgb(146,255,108) 66.7%,rgb(207,255,47) 78.0%,rgb(252,255,2) 84.0%,rgb(255,192,0) 91.2%,rgb(255,133,0) 98.4%,rgb(255,128,0) 100.0%)"></div>
<div class="r" style="left:593px;top:401px;width:2px;height:127px;background:linear-gradient(rgb(0,11,255) 0.0%,rgb(0,46,255) 16.5%,rgb(0,96,255) 26.5%,rgb(0,165,255) 36.2%,rgb(0,241,255) 43.7%,rgb(46,255,208) 55.1%,rgb(136,255,118) 66.7%,rgb(196,255,58) 78.0%,rgb(241,255,13) 84.0%,rgb(255,203,0) 91.2%,rgb(255,144,0) 98.4%,rgb(255,139,0) 100.0%)"></div>
<div class="r" style="left:595px;top:401px;width:3px;height:127px;background:linear-gradient(rgb(0,33,255) 0.0%,rgb(0,68,255) 16.5%,rgb(0,118,255) 26.5%,rgb(0,187,255) 36.2%,rgb(8,255,246) 43.7%,rgb(68,255,186) 55.1%,rgb(158,255,96) 66.7%,rgb(218,255,36) 78.0%,rgb(255,246,0) 84.0%,rgb(255,181,0) 91.2%,rgb(255,122,0) 98.4%,rgb(255,117,0) 100.0%)"></div>
<div class="r" style="left:598px;top:401px;width:1px;height:127px;background:linear-gradient(rgb(0,35,255) 0.0%,rgb(0,70,255) 16.5%,rgb(0,120,255) 26.5%,rgb(0,190,255) 36.2%,rgb(10,255,244) 43.7%,rgb(70,255,184) 55.1%,rgb(160,255,94) 66.7%,rgb(220,255,34) 78.0%,rgb(255,244,0) 84.0%,rgb(255,179,0) 91.2%,rgb(255,120,0) 98.4%,rgb(255,114,0) 100.0%)"></div>
<div class="r" style="left:599px;top:401px;width:2px;height:127px;background:linear-gradient(rgb(0,14,255) 0.0%,rgb(0,49,255) 16.5%,rgb(0,99,255) 26.5%,rgb(0,168,255) 36.2%,rgb(0,244,255) 43.7%,rgb(49,255,205) 55.1%,rgb(139,255,115) 66.7%,rgb(199,255,55) 78.0%,rgb(244,255,10) 84.0%,rgb(255,200,0) 91.2%,rgb(255,141,0) 98.4%,rgb(255,136,0) 100.0%)"></div>
<div class="r" style="left:601px;top:401px;width:2px;height:127px;background:linear-gradient(rgb(0,22,255) 0.0%,rgb(0,57,255) 16.5%,rgb(0,107,255) 26.5%,rgb(0,176,255) 36.2%,rgb(0,252,255) 43.7%,rgb(57,255,197) 55.1%,rgb(146,255,108) 66.7%,rgb(207,255,47) 78.0%,rgb(252,255,2) 84.0%,rgb(255,192,0) 91.2%,rgb(255,133,0) 98.4%,rgb(255,128,0) 100.0%)"></div>
<div class="r" style="left:603px;top:401px;width:2px;height:127px;background:linear-gradient(rgb(0,28,255) 0.0%,rgb(0,63,255) 16.5%,rgb(0,113,255) 26.5%,rgb(0,182,255) 36.2%,rgb(3,255,251) 43.7%,rgb(63,255,191) 55.1%,rgb(153,255,101) 66.7%,rgb(213,255,41) 78.0%,rgb(255,251,0) 84.0%,rgb(255,186,0) 91.2%,rgb(255,127,0) 98.4%,rgb(255,121,0) 100.0%)"></div>
<div class="r" style="left:605px;top:401px;width:2px;height:127px;background:linear-gradient(rgb(0,16,255) 0.0%,rgb(0,51,255) 16.5%,rgb(0,101,255) 26.5%,rgb(0,170,255) 36.2%,rgb(0,245,255) 43.7%,rgb(51,255,203) 55.1%,rgb(140,255,114) 66.7%,rgb(201,255,53) 78.0%,rgb(245,255,9) 84.0%,rgb(255,198,0) 91.2%,rgb(255,139,0) 98.4%,rgb(255,134,0) 100.0%)"></div>
<div class="r" style="left:607px;top:401px;width:3px;height:127px;background:linear-gradient(rgb(0,16,255) 0.0%,rgb(0,51,255) 16.5%,rgb(0,101,255) 26.5%,rgb(0,170,255) 36.2%,rgb(0,246,255) 43.7%,rgb(51,255,203) 55.1%,rgb(141,255,113) 66.7%,rgb(201,255,53) 78.0%,rgb(246,255,8) 84.0%,rgb(255,198,0) 91.2%,rgb(255,139,0) 98.4%,rgb(255,133,0) 100.0%)"></div>
<div class="r" style="left:610px;top:401px;width:1px;height:127px;background:linear-gradient(rgb(0,28,255) 0.0%,rgb(0,63,255) 16.5%,rgb(0,113,255) 26.5%,rgb(0,182,255) 36.2%,rgb(2,255,252) 43.7%,rgb(63,255,191) 55.1%,rgb(152,255,102) 66.7%,rgb(213,255,41) 78.0%,rgb(255,252,0) 84.0%,rgb(255,186,0) 91.2%,rgb(255,127,0) 98.4%,rgb(255,122,0) 100.0%)"></div>
<div class="r" style="left:611px;top:401px;width:1px;height:127px;background:linear-gradient(rgb(0,33,255) 0.0%,rgb(0,68,255) 16.5%,rgb(0,118,255) 26.5%,rgb(0,187,255) 36.2%,rgb(8,255,246) 43.7%,rgb(68,255,186) 55.1%,rgb(158,255,96) 66.7%,rgb(218,255,36) 78.0%,rgb(255,246,0) 84.0%,rgb(255,181,0) 91.2%,rgb(255,122,0) 98.4%,rgb(255,117,0) 100.0%)"></div>
<div class="r" style="left:612px;top:401px;width:1px;height:127px;background:linear-gradient(rgb(0,22,255) 0.0%,rgb(0,56,255) 16.5%,rgb(0,106,255) 26.5%,rgb(0,176,255) 36.2%,rgb(0,251,255) 43.7%,rgb(56,255,198) 55.1%,rgb(146,255,108) 66.7%,rgb(206,255,48) 78.0%,rgb(251,255,3) 84.0%,rgb(255,192,0) 91.2%,rgb(255,133,0) 98.4%,rgb(255,128,0) 100.0%)"></div>
<div class="r" style="left:613px;top:401px;width:1px;height:127px;background:linear-gradient(rgb(0,22,255) 0.0%,rgb(0,57,255) 16.5%,rgb(0,107,255) 26.5%,rgb(0,176,255) 36.2%,rgb(0,252,255) 43.7%,rgb(57,255,197) 55.1%,rgb(147,255,107) 66.7%,rgb(207,255,47) 78.0%,rgb(252,255,2) 84.0%,rgb(255,192,0) 91.2%,rgb(255,133,0) 98.4%,rgb(255,128,0) 100.0%)"></div>
<div class="r" style="left:614px;top:401px;width:2px;height:127px;background:linear-gradient(rgb(0,35,255) 0.0%,rgb(0,70,255) 16.5%,rgb(0,120,255) 26.5%,rgb(0,189,255) 36.2%,rgb(10,255,244) 43.7%,rgb(70,255,184) 55.1%,rgb(160,255,94) 66.7%,rgb(220,255,34) 78.0%,rgb(255,244,0) 84.0%,rgb(255,179,0) 91.2%,rgb(255,120,0) 98.4%,rgb(255,115,0) 100.0%)"></div>
<div class="r" style="left:616px;top:401px;width:2px;height:127px;background:linear-gradient(rgb(0,18,255) 0.0%,rgb(0,53,255) 16.5%,rgb(0,103,255) 26.5%,rgb(0,172,255) 36.2%,rgb(0,247,255) 43.7%,rgb(53,255,201) 55.1%,rgb(142,255,112) 66.7%,rgb(203,255,51) 78.0%,rgb(247,255,7) 84.0%,rgb(255,196,0) 91.2%,rgb(255,137,0) 98.4%,rgb(255,132,0) 100.0%)"></div>
<div class="r" style="left:618px;top:401px;width:2px;height:127px;background:linear-gradient(rgb(0,32,255) 0.0%,rgb(0,67,255) 16.5%,rgb(0,117,255) 26.5%,rgb(0,186,255) 36.2%,rgb(7,255,247) 43.7%,rgb(67,255,187) 55.1%,rgb(156,255,98) 66.7%,rgb(217,255,37) 78.0%,rgb(255,247,0) 84.0%,rgb(255,182,0) 91.2%,rgb(255,123,0) 98.4%,rgb(255,118,0) 100.0%)"></div>
<div class="r" style="left:620px;top:401px;width:2px;height:127px;background:linear-gradient(rgb(0,22,255) 0.0%,rgb(0,57,255) 16.5%,rgb(0,106,255) 26.5%,rgb(0,176,255) 36.2%,rgb(0,251,255) 43.7%,rgb(57,255,197) 55.1%,rgb(146,255,108) 66.7%,rgb(206,255,48) 78.0%,rgb(251,255,3) 84.0%,rgb(255,192,0) 91.2%,rgb(255,133,0) 98.4%,rgb(255,128,0) 100.0%)"></div>
<div class="r" style="left:622px;top:401px;width:2px;height:127px;background:linear-gradient(rgb(0,31,255) 0.0%,rgb(0,66,255) 16.5%,rgb(0,116,255) 26.5%,rgb(0,185,255) 36.2%,rgb(6,255,248) 43.7%,rgb(66,255,188) 55.1%,rgb(156,255,98) 66.7%,rgb(216,255,38) 78.0%,rgb(255,248,0) 84.0%,rgb(255,183,0) 91.2%,rgb(255,124,0) 98.4%,rgb(255,119,0) 100.0%)"></div>
<div class="r" style="left:624px;top:401px;width:2px;height:127px;background:linear-gradient(rgb(0,34,255) 0.0%,rgb(0,69,255) 16.5%,rgb(0,119,255) 26.5%,rgb(0,188,255) 36.2%,rgb(9,255,245) 43.7%,rgb(69,255,185) 55.1%,rgb(159,255,95) 66.7%,rgb(219,255,35) 78.0%,rgb(255,245,0) 84.0%,rgb(255,180,0) 91.2%,rgb(255,121,0) 98.4%,rgb(255,116,0) 100.0%)"></div>
<div class="r" style="left:626px;top:401px;width:3px;height:127px;background:linear-gradient(rgb(0,38,255) 0.0%,rgb(0,72,255) 16.5%,rgb(0,122,255) 26.5%,rgb(0,192,255) 36.2%,rgb(12,255,242) 43.7%,rgb(72,255,182) 55.1%,rgb(162,255,92) 66.7%,rgb(222,255,32) 78.0%,rgb(255,242,0) 84.0%,rgb(255,176,0) 91.2%,rgb(255,117,0) 98.4%,rgb(255,112,0) 100.0%)"></div>
<div class="r" style="left:629px;top:401px;width:1px;height:127px;background:linear-gradient(rgb(0,26,255) 0.0%,rgb(0,61,255) 16.5%,rgb(0,111,255) 26.5%,rgb(0,180,255) 36.2%,rgb(1,255,253) 43.7%,rgb(61,255,193) 55.1%,rgb(151,255,103) 66.7%,rgb(211,255,43) 78.0%,rgb(255,253,0) 84.0%,rgb(255,188,0) 91.2%,rgb(255,129,0) 98.4%,rgb(255,124,0) 100.0%)"></div>
<svg style="left:441px;top:399px" width="302" height="133" shape-rendering="crispEdges"><rect x="0" y="129" width="189" height="1" fill="#10e010"/><rect x="0" y="91" width="10" height="1" fill="#ff1010"/><rect x="10" y="93" width="3" height="1" fill="#ff1010"/><rect x="13" y="92" width="3" height="1" fill="#ff1010"/><rect x="16" y="93" width="3" height="1" fill="#ff1010"/><rect x="17" y="90" width="3" height="1" fill="#ff1010"/><rect x="20" y="92" width="3" height="1" fill="#ff1010"/><rect x="23" y="90" width="3" height="1" fill="#ff1010"/><rect x="25" y="92" width="4" height="1" fill="#ff1010"/><rect x="29" y="88" width="3" height="1" fill="#ff1010"/><rect x="32" y="91" width="3" height="1" fill="#ff1010"/><rect x="35" y="92" width="3" height="1" fill="#ff1010"/><rect x="37" y="89" width="3" height="1" fill="#ff1010"/><rect x="40" y="91" width="3" height="1" fill="#ff1010"/><rect x="43" y="90" width="3" height="1" fill="#ff1010"/><rect x="46" y="87" width="3" height="1" fill="#ff1010"/><rect x="50" y="91" width="3" height="1" fill="#ff1010"/><rect x="53" y="89" width="3" height="1" fill="#ff1010"/><rect x="54" y="87" width="4" height="1" fill="#ff1010"/><rect x="58" y="86" width="3" height="1" fill="#ff1010"/><rect x="61" y="92" width="3" height="1" fill="#ff1010"/><rect x="64" y="91" width="3" height="1" fill="#ff1010"/><rect x="67" y="90" width="3" height="1" fill="#ff1010"/><rect x="71" y="92" width="3" height="1" fill="#ff1010"/><rect x="74" y="91" width="3" height="1" fill="#ff1010"/><rect x="77" y="89" width="3" height="1" fill="#ff1010"/><rect x="80" y="91" width="3" height="1" fill="#ff1010"/><rect x="83" y="90" width="4" height="1" fill="#ff1010"/><rect x="90" y="85" width="3" height="1" fill="#ff1010"/><rect x="93" y="93" width="3" height="1" fill="#ff1010"/><rect x="96" y="92" width="3" height="1" fill="#ff1010"/><rect x="98" y="85" width="3" height="1" fill="#ff1010"/><rect x="101" y="88" width="3" height="1" fill="#ff1010"/><rect x="104" y="90" width="3" height="1" fill="#ff1010"/><rect x="107" y="88" width="3" height="1" fill="#ff1010"/><rect x="110" y="89" width="3" height="1" fill="#ff1010"/><rect x="114" y="87" width="3" height="1" fill="#ff1010"/><rect x="117" y="90" width="3" height="1" fill="#ff1010"/><rect x="120" y="87" width="3" height="1" fill="#ff1010"/><rect x="123" y="89" width="3" height="1" fill="#ff1010"/><rect x="126" y="89" width="5" height="1" fill="#ff1010"/><rect x="131" y="92" width="3" height="1" fill="#ff1010"/><rect x="134" y="89" width="5" height="1" fill="#ff1010"/><rect x="139" y="91" width="3" height="1" fill="#ff1010"/><rect x="143" y="89" width="3" height="1" fill="#ff1010"/><rect x="146" y="94" width="3" height="1" fill="#ff1010"/><rect x="149" y="91" width="3" height="1" fill="#ff1010"/><rect x="152" y="90" width="3" height="1" fill="#ff1010"/><rect x="155" y="89" width="6" height="1" fill="#ff1010"/><rect x="161" y="88" width="3" height="1" fill="#ff1010"/><rect x="164" y="90" width="3" height="1" fill="#ff1010"/><rect x="167" y="91" width="3" height="1" fill="#ff1010"/><rect x="170" y="88" width="6" height="1" fill="#ff1010"/><rect x="176" y="90" width="13" height="1" fill="#ff1010"/></svg>
<div class="r" style="left:746px;top:399px;width:6px;height:137px;background:linear-gradient(#800000 0%,#ff0000 12.5%,#ffff00 37.5%,#00ffff 62.5%,#0000ff 87.5%,#000080 100%)"></div>
<div style="left:753px;top:401px;width:6px;height:1px;background:#000;" class="r"></div>
<div class="t" style="top:397.30px;font-size:8.5px;font-weight:normal;color:#000;left:759.50px;-webkit-text-stroke:0.25px #000;">290</div>
<div style="left:753px;top:433px;width:6px;height:1px;background:#000;" class="r"></div>
<div class="t" style="top:428.80px;font-size:8.5px;font-weight:normal;color:#000;left:759.50px;-webkit-text-stroke:0.25px #000;">270</div>
<div style="left:753px;top:467px;width:6px;height:1px;background:#000;" class="r"></div>
<div class="t" style="top:462.80px;font-size:8.5px;font-weight:normal;color:#000;left:759.50px;-webkit-text-stroke:0.25px #000;">250</div>
<div style="left:753px;top:501px;width:6px;height:1px;background:#000;" class="r"></div>
<div class="t" style="top:496.80px;font-size:8.5px;font-weight:normal;color:#000;left:759.50px;-webkit-text-stroke:0.25px #000;">230</div>
<div style="left:753px;top:535px;width:6px;height:1px;background:#000;" class="r"></div>
<div class="t" style="top:526.80px;font-size:8.5px;font-weight:normal;color:#000;left:759.50px;-webkit-text-stroke:0.25px #000;">210</div>
<div style="left:441px;top:532px;width:1px;height:11px;background:#000;" class="r"></div>
<div style="left:466px;top:532px;width:1px;height:6px;background:#000;" class="r"></div>
<div style="left:491px;top:532px;width:1px;height:11px;background:#000;" class="r"></div>
<div style="left:516px;top:532px;width:1px;height:6px;background:#000;" class="r"></div>
<div style="left:541px;top:532px;width:1px;height:11px;background:#000;" class="r"></div>
<div style="left:566px;top:532px;width:1px;height:6px;background:#000;" class="r"></div>
<div style="left:591px;top:532px;width:1px;height:11px;background:#000;" class="r"></div>
<div style="left:617px;top:532px;width:1px;height:6px;background:#000;" class="r"></div>
<div style="left:642px;top:532px;width:1px;height:11px;background:#000;" class="r"></div>
<div style="left:667px;top:532px;width:1px;height:6px;background:#000;" class="r"></div>
<div style="left:692px;top:532px;width:1px;height:11px;background:#000;" class="r"></div>
<div style="left:717px;top:532px;width:1px;height:6px;background:#000;" class="r"></div>
<div style="left:742px;top:532px;width:1px;height:11px;background:#000;" class="r"></div>
<div class="t" style="top:544.80px;font-size:8.5px;font-weight:normal;color:#000;left:436.33px;transform:scaleX(1.097);-webkit-text-stroke:0.25px #000;">21:40</div>
<div class="t" style="top:544.80px;font-size:8.5px;font-weight:normal;color:#000;left:486.63px;transform:scaleX(1.097);-webkit-text-stroke:0.25px #000;">22:00</div>
<div class="t" style="top:544.80px;font-size:8.5px;font-weight:normal;color:#000;left:536.93px;transform:scaleX(1.097);-webkit-text-stroke:0.25px #000;">22:20</div>
<div class="t" style="top:544.80px;font-size:8.5px;font-weight:normal;color:#000;left:587.23px;transform:scaleX(1.097);-webkit-text-stroke:0.25px #000;">22:40</div>
<div class="t" style="top:544.80px;font-size:8.5px;font-weight:normal;color:#000;left:637.53px;transform:scaleX(1.097);-webkit-text-stroke:0.25px #000;">23:00</div>
<div class="t" style="top:544.80px;font-size:8.5px;font-weight:normal;color:#000;left:687.83px;transform:scaleX(1.097);-webkit-text-stroke:0.25px #000;">23:20</div>
<div class="t" style="top:544.80px;font-size:8.5px;font-weight:normal;color:#000;left:738.13px;transform:scaleX(1.097);-webkit-text-stroke:0.25px #000;">23:40</div>
<div class="t" style="top:566.96px;font-size:9.5px;font-weight:normal;color:#000;left:406.17px;transform:scaleX(1.134);-webkit-text-stroke:0.25px #000;">ILW</div>
<div style="left:441px;top:577px;width:302px;height:133px;background:#000;" class="r"></div>
<div style="left:436px;top:579px;width:5px;height:1px;background:#000;" class="r"></div>
<div class="t" style="top:575.20px;font-size:8.5px;font-weight:normal;color:#000;right:564.46px;-webkit-text-stroke:0.25px #000;">2</div>
<div style="left:436px;top:645px;width:5px;height:1px;background:#000;" class="r"></div>
<div class="t" style="top:641.20px;font-size:8.5px;font-weight:normal;color:#000;right:564.46px;-webkit-text-stroke:0.25px #000;">1</div>
<div style="left:436px;top:710px;width:5px;height:1px;background:#000;" class="r"></div>
<div class="t" style="top:702.80px;font-size:8.5px;font-weight:normal;color:#000;right:564.46px;-webkit-text-stroke:0.25px #000;">0</div>
<svg style="left:441px;top:577px" width="302" height="133" shape-rendering="crispEdges"><polygon points="0,133 0,126 2,126 2,123 5,123 5,111 8,111 8,122 17,122 17,120 20,120 20,124 24,124 24,122 26,122 26,121 33,121 33,123 39,123 39,123 42,123 42,123 45,123 45,126 50,126 50,127 60,127 60,120 65,120 65,125 68,125 68,122 71,122 71,119 74,119 74,125 83,125 83,120 89,120 89,113 93,113 93,120 96,120 96,126 101,126 101,127 103,127 103,130 109,130 109,128 114,128 114,129 116,129 116,127 120,127 120,117 128,117 128,113 131,113 131,118 134,118 134,121 136,121 136,120 141,120 141,123 147,123 147,125 152,125 152,127 155,127 155,125 159,125 159,127 162,127 162,129 169,129 169,127 173,127 173,122 177,122 177,122 189,122 189,133" fill="#00ff00"/></svg>
<div style="left:441px;top:710px;width:1px;height:11px;background:#000;" class="r"></div>
<div style="left:466px;top:710px;width:1px;height:6px;background:#000;" class="r"></div>
<div style="left:491px;top:710px;width:1px;height:11px;background:#000;" class="r"></div>
<div style="left:516px;top:710px;width:1px;height:6px;background:#000;" class="r"></div>
<div style="left:541px;top:710px;width:1px;height:11px;background:#000;" class="r"></div>
<div style="left:566px;top:710px;width:1px;height:6px;background:#000;" class="r"></div>
<div style="left:591px;top:710px;width:1px;height:11px;background:#000;" class="r"></div>
<div style="left:617px;top:710px;width:1px;height:6px;background:#000;" class="r"></div>
<div style="left:642px;top:710px;width:1px;height:11px;background:#000;" class="r"></div>
<div style="left:667px;top:710px;width:1px;height:6px;background:#000;" class="r"></div>
<div style="left:692px;top:710px;width:1px;height:11px;background:#000;" class="r"></div>
<div style="left:717px;top:710px;width:1px;height:6px;background:#000;" class="r"></div>
<div style="left:742px;top:710px;width:1px;height:11px;background:#000;" class="r"></div>
<div class="t" style="top:722.80px;font-size:8.5px;font-weight:normal;color:#000;left:436.33px;transform:scaleX(1.097);-webkit-text-stroke:0.25px #000;">21:40</div>
<div class="t" style="top:722.80px;font-size:8.5px;font-weight:normal;color:#000;left:486.63px;transform:scaleX(1.097);-webkit-text-stroke:0.25px #000;">22:00</div>
<div class="t" style="top:722.80px;font-size:8.5px;font-weight:normal;color:#000;left:536.93px;transform:scaleX(1.097);-webkit-text-stroke:0.25px #000;">22:20</div>
<div class="t" style="top:722.80px;font-size:8.5px;font-weight:normal;color:#000;left:587.23px;transform:scaleX(1.097);-webkit-text-stroke:0.25px #000;">22:40</div>
<div class="t" style="top:722.80px;font-size:8.5px;font-weight:normal;color:#000;left:637.53px;transform:scaleX(1.097);-webkit-text-stroke:0.25px #000;">23:00</div>
<div class="t" style="top:722.80px;font-size:8.5px;font-weight:normal;color:#000;left:687.83px;transform:scaleX(1.097);-webkit-text-stroke:0.25px #000;">23:20</div>
<div class="t" style="top:722.80px;font-size:8.5px;font-weight:normal;color:#000;left:738.13px;transform:scaleX(1.097);-webkit-text-stroke:0.25px #000;">23:40</div>
<div class="t" style="top:54.25px;font-size:21.2px;font-weight:bold;color:#2a2a2a;left:817.59px;transform:scaleX(1.071);">NIRSS - Local</div>
<div class="t" style="top:109.73px;font-size:10px;font-weight:bold;color:#2a2a2a;left:873.14px;transform:scaleX(1.152);">Mode:</div>
<div class="r" style="left:803px;top:130px;width:86px;height:21px;background:#a80000;border:1px solid #6f86a0"></div>
<div class="t" style="top:136.53px;font-size:10px;font-weight:bold;color:#fff;left:820.57px;transform:scaleX(1.079);">REALTIME</div>
<div class="r" style="left:896px;top:130px;width:82px;height:21px;background:#00a400;border:1px solid #6f86a0"></div>
<div class="t" style="top:136.53px;font-size:10px;font-weight:bold;color:#fff;left:913.56px;transform:scaleX(1.108);">ARCHIVE</div>
<div class="t" style="top:164.83px;font-size:10px;font-weight:bold;color:#2a2a2a;left:839.28px;transform:scaleX(1.169);">Display time (UTC)</div>
<div class="r" style="left:803px;top:188px;width:144px;height:14px;background:#fff;border:1px solid #8197ad;border-top-color:#6f859b"></div>
<div class="t" style="top:191.53px;font-size:10px;font-weight:bold;color:#111;left:805.00px;transform:scaleX(1.250);">2012-02-25 23:40:00</div>
<div class="r" style="left:955px;top:186px;width:22px;height:19px;background:linear-gradient(#f5f8fb,#c8d7e6);border:1px solid #7f97b0;border-radius:1px"></div>
<div class="r" style="left:958px;top:189px;width:16px;height:13px;border:1px solid #a9bccf"></div>
<div class="t" style="top:191.53px;font-size:10px;font-weight:bold;color:#111;left:959.59px;transform:scaleX(1.016);">GO</div>
<div class="r" style="left:807px;top:217px;width:30px;height:19px;background:linear-gradient(#eef3f8 0%,#ffffff 30%,#c3d5e8 100%);border:1px solid #7d93a8;border-radius:1px"></div>
<div class="t" style="top:222.53px;font-size:10px;font-weight:normal;color:#111;left:812.52px;transform:scaleX(1.195);-webkit-text-stroke:0.3px #111;">&lt;&lt;&lt;</div>
<div class="r" style="left:844px;top:217px;width:22px;height:19px;background:linear-gradient(#eef3f8 0%,#ffffff 30%,#c3d5e8 100%);border:1px solid #7d93a8;border-radius:1px"></div>
<div class="t" style="top:222.53px;font-size:10px;font-weight:normal;color:#111;left:849.02px;transform:scaleX(1.194);-webkit-text-stroke:0.3px #111;">&lt;&lt;</div>
<div class="r" style="left:873px;top:217px;width:14px;height:19px;background:linear-gradient(#eef3f8 0%,#ffffff 30%,#c3d5e8 100%);border:1px solid #7d93a8;border-radius:1px"></div>
<div class="t" style="top:222.53px;font-size:10px;font-weight:normal;color:#111;left:877.52px;transform:scaleX(1.190);-webkit-text-stroke:0.3px #111;">&lt;</div>
<div class="r" style="left:894px;top:217px;width:14px;height:19px;background:linear-gradient(#eef3f8 0%,#ffffff 30%,#c3d5e8 100%);border:1px solid #7d93a8;border-radius:1px"></div>
<div class="t" style="top:222.53px;font-size:10px;font-weight:normal;color:#111;left:898.52px;transform:scaleX(1.190);-webkit-text-stroke:0.3px #111;">&gt;</div>
<div class="r" style="left:915px;top:217px;width:22px;height:19px;background:linear-gradient(#eef3f8 0%,#ffffff 30%,#c3d5e8 100%);border:1px solid #7d93a8;border-radius:1px"></div>
<div class="t" style="top:222.53px;font-size:10px;font-weight:normal;color:#111;left:920.02px;transform:scaleX(1.194);-webkit-text-stroke:0.3px #111;">&gt;&gt;</div>
<div class="r" style="left:944px;top:217px;width:30px;height:19px;background:linear-gradient(#eef3f8 0%,#ffffff 30%,#c3d5e8 100%);border:1px solid #7d93a8;border-radius:1px"></div>
<div class="t" style="top:222.53px;font-size:10px;font-weight:normal;color:#111;left:949.52px;transform:scaleX(1.195);-webkit-text-stroke:0.3px #111;">&gt;&gt;&gt;</div>
<div class="t" style="top:252.99px;font-size:13px;font-weight:normal;color:#222;left:812.90px;transform:scaleX(1.160);-webkit-text-stroke:0.5px #222;">Time zoom:</div>
<div class="r" style="left:898px;top:248px;width:69px;height:22px;background:linear-gradient(#eef3f8,#e6edf4);border:1px solid #7f97b0;border-radius:1px"></div>
<div class="r" style="left:949px;top:249px;width:18px;height:22px;background:linear-gradient(#f3f7fa,#c8d8e7);border-left:1px solid #7f97b0"></div>
<div class="t" style="top:252.99px;font-size:13px;font-weight:normal;color:#222;left:900.97px;transform:scaleX(1.202);">2 hrs</div>
<svg style="left:954px;top:258px" width="11" height="6"><polygon points="0,0 10,0 5,5" fill="#222"/></svg>
</body></html>
